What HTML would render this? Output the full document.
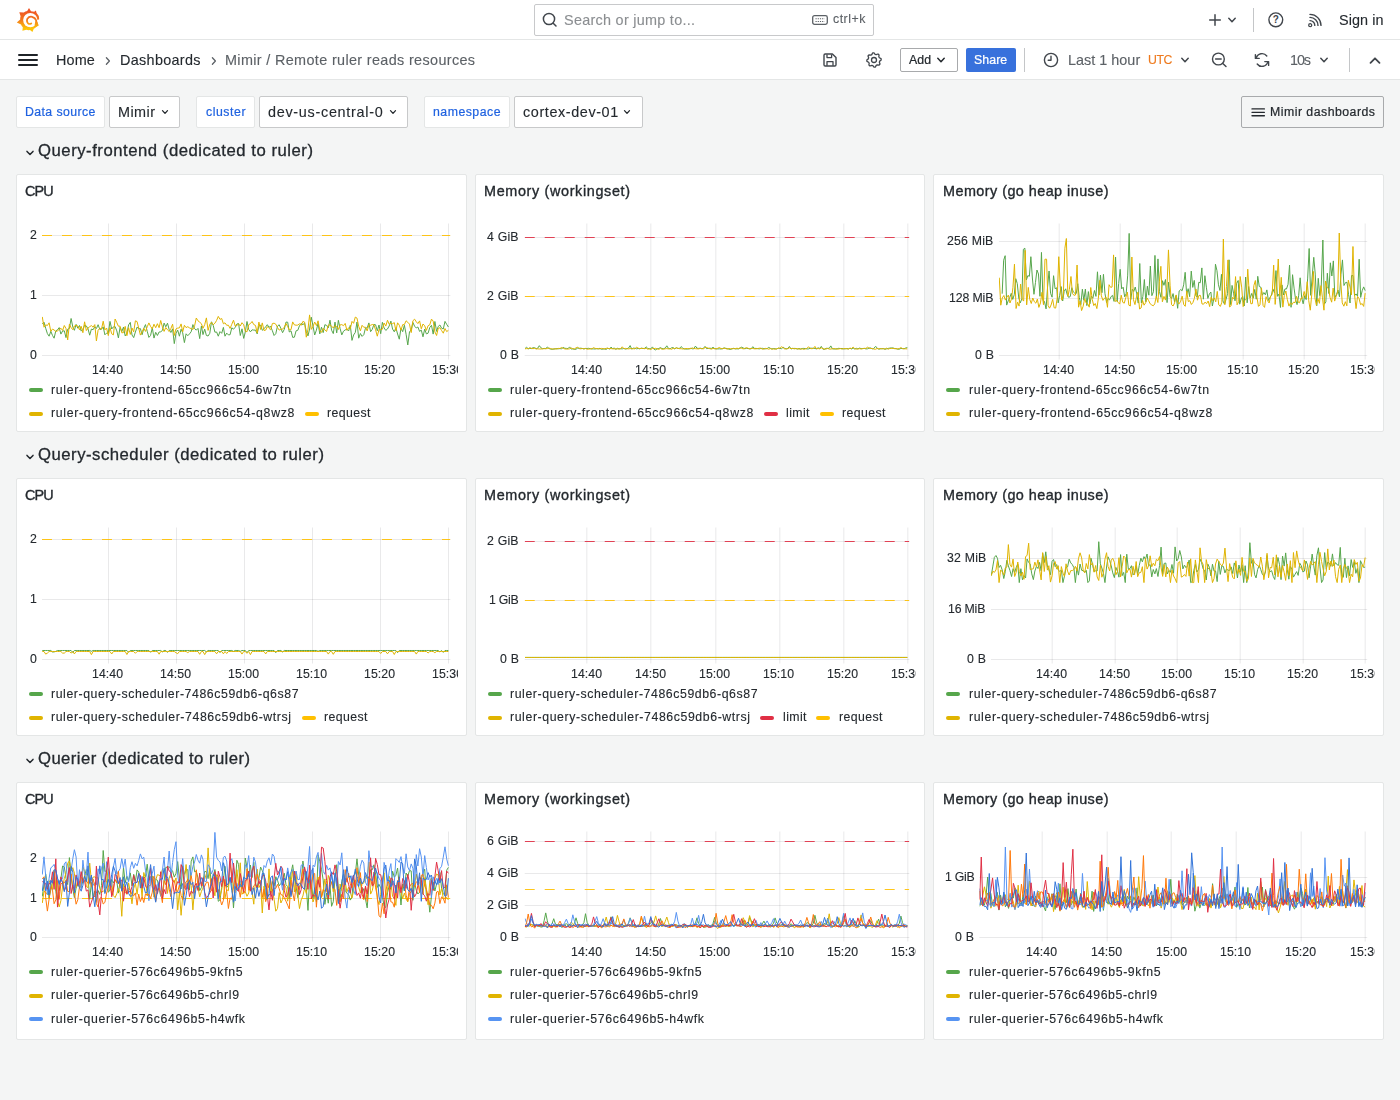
<!DOCTYPE html><html><head><meta charset="utf-8"><title>Mimir / Remote ruler reads resources</title><style>
*{box-sizing:border-box}
html,body{margin:0;padding:0}
body{width:1400px;height:1100px;overflow:hidden;background:#f4f5f5;font-family:"Liberation Sans", sans-serif;color:#24292e;position:relative;font-size:14px}
.abs{position:absolute}
.t{line-height:20px;height:20px;white-space:nowrap;will-change:transform}
.bar{position:absolute;left:0;width:1400px;height:40px;background:#fff;border-bottom:1px solid #e4e6e6}
.panel{position:absolute;background:#fff;border:1px solid #e4e6e6;border-radius:2px;overflow:hidden}
.ptitle{position:absolute;left:8px;top:7px;font-size:14.6px;font-weight:500;line-height:20px;white-space:nowrap;-webkit-text-stroke:0.25px #24292e}
.psvg{position:absolute;left:-1px;top:-1px}
.ax{font-family:"Liberation Sans", sans-serif;font-size:12.4px;fill:#24292e}
.legend{position:absolute;left:13px;font-size:12.6px;line-height:23px;white-space:nowrap}
.lrow{height:23.3px;display:flex;align-items:center}
.li{display:inline-flex;align-items:center;margin-right:10px}
.li i{display:inline-block;width:14px;height:4px;border-radius:2px;margin-right:8px}
.rowt{position:absolute;left:38px;font-size:17px;font-weight:500;line-height:30px;white-space:nowrap;-webkit-text-stroke:0.3px #24292e}
.vlabel{position:absolute;top:96px;height:32px;background:#fff;border:1px solid #e4e6e6;border-radius:2px;color:#1f62e0;font-size:12.6px;line-height:30px;padding-left:8px;white-space:nowrap;-webkit-text-stroke:0.2px #1f62e0}
.vsel{position:absolute;top:96px;height:32px;background:#fff;border:1px solid #c8c9ca;border-radius:2px;font-size:14.6px;line-height:30px;padding-left:8px;white-space:nowrap}
</style></head><body>
<div class="bar" style="top:0"></div>
<svg class="abs" style="left:15px;top:6px" width="28" height="28" viewBox="0 0 28 28">
<defs><linearGradient id="lg" gradientUnits="userSpaceOnUse" x1="0" y1="2" x2="0" y2="26"><stop offset="0.12" stop-color="#ee5426"/><stop offset="0.5" stop-color="#f47a1c"/><stop offset="0.85" stop-color="#fcc40a"/></linearGradient></defs>
<path fill="url(#lg)" d="M14 1.9 L16 5.2 Q17.6 5.2 19.2 5.8 L20.9 4.4 L21.6 7 Q24.6 9.8 24.2 13.2 L23.6 13.8 L22.4 17.4 L23.9 19.3 L21 20.6 Q20.2 22 18.8 22.8 L17.4 25.9 L15 24 Q13 24.4 11.4 23.8 L7.4 24.7 L7.8 21.2 Q6.6 20 6 18.4 L1.8 16.5 L5.2 13.6 Q5 11.8 5.6 10.2 L4.3 6.2 L8.8 6.4 Q10.4 5.2 12.2 5 Z"/>
<circle cx="15.3" cy="14.1" r="7.15" fill="#fff"/>
<path d="M21.6 13.9 L25 13.5 L25 16.4 L22.6 17.2 Z" fill="#fff"/>
<path fill="none" stroke="url(#lg)" stroke-width="1.7" stroke-linecap="round" d="M16.3 17.5 Q14.6 18.6 13 17.3 Q11.2 15.2 12.4 12.7 Q14 10.3 17 10.8 Q20.4 11.6 21.3 14.8 Q21.8 17.2 21.6 19.6"/>
<path fill="url(#lg)" d="M20.4 15 L22.6 16.6 L23.4 19.6 L19 22.4 Z"/>
</svg>
<div class="abs" style="left:534px;top:4px;width:340px;height:32px;border:1px solid #c8c9cb;border-radius:2px;background:#fff"></div>
<svg class="abs" style="left:541px;top:11px" width="18" height="18" viewBox="0 0 18 18"><circle cx="8" cy="8" r="5.6" fill="none" stroke="#41464c" stroke-width="1.5"/><path d="M12.2 12.2 L15 15" stroke="#41464c" stroke-width="1.5" stroke-linecap="round"/></svg>
<div class="abs t" style="left:563.50px;top:12px;height:16px;line-height:16px;font-size:14.4px;color:#8b8e91;font-weight:400;letter-spacing:0.285px;-webkit-text-stroke:0.12px #8b8e91;">Search or jump to...</div>
<svg class="abs" style="left:811px;top:13px" width="18" height="14" viewBox="0 0 18 14"><rect x="1.7" y="2.7" width="14.6" height="8.6" rx="1.8" fill="none" stroke="#5c6166" stroke-width="1.3"/><path d="M4.5 5.7 H13.5 M4.5 8.5 H13.5" stroke="#5c6166" stroke-width="1.1" stroke-dasharray="1.2 1"/></svg>
<div class="abs t" style="left:833.00px;top:12px;height:14px;line-height:14px;font-size:12.3px;color:#5c6166;font-weight:400;letter-spacing:0.513px;-webkit-text-stroke:0.12px #5c6166;">ctrl+k</div>
<svg class="abs" style="left:1205px;top:10px" width="34" height="20" viewBox="0 0 34 20"><path d="M10 4.7 V15.3 M4.7 10 H15.3" stroke="#41464c" stroke-width="1.5" stroke-linecap="round"/><path d="M23.8 8.3 L27 11.7 L30.2 8.3" fill="none" stroke="#41464c" stroke-width="1.5" stroke-linecap="round" stroke-linejoin="round"/></svg>
<div class="abs" style="left:1253px;top:8px;width:1px;height:24px;background:#c4c6c8"></div>
<svg class="abs" style="left:1266px;top:10px" width="20" height="20" viewBox="0 0 20 20"><circle cx="9.8" cy="9.8" r="6.9" fill="none" stroke="#41464c" stroke-width="1.4"/><text x="9.8" y="13.4" text-anchor="middle" font-size="10" font-weight="700" fill="#41464c" font-family="Liberation Sans, sans-serif">?</text></svg>
<svg class="abs" style="left:1306px;top:12px" width="18" height="18" viewBox="0 0 18 18"><circle cx="4.2" cy="13.2" r="1.5" fill="none" stroke="#41464c" stroke-width="1.3"/><path d="M4 8.6 A4.8 4.8 0 0 1 8.8 13.4 M4 5.4 A8 8 0 0 1 12 13.4 M4 2.4 A11 11 0 0 1 15 13.4" fill="none" stroke="#41464c" stroke-width="1.4" stroke-linecap="round"/></svg>
<div class="abs t" style="left:1338.50px;top:12px;height:16px;line-height:16px;font-size:14.4px;color:#24292e;font-weight:400;letter-spacing:0.081px;-webkit-text-stroke:0.12px #24292e;">Sign in</div>
<div class="bar" style="top:40px"></div>
<svg class="abs" style="left:16px;top:50px" width="24" height="20" viewBox="0 0 24 20"><path d="M3 5 H21 M3 10 H21 M3 15 H21" stroke="#1f2328" stroke-width="2" stroke-linecap="round"/></svg>
<div class="abs t" style="left:56.20px;top:52px;height:16px;line-height:16px;font-size:14.4px;color:#24292e;font-weight:400;letter-spacing:0.136px;-webkit-text-stroke:0.12px #24292e;">Home</div>
<svg class="abs" style="left:102px;top:54.8px" width="12" height="12" viewBox="0 0 12 12"><path d="M4.4 2.8 L7.4 6 L4.4 9.2" fill="none" stroke="#5c6166" stroke-width="1.3" stroke-linecap="round" stroke-linejoin="round"/></svg>
<div class="abs t" style="left:120.00px;top:52px;height:16px;line-height:16px;font-size:14.4px;color:#24292e;font-weight:400;letter-spacing:0.321px;-webkit-text-stroke:0.12px #24292e;">Dashboards</div>
<svg class="abs" style="left:208px;top:54.8px" width="12" height="12" viewBox="0 0 12 12"><path d="M4.4 2.8 L7.4 6 L4.4 9.2" fill="none" stroke="#5c6166" stroke-width="1.3" stroke-linecap="round" stroke-linejoin="round"/></svg>
<div class="abs t" style="left:225.00px;top:52px;height:16px;line-height:16px;font-size:14.4px;color:#5c6166;font-weight:400;letter-spacing:0.357px;-webkit-text-stroke:0.12px #5c6166;">Mimir / Remote ruler reads resources</div>
<svg class="abs" style="left:821px;top:51px" width="18" height="18" viewBox="0 0 18 18"><path d="M3 4.2 Q3 3 4.2 3 H11.4 L15 6.6 V13.8 Q15 15 13.8 15 H4.2 Q3 15 3 13.8 Z" fill="none" stroke="#41464c" stroke-width="1.4" stroke-linejoin="round"/><path d="M6 3.4 V6.6 H10.6 V3.4 M6 14.8 V10.6 H12 V14.8" fill="none" stroke="#41464c" stroke-width="1.3" stroke-linejoin="round"/></svg>
<svg class="abs" style="left:865px;top:51px" width="18" height="18" viewBox="0 0 18 18"><path d="M7.60 1.94 L9.00 1.80 L10.13 3.31 L11.22 3.64 L13.00 3.01 L14.09 3.91 L13.82 5.78 L14.36 6.78 L16.06 7.60 L16.20 9.00 L14.69 10.13 L14.36 11.22 L14.99 13.00 L14.09 14.09 L12.22 13.82 L11.22 14.36 L10.40 16.06 L9.00 16.20 L7.87 14.69 L6.78 14.36 L5.00 14.99 L3.91 14.09 L4.18 12.22 L3.64 11.22 L1.94 10.40 L1.80 9.00 L3.31 7.87 L3.64 6.78 L3.01 5.00 L3.91 3.91 L5.78 4.18 L6.78 3.64 Z" fill="none" stroke="#41464c" stroke-width="1.3" stroke-linejoin="round"/><circle cx="9" cy="9" r="2.5" fill="none" stroke="#41464c" stroke-width="1.3"/></svg>
<div class="abs" style="left:900px;top:48px;width:58px;height:24px;border:1px solid #a8aaac;border-radius:2px;background:#fff"></div>
<div class="abs t" style="left:909.00px;top:53px;height:14px;line-height:14px;font-size:12.3px;color:#24292e;font-weight:400;letter-spacing:0.055px;-webkit-text-stroke:0.22px #24292e;">Add</div>
<svg class="abs" style="left:934px;top:54px" width="14" height="12" viewBox="0 0 14 12"><path d="M3.8 4.3 L7 7.7 L10.2 4.3" fill="none" stroke="#24292e" stroke-width="1.5" stroke-linecap="round" stroke-linejoin="round"/></svg>
<div class="abs" style="left:966px;top:48px;width:50px;height:24px;border-radius:2px;background:#3871dc"></div>
<div class="abs t" style="left:974.00px;top:53px;height:14px;line-height:14px;font-size:12.3px;color:#fff;font-weight:400;letter-spacing:0.093px;-webkit-text-stroke:0.22px #fff;">Share</div>
<div class="abs" style="left:1024px;top:48px;width:1px;height:24px;background:#c4c6c8"></div>
<svg class="abs" style="left:1042px;top:51px" width="18" height="18" viewBox="0 0 18 18"><circle cx="9" cy="9" r="6.6" fill="none" stroke="#41464c" stroke-width="1.4"/><path d="M9 5.2 V9.2 H6.2" fill="none" stroke="#41464c" stroke-width="1.4" stroke-linecap="round" stroke-linejoin="round"/></svg>
<div class="abs t" style="left:1068.30px;top:52px;height:16px;line-height:16px;font-size:14.4px;color:#5c6166;font-weight:400;letter-spacing:0.018px;-webkit-text-stroke:0.12px #5c6166;">Last 1 hour</div>
<div class="abs t" style="left:1148.20px;top:53px;height:14px;line-height:14px;font-size:12.3px;color:#ee7a1e;font-weight:400;letter-spacing:-0.391px;-webkit-text-stroke:0.12px #ee7a1e;">UTC</div>
<svg class="abs" style="left:1178px;top:54px" width="14" height="12" viewBox="0 0 14 12"><path d="M3.8 4.3 L7 7.7 L10.2 4.3" fill="none" stroke="#41464c" stroke-width="1.5" stroke-linecap="round" stroke-linejoin="round"/></svg>
<svg class="abs" style="left:1210px;top:51.3px" width="20" height="20" viewBox="0 0 20 20"><circle cx="8.4" cy="8" r="5.9" fill="none" stroke="#41464c" stroke-width="1.4"/><path d="M5.6 8 H11.2 M12.8 12.4 L16 15.6" stroke="#41464c" stroke-width="1.4" stroke-linecap="round"/></svg>
<svg class="abs" style="left:1252px;top:50px" width="20" height="20" viewBox="0 0 20 20"><path d="M4.2 8.2 A6 6 0 0 1 14.8 6 M15.8 11.8 A6 6 0 0 1 5.2 14" fill="none" stroke="#41464c" stroke-width="1.4" stroke-linecap="round"/><path d="M3.4 4.6 V8.4 H7.2 M16.6 15.4 V11.6 H12.8" fill="none" stroke="#41464c" stroke-width="1.4" stroke-linecap="round" stroke-linejoin="round"/></svg>
<div class="abs t" style="left:1289.80px;top:52px;height:16px;line-height:16px;font-size:14.4px;color:#5c6166;font-weight:400;letter-spacing:-1.102px;-webkit-text-stroke:0.12px #5c6166;">10s</div>
<svg class="abs" style="left:1317px;top:54px" width="14" height="12" viewBox="0 0 14 12"><path d="M3.8 4.3 L7 7.7 L10.2 4.3" fill="none" stroke="#41464c" stroke-width="1.5" stroke-linecap="round" stroke-linejoin="round"/></svg>
<div class="abs" style="left:1349px;top:48px;width:1px;height:24px;background:#c4c6c8"></div>
<svg class="abs" style="left:1365px;top:52px" width="20" height="16" viewBox="0 0 20 16"><path d="M5.5 10.9 L10 6.3 L14.5 10.9" fill="none" stroke="#41464c" stroke-width="1.8" stroke-linecap="round" stroke-linejoin="round"/></svg>
<div class="vlabel" style="left:16px;width:88.5px"></div><div class="abs t" style="left:25.20px;top:105px;height:14px;line-height:14px;font-size:12.3px;color:#1f62e0;font-weight:400;letter-spacing:0.399px;-webkit-text-stroke:0.2px #1f62e0;">Data source</div>
<div class="vsel" style="left:109px;width:71px"></div><div class="abs t" style="left:117.50px;top:104px;height:16px;line-height:16px;font-size:14.4px;color:#24292e;font-weight:400;letter-spacing:0.457px;-webkit-text-stroke:0.12px #24292e;">Mimir</div><svg class="abs" style="left:157.5px;top:106.3px" width="14" height="12" viewBox="0 0 14 12"><path d="M4.5 4.65 L7 7.35 L9.5 4.65" fill="none" stroke="#24292e" stroke-width="1.3" stroke-linecap="round" stroke-linejoin="round"/></svg>
<div class="vlabel" style="left:196px;width:58.5px"></div><div class="abs t" style="left:205.50px;top:105px;height:14px;line-height:14px;font-size:12.3px;color:#1f62e0;font-weight:400;letter-spacing:0.547px;-webkit-text-stroke:0.2px #1f62e0;">cluster</div>
<div class="vsel" style="left:259px;width:149px"></div><div class="abs t" style="left:267.80px;top:104px;height:16px;line-height:16px;font-size:14.4px;color:#24292e;font-weight:400;letter-spacing:0.714px;-webkit-text-stroke:0.12px #24292e;">dev-us-central-0</div><svg class="abs" style="left:385.5px;top:106.3px" width="14" height="12" viewBox="0 0 14 12"><path d="M4.5 4.65 L7 7.35 L9.5 4.65" fill="none" stroke="#24292e" stroke-width="1.3" stroke-linecap="round" stroke-linejoin="round"/></svg>
<div class="vlabel" style="left:424px;width:85.5px"></div><div class="abs t" style="left:433.20px;top:105px;height:14px;line-height:14px;font-size:12.3px;color:#1f62e0;font-weight:400;letter-spacing:0.490px;-webkit-text-stroke:0.2px #1f62e0;">namespace</div>
<div class="vsel" style="left:514px;width:128.5px"></div><div class="abs t" style="left:523.00px;top:104px;height:16px;line-height:16px;font-size:14.4px;color:#24292e;font-weight:400;letter-spacing:0.601px;-webkit-text-stroke:0.12px #24292e;">cortex-dev-01</div><svg class="abs" style="left:620px;top:106.3px" width="14" height="12" viewBox="0 0 14 12"><path d="M4.5 4.65 L7 7.35 L9.5 4.65" fill="none" stroke="#24292e" stroke-width="1.3" stroke-linecap="round" stroke-linejoin="round"/></svg>
<div class="abs" style="left:1241px;top:96px;width:143px;height:32px;border:1px solid #a8aaac;border-radius:2px;background:#f4f5f5"></div>
<svg class="abs" style="left:1250px;top:105px" width="16" height="14" viewBox="0 0 16 14"><path d="M2 3.9 H14.4 M2 7.3 H14.4 M2 10.7 H14.4" stroke="#24292e" stroke-width="1.35" stroke-linecap="round"/></svg>
<div class="abs t" style="left:1270.00px;top:105px;height:14px;line-height:14px;font-size:12.3px;color:#24292e;font-weight:400;letter-spacing:0.484px;-webkit-text-stroke:0.22px #24292e;">Mimir dashboards</div>
<svg class="abs" style="left:24px;top:146.8px" width="12" height="12" viewBox="0 0 12 12"><path d="M3 4.4 L6 7.5 L9 4.4" fill="none" stroke="#24292e" stroke-width="1.5" stroke-linecap="round" stroke-linejoin="round"/></svg>
<div class="abs t" style="left:38.30px;top:141px;height:19px;line-height:19px;font-size:16.7px;color:#24292e;font-weight:400;letter-spacing:0.531px;-webkit-text-stroke:0.3px #24292e;">Query-frontend (dedicated to ruler)</div>
<svg class="abs" style="left:24px;top:450.8px" width="12" height="12" viewBox="0 0 12 12"><path d="M3 4.4 L6 7.5 L9 4.4" fill="none" stroke="#24292e" stroke-width="1.5" stroke-linecap="round" stroke-linejoin="round"/></svg>
<div class="abs t" style="left:38.30px;top:445px;height:19px;line-height:19px;font-size:16.7px;color:#24292e;font-weight:400;letter-spacing:0.512px;-webkit-text-stroke:0.3px #24292e;">Query-scheduler (dedicated to ruler)</div>
<svg class="abs" style="left:24px;top:754.8px" width="12" height="12" viewBox="0 0 12 12"><path d="M3 4.4 L6 7.5 L9 4.4" fill="none" stroke="#24292e" stroke-width="1.5" stroke-linecap="round" stroke-linejoin="round"/></svg>
<div class="abs t" style="left:38.30px;top:749px;height:19px;line-height:19px;font-size:16.7px;color:#24292e;font-weight:400;letter-spacing:0.432px;-webkit-text-stroke:0.3px #24292e;">Querier (dedicated to ruler)</div>
<div class="panel" style="left:16px;top:174px;width:450.67px;height:258px">
<svg class="psvg" width="450.67" height="258" viewBox="16 174 450.67 258">
<path d="M108.5 223.5 V359.5 M176.5 223.5 V359.5 M244.5 223.5 V359.5 M312.5 223.5 V359.5 M380.5 223.5 V359.5 M448.5 223.5 V359.5" stroke="rgba(36,41,46,0.105)" stroke-width="1" fill="none"/>
<path d="M42.0 235.5 H450.4 M42.0 295.5 H450.4 M42.0 355.5 H450.4" stroke="rgba(36,41,46,0.105)" stroke-width="1" fill="none"/>
<clipPath id="p1"><rect x="42.0" y="215.5" width="408.4" height="141.5"/></clipPath>
<g clip-path="url(#p1)" fill="none" stroke-width="1" stroke-linejoin="round">
<path d="M42.0 235.5 H450.4" stroke="#ffc000" stroke-opacity="0.9" stroke-dasharray="10 10"/>
<path d="M42.3,324.1 L44.0,322.1 L45.7,328.3 L47.4,333.6 L49.1,336.2 L50.8,331.3 L52.5,335.4 L54.1,338.2 L55.8,330.9 L57.5,329.8 L59.2,327.6 L60.9,334.1 L62.6,331.0 L64.3,330.8 L66.0,337.6 L67.7,329.2 L69.4,328.5 L71.1,318.5 L72.8,327.0 L74.4,330.3 L76.1,324.4 L77.8,328.2 L79.5,325.5 L81.2,331.1 L82.9,329.4 L84.6,325.2 L86.3,325.9 L88.0,328.8 L89.7,335.2 L91.4,329.1 L93.1,329.7 L94.8,326.7 L96.4,328.5 L98.1,324.7 L99.8,329.4 L101.5,329.2 L103.2,326.9 L104.9,334.8 L106.6,333.1 L108.3,333.3 L110.0,321.4 L111.7,329.0 L113.4,326.9 L115.1,326.6 L116.8,330.9 L118.4,337.9 L120.1,327.2 L121.8,331.6 L123.5,327.1 L125.2,335.9 L126.9,333.5 L128.6,324.9 L130.3,322.4 L132.0,335.0 L133.7,337.6 L135.4,332.0 L137.1,327.1 L138.7,328.9 L140.4,328.6 L142.1,334.7 L143.8,328.4 L145.5,324.6 L147.2,331.2 L148.9,337.4 L150.6,335.4 L152.3,327.7 L154.0,338.1 L155.7,332.3 L157.4,335.5 L159.1,332.0 L160.7,331.8 L162.4,330.5 L164.1,323.1 L165.8,326.8 L167.5,323.2 L169.2,329.6 L170.9,332.5 L172.6,328.9 L174.3,343.6 L176.0,333.2 L177.7,330.1 L179.4,336.2 L181.1,329.2 L182.7,332.8 L184.4,342.6 L186.1,333.8 L187.8,335.7 L189.5,333.9 L191.2,331.7 L192.9,324.6 L194.6,328.7 L196.3,330.1 L198.0,328.4 L199.7,338.6 L201.4,326.0 L203.0,334.6 L204.7,329.1 L206.4,335.5 L208.1,336.0 L209.8,333.3 L211.5,321.8 L213.2,325.3 L214.9,332.2 L216.6,332.0 L218.3,336.2 L220.0,331.6 L221.7,333.3 L223.4,327.4 L225.0,336.2 L226.7,333.1 L228.4,334.9 L230.1,334.7 L231.8,327.8 L233.5,329.2 L235.2,327.3 L236.9,324.0 L238.6,323.5 L240.3,335.5 L242.0,328.8 L243.7,338.4 L245.3,332.2 L247.0,321.5 L248.7,329.5 L250.4,331.9 L252.1,329.8 L253.8,330.1 L255.5,330.1 L257.2,333.9 L258.9,325.8 L260.6,325.1 L262.3,330.3 L264.0,328.8 L265.7,326.8 L267.3,324.7 L269.0,327.3 L270.7,326.4 L272.4,330.8 L274.1,335.5 L275.8,333.7 L277.5,326.1 L279.2,324.8 L280.9,328.5 L282.6,332.7 L284.3,329.3 L286.0,322.1 L287.7,322.2 L289.3,332.0 L291.0,330.8 L292.7,337.4 L294.4,337.2 L296.1,330.8 L297.8,330.3 L299.5,325.7 L301.2,323.3 L302.9,324.9 L304.6,322.9 L306.3,331.4 L308.0,335.9 L309.6,329.0 L311.3,317.2 L313.0,326.0 L314.7,335.0 L316.4,330.1 L318.1,323.4 L319.8,333.9 L321.5,327.2 L323.2,332.6 L324.9,324.7 L326.6,325.4 L328.3,327.9 L330.0,320.2 L331.6,330.2 L333.3,333.6 L335.0,322.1 L336.7,332.9 L338.4,320.3 L340.1,328.5 L341.8,334.9 L343.5,331.2 L345.2,329.9 L346.9,329.2 L348.6,331.0 L350.3,325.3 L352.0,340.4 L353.6,335.0 L355.3,332.5 L357.0,322.0 L358.7,338.2 L360.4,333.5 L362.1,336.4 L363.8,334.7 L365.5,328.1 L367.2,327.9 L368.9,322.9 L370.6,331.7 L372.3,329.3 L373.9,324.5 L375.6,324.8 L377.3,330.8 L379.0,325.0 L380.7,333.7 L382.4,322.3 L384.1,328.0 L385.8,330.4 L387.5,329.0 L389.2,326.0 L390.9,321.1 L392.6,329.1 L394.3,331.8 L395.9,327.8 L397.6,334.0 L399.3,339.2 L401.0,328.1 L402.7,331.7 L404.4,325.2 L406.1,334.2 L407.8,345.0 L409.5,331.9 L411.2,329.9 L412.9,322.5 L414.6,326.2 L416.3,328.0 L417.9,327.0 L419.6,331.4 L421.3,330.1 L423.0,336.8 L424.7,329.1 L426.4,333.9 L428.1,333.2 L429.8,327.5 L431.5,325.3 L433.2,334.1 L434.9,321.5 L436.6,331.4 L438.2,326.5 L439.9,325.0 L441.6,328.2 L443.3,329.0 L445.0,321.4 L446.7,324.3 L448.4,327.0" stroke="#56a64b"/>
<path d="M42.3,316.9 L44.0,327.2 L45.7,324.9 L47.4,325.5 L49.1,322.8 L50.8,331.4 L52.5,329.1 L54.1,330.0 L55.8,331.5 L57.5,330.9 L59.2,329.4 L60.9,328.2 L62.6,330.5 L64.3,325.5 L66.0,328.5 L67.7,339.9 L69.4,324.2 L71.1,327.6 L72.8,329.7 L74.4,326.0 L76.1,325.4 L77.8,326.0 L79.5,329.8 L81.2,326.3 L82.9,332.7 L84.6,321.8 L86.3,330.6 L88.0,328.1 L89.7,326.7 L91.4,325.6 L93.1,327.2 L94.8,324.6 L96.4,340.9 L98.1,330.2 L99.8,328.4 L101.5,329.1 L103.2,321.2 L104.9,329.9 L106.6,328.0 L108.3,335.6 L110.0,327.6 L111.7,333.8 L113.4,334.9 L115.1,319.0 L116.8,322.6 L118.4,326.2 L120.1,326.2 L121.8,332.8 L123.5,332.6 L125.2,326.4 L126.9,335.7 L128.6,327.7 L130.3,334.4 L132.0,328.0 L133.7,331.9 L135.4,320.8 L137.1,321.6 L138.7,328.1 L140.4,335.1 L142.1,331.9 L143.8,328.3 L145.5,331.4 L147.2,326.8 L148.9,322.9 L150.6,326.5 L152.3,328.8 L154.0,324.2 L155.7,327.7 L157.4,323.7 L159.1,327.7 L160.7,320.5 L162.4,326.9 L164.1,331.4 L165.8,327.5 L167.5,329.8 L169.2,331.5 L170.9,328.5 L172.6,324.2 L174.3,335.5 L176.0,328.9 L177.7,328.1 L179.4,327.9 L181.1,323.9 L182.7,331.8 L184.4,325.3 L186.1,327.6 L187.8,326.7 L189.5,327.9 L191.2,328.6 L192.9,329.5 L194.6,325.8 L196.3,318.0 L198.0,320.8 L199.7,322.2 L201.4,323.7 L203.0,328.3 L204.7,324.7 L206.4,317.9 L208.1,330.4 L209.8,324.2 L211.5,322.2 L213.2,324.8 L214.9,323.2 L216.6,320.4 L218.3,316.4 L220.0,319.4 L221.7,318.5 L223.4,323.8 L225.0,322.8 L226.7,325.3 L228.4,325.2 L230.1,328.4 L231.8,324.3 L233.5,320.2 L235.2,326.1 L236.9,325.5 L238.6,323.9 L240.3,326.0 L242.0,322.7 L243.7,324.8 L245.3,331.1 L247.0,331.8 L248.7,324.7 L250.4,323.6 L252.1,321.5 L253.8,324.6 L255.5,325.4 L257.2,332.9 L258.9,322.1 L260.6,329.5 L262.3,322.9 L264.0,330.5 L265.7,330.1 L267.3,326.6 L269.0,328.3 L270.7,329.8 L272.4,323.5 L274.1,323.2 L275.8,324.2 L277.5,327.5 L279.2,330.1 L280.9,329.2 L282.6,329.2 L284.3,327.2 L286.0,323.5 L287.7,326.6 L289.3,329.8 L291.0,329.7 L292.7,321.9 L294.4,324.9 L296.1,325.2 L297.8,325.1 L299.5,323.8 L301.2,325.4 L302.9,321.4 L304.6,322.1 L306.3,337.2 L308.0,329.2 L309.6,314.9 L311.3,329.4 L313.0,326.5 L314.7,322.0 L316.4,325.6 L318.1,320.8 L319.8,330.5 L321.5,332.4 L323.2,328.4 L324.9,329.8 L326.6,331.5 L328.3,325.1 L330.0,325.0 L331.6,326.1 L333.3,328.0 L335.0,325.6 L336.7,326.7 L338.4,329.5 L340.1,324.9 L341.8,324.6 L343.5,325.7 L345.2,323.4 L346.9,330.3 L348.6,327.8 L350.3,328.8 L352.0,321.4 L353.6,323.3 L355.3,317.1 L357.0,318.1 L358.7,326.3 L360.4,330.8 L362.1,325.3 L363.8,327.3 L365.5,327.2 L367.2,330.9 L368.9,324.8 L370.6,325.3 L372.3,324.5 L373.9,324.8 L375.6,329.8 L377.3,336.2 L379.0,329.5 L380.7,329.6 L382.4,329.2 L384.1,323.0 L385.8,326.1 L387.5,320.2 L389.2,324.4 L390.9,323.2 L392.6,323.7 L394.3,322.6 L395.9,330.8 L397.6,322.8 L399.3,325.2 L401.0,330.2 L402.7,324.6 L404.4,324.6 L406.1,320.8 L407.8,322.3 L409.5,324.1 L411.2,332.6 L412.9,320.8 L414.6,319.2 L416.3,321.8 L417.9,323.6 L419.6,320.9 L421.3,328.8 L423.0,324.0 L424.7,325.8 L426.4,330.4 L428.1,325.7 L429.8,324.8 L431.5,319.1 L433.2,321.1 L434.9,331.9 L436.6,335.5 L438.2,328.5 L439.9,327.7 L441.6,330.5 L443.3,333.2 L445.0,328.5 L446.7,331.6 L448.4,330.3" stroke="#e0b400"/>
</g>
</svg>
</div>
<div class="abs t" style="left:29.66px;top:228px;height:14px;line-height:14px;font-size:12.3px;color:#24292e;font-weight:400;letter-spacing:0.000px;-webkit-text-stroke:0.12px #24292e;">2</div>
<div class="abs t" style="left:29.66px;top:288px;height:14px;line-height:14px;font-size:12.3px;color:#24292e;font-weight:400;letter-spacing:0.000px;-webkit-text-stroke:0.12px #24292e;">1</div>
<div class="abs t" style="left:29.66px;top:348px;height:14px;line-height:14px;font-size:12.3px;color:#24292e;font-weight:400;letter-spacing:0.000px;-webkit-text-stroke:0.12px #24292e;">0</div>
<div class="abs t" style="left:92.02px;top:363px;height:14px;line-height:14px;font-size:12.3px;color:#24292e;font-weight:400;letter-spacing:0.055px;-webkit-text-stroke:0.12px #24292e;">14:40</div>
<div class="abs t" style="left:160.08px;top:363px;height:14px;line-height:14px;font-size:12.3px;color:#24292e;font-weight:400;letter-spacing:0.055px;-webkit-text-stroke:0.12px #24292e;">14:50</div>
<div class="abs t" style="left:228.15px;top:363px;height:14px;line-height:14px;font-size:12.3px;color:#24292e;font-weight:400;letter-spacing:0.055px;-webkit-text-stroke:0.12px #24292e;">15:00</div>
<div class="abs t" style="left:296.21px;top:363px;height:14px;line-height:14px;font-size:12.3px;color:#24292e;font-weight:400;letter-spacing:0.055px;-webkit-text-stroke:0.12px #24292e;">15:10</div>
<div class="abs t" style="left:364.28px;top:363px;height:14px;line-height:14px;font-size:12.3px;color:#24292e;font-weight:400;letter-spacing:0.055px;-webkit-text-stroke:0.12px #24292e;">15:20</div>
<div class="abs" style="left:432.35px;top:359px;width:25.42px;height:24px;overflow:hidden"><div class="abs t" style="left:0.00px;top:4px;height:14px;line-height:14px;font-size:12.3px;color:#24292e;font-weight:400;letter-spacing:0.055px;-webkit-text-stroke:0.12px #24292e;">15:30</div></div>
<div class="abs t" style="left:25.30px;top:183px;height:16px;line-height:16px;font-size:14.4px;color:#24292e;font-weight:400;letter-spacing:-0.845px;-webkit-text-stroke:0.35px #24292e;">CPU</div>
<div class="abs" style="left:29px;top:388px;width:14px;height:4px;border-radius:2px;background:#56a64b"></div>
<div class="abs t" style="left:51.40px;top:383px;height:14px;line-height:14px;font-size:12.3px;color:#24292e;font-weight:400;letter-spacing:0.667px;-webkit-text-stroke:0.12px #24292e;">ruler-query-frontend-65cc966c54-6w7tn</div>
<div class="abs" style="left:29px;top:411.8px;width:14px;height:4px;border-radius:2px;background:#e0b400"></div>
<div class="abs t" style="left:51.40px;top:406px;height:14px;line-height:14px;font-size:12.3px;color:#24292e;font-weight:400;letter-spacing:0.685px;-webkit-text-stroke:0.12px #24292e;">ruler-query-frontend-65cc966c54-q8wz8</div>
<div class="abs" style="left:305px;top:411.8px;width:14px;height:4px;border-radius:2px;background:#ffc000"></div>
<div class="abs t" style="left:327.40px;top:406px;height:14px;line-height:14px;font-size:12.3px;color:#24292e;font-weight:400;letter-spacing:0.411px;-webkit-text-stroke:0.12px #24292e;">request</div>
<div class="panel" style="left:474.67px;top:174px;width:450.67px;height:258px">
<svg class="psvg" width="450.67" height="258" viewBox="474.67 174 450.67 258">
<path d="M586.5 223.5 V359.5 M650.5 223.5 V359.5 M715.5 223.5 V359.5 M779.5 223.5 V359.5 M843.5 223.5 V359.5 M907.5 223.5 V359.5" stroke="rgba(36,41,46,0.105)" stroke-width="1" fill="none"/>
<path d="M524.4 237.5 H909.0 M524.4 296.5 H909.0 M524.4 355.5 H909.0" stroke="rgba(36,41,46,0.105)" stroke-width="1" fill="none"/>
<clipPath id="p2"><rect x="524.4" y="215.5" width="384.6" height="141.5"/></clipPath>
<g clip-path="url(#p2)" fill="none" stroke-width="1" stroke-linejoin="round">
<path d="M524.4 237.5 H909.0" stroke="#e02f44" stroke-opacity="0.9" stroke-dasharray="10 10"/>
<path d="M524.4 296.5 H909.0" stroke="#ffc000" stroke-opacity="0.9" stroke-dasharray="10 10"/>
<path d="M524.7,348.5 L526.3,347.3 L527.9,348.8 L529.5,348.3 L531.1,348.6 L532.7,347.7 L534.3,347.8 L535.9,348.6 L537.4,348.2 L539.0,345.7 L540.6,347.8 L542.2,348.7 L543.8,348.4 L545.4,348.7 L547.0,347.0 L548.6,348.5 L550.2,349.1 L551.8,349.2 L553.4,349.2 L555.0,348.7 L556.6,348.7 L558.2,348.8 L559.7,348.6 L561.3,348.9 L562.9,347.3 L564.5,348.3 L566.1,348.4 L567.7,348.6 L569.3,346.9 L570.9,349.1 L572.5,348.8 L574.1,349.4 L575.7,349.2 L577.3,348.1 L578.9,348.3 L580.5,348.2 L582.0,348.5 L583.6,348.8 L585.2,348.5 L586.8,348.5 L588.4,348.3 L590.0,348.7 L591.6,348.9 L593.2,348.9 L594.8,349.0 L596.4,348.7 L598.0,348.9 L599.6,348.3 L601.2,349.3 L602.8,349.0 L604.3,349.0 L605.9,349.4 L607.5,348.0 L609.1,349.2 L610.7,347.1 L612.3,348.6 L613.9,348.1 L615.5,349.4 L617.1,348.3 L618.7,348.9 L620.3,348.7 L621.9,348.9 L623.5,348.4 L625.1,349.1 L626.6,348.7 L628.2,348.1 L629.8,345.6 L631.4,349.1 L633.0,348.1 L634.6,348.3 L636.2,348.8 L637.8,348.5 L639.4,348.8 L641.0,348.1 L642.6,348.6 L644.2,348.4 L645.8,346.8 L647.4,348.4 L648.9,348.7 L650.5,348.8 L652.1,346.9 L653.7,349.2 L655.3,349.9 L656.9,348.7 L658.5,348.5 L660.1,347.6 L661.7,348.6 L663.3,348.7 L664.9,348.1 L666.5,345.8 L668.1,348.4 L669.7,348.8 L671.2,347.8 L672.8,347.6 L674.4,348.9 L676.0,347.8 L677.6,348.4 L679.2,348.4 L680.8,346.6 L682.4,348.1 L684.0,348.9 L685.6,349.0 L687.2,349.1 L688.8,348.8 L690.4,348.3 L692.0,348.8 L693.5,348.8 L695.1,346.1 L696.7,348.2 L698.3,348.4 L699.9,348.2 L701.5,348.7 L703.1,348.3 L704.7,346.4 L706.3,348.7 L707.9,348.4 L709.5,348.2 L711.1,348.4 L712.7,347.3 L714.3,348.5 L715.8,348.9 L717.4,348.9 L719.0,348.8 L720.6,349.0 L722.2,348.6 L723.8,347.9 L725.4,348.3 L727.0,348.6 L728.6,349.1 L730.2,349.5 L731.8,348.7 L733.4,348.3 L735.0,348.9 L736.6,348.8 L738.2,348.9 L739.7,348.1 L741.3,347.2 L742.9,348.0 L744.5,348.8 L746.1,348.3 L747.7,348.6 L749.3,348.7 L750.9,348.8 L752.5,346.7 L754.1,348.4 L755.7,348.4 L757.3,348.6 L758.9,348.9 L760.5,348.5 L762.0,348.3 L763.6,348.7 L765.2,348.8 L766.8,348.6 L768.4,347.4 L770.0,348.3 L771.6,349.0 L773.2,348.5 L774.8,348.8 L776.4,348.9 L778.0,348.2 L779.6,348.4 L781.2,348.7 L782.8,347.3 L784.3,348.3 L785.9,348.9 L787.5,348.4 L789.1,346.5 L790.7,349.0 L792.3,348.5 L793.9,348.4 L795.5,348.5 L797.1,349.1 L798.7,348.5 L800.3,349.0 L801.9,348.5 L803.5,348.4 L805.1,348.6 L806.6,348.9 L808.2,348.9 L809.8,348.2 L811.4,348.2 L813.0,348.3 L814.6,348.5 L816.2,348.8 L817.8,347.8 L819.4,348.4 L821.0,346.4 L822.6,349.1 L824.2,349.4 L825.8,348.3 L827.4,348.4 L828.9,348.3 L830.5,345.9 L832.1,348.9 L833.7,348.9 L835.3,349.0 L836.9,348.7 L838.5,348.3 L840.1,348.6 L841.7,348.5 L843.3,348.9 L844.9,348.8 L846.5,348.6 L848.1,348.8 L849.7,348.2 L851.2,349.0 L852.8,348.0 L854.4,349.0 L856.0,348.3 L857.6,348.9 L859.2,348.1 L860.8,348.6 L862.4,348.5 L864.0,348.4 L865.6,348.9 L867.2,348.8 L868.8,348.1 L870.4,348.0 L872.0,348.9 L873.5,348.5 L875.1,346.5 L876.7,347.6 L878.3,349.3 L879.9,348.6 L881.5,348.8 L883.1,348.5 L884.7,349.3 L886.3,348.8 L887.9,348.4 L889.5,348.1 L891.1,347.9 L892.7,348.0 L894.3,348.5 L895.8,348.7 L897.4,349.1 L899.0,349.2 L900.6,348.4 L902.2,348.6 L903.8,348.7 L905.4,348.0 L907.0,347.6" stroke="#56a64b"/>
<path d="M524.7,348.8 L526.3,348.6 L527.9,348.7 L529.5,347.7 L531.1,348.3 L532.7,348.7 L534.3,348.3 L535.9,349.0 L537.4,348.8 L539.0,349.0 L540.6,349.0 L542.2,348.8 L543.8,348.7 L545.4,348.7 L547.0,348.6 L548.6,348.1 L550.2,348.5 L551.8,349.2 L553.4,348.7 L555.0,349.0 L556.6,348.9 L558.2,348.4 L559.7,348.5 L561.3,347.5 L562.9,348.4 L564.5,348.9 L566.1,349.1 L567.7,349.0 L569.3,348.8 L570.9,348.0 L572.5,348.8 L574.1,348.8 L575.7,347.9 L577.3,347.1 L578.9,348.7 L580.5,348.8 L582.0,348.5 L583.6,349.0 L585.2,348.4 L586.8,349.2 L588.4,349.1 L590.0,348.8 L591.6,348.8 L593.2,347.7 L594.8,348.4 L596.4,348.6 L598.0,348.7 L599.6,348.9 L601.2,348.4 L602.8,348.7 L604.3,348.8 L605.9,348.3 L607.5,348.4 L609.1,348.6 L610.7,348.6 L612.3,348.8 L613.9,348.9 L615.5,348.7 L617.1,348.9 L618.7,348.9 L620.3,348.8 L621.9,346.8 L623.5,348.7 L625.1,348.4 L626.6,348.7 L628.2,348.9 L629.8,348.6 L631.4,348.7 L633.0,348.7 L634.6,348.9 L636.2,347.1 L637.8,348.2 L639.4,348.6 L641.0,348.5 L642.6,348.3 L644.2,348.7 L645.8,348.2 L647.4,349.2 L648.9,348.8 L650.5,349.5 L652.1,348.5 L653.7,348.7 L655.3,348.3 L656.9,348.9 L658.5,349.4 L660.1,348.4 L661.7,349.2 L663.3,349.1 L664.9,348.8 L666.5,348.6 L668.1,348.9 L669.7,348.7 L671.2,349.3 L672.8,348.3 L674.4,348.6 L676.0,347.8 L677.6,348.4 L679.2,348.7 L680.8,348.7 L682.4,349.0 L684.0,348.8 L685.6,348.6 L687.2,348.5 L688.8,348.8 L690.4,348.6 L692.0,347.9 L693.5,348.5 L695.1,348.7 L696.7,348.8 L698.3,348.9 L699.9,348.4 L701.5,348.7 L703.1,348.8 L704.7,347.6 L706.3,347.5 L707.9,348.3 L709.5,348.7 L711.1,349.1 L712.7,348.4 L714.3,348.8 L715.8,348.8 L717.4,348.3 L719.0,347.5 L720.6,348.5 L722.2,348.8 L723.8,348.2 L725.4,348.6 L727.0,349.1 L728.6,348.6 L730.2,348.7 L731.8,348.8 L733.4,348.6 L735.0,348.7 L736.6,348.2 L738.2,348.6 L739.7,347.9 L741.3,348.3 L742.9,348.9 L744.5,348.3 L746.1,347.7 L747.7,348.2 L749.3,349.0 L750.9,348.5 L752.5,348.5 L754.1,348.8 L755.7,348.8 L757.3,348.6 L758.9,348.2 L760.5,348.2 L762.0,349.2 L763.6,349.0 L765.2,348.4 L766.8,348.6 L768.4,349.2 L770.0,348.6 L771.6,349.1 L773.2,349.0 L774.8,349.1 L776.4,348.9 L778.0,348.1 L779.6,348.3 L781.2,346.8 L782.8,347.7 L784.3,348.9 L785.9,348.8 L787.5,348.7 L789.1,347.8 L790.7,348.7 L792.3,348.3 L793.9,348.9 L795.5,348.6 L797.1,348.7 L798.7,349.0 L800.3,349.1 L801.9,348.8 L803.5,349.4 L805.1,348.8 L806.6,348.4 L808.2,346.7 L809.8,348.5 L811.4,348.7 L813.0,348.5 L814.6,346.4 L816.2,348.9 L817.8,348.5 L819.4,348.9 L821.0,347.8 L822.6,348.8 L824.2,348.9 L825.8,349.0 L827.4,348.4 L828.9,349.1 L830.5,349.1 L832.1,348.7 L833.7,348.7 L835.3,348.8 L836.9,349.1 L838.5,349.0 L840.1,348.5 L841.7,349.1 L843.3,348.6 L844.9,348.6 L846.5,348.7 L848.1,349.1 L849.7,348.2 L851.2,348.5 L852.8,347.1 L854.4,348.6 L856.0,349.1 L857.6,348.9 L859.2,348.7 L860.8,349.0 L862.4,348.7 L864.0,348.4 L865.6,348.4 L867.2,347.2 L868.8,348.2 L870.4,348.5 L872.0,348.5 L873.5,349.0 L875.1,349.3 L876.7,348.5 L878.3,348.8 L879.9,348.9 L881.5,348.6 L883.1,348.9 L884.7,349.0 L886.3,348.2 L887.9,349.2 L889.5,348.5 L891.1,348.5 L892.7,348.3 L894.3,348.7 L895.8,348.6 L897.4,349.0 L899.0,348.5 L900.6,347.6 L902.2,348.6 L903.8,348.8 L905.4,348.8 L907.0,348.9" stroke="#e0b400"/>
</g>
</svg>
</div>
<div class="abs t" style="left:487.33px;top:230px;height:14px;line-height:14px;font-size:12.3px;color:#24292e;font-weight:400;letter-spacing:0.200px;-webkit-text-stroke:0.12px #24292e;">4 GiB</div>
<div class="abs t" style="left:487.33px;top:289px;height:14px;line-height:14px;font-size:12.3px;color:#24292e;font-weight:400;letter-spacing:0.200px;-webkit-text-stroke:0.12px #24292e;">2 GiB</div>
<div class="abs t" style="left:500.03px;top:348px;height:14px;line-height:14px;font-size:12.3px;color:#24292e;font-weight:400;letter-spacing:0.200px;-webkit-text-stroke:0.12px #24292e;">0 B</div>
<div class="abs t" style="left:570.55px;top:363px;height:14px;line-height:14px;font-size:12.3px;color:#24292e;font-weight:400;letter-spacing:0.055px;-webkit-text-stroke:0.12px #24292e;">14:40</div>
<div class="abs t" style="left:634.65px;top:363px;height:14px;line-height:14px;font-size:12.3px;color:#24292e;font-weight:400;letter-spacing:0.055px;-webkit-text-stroke:0.12px #24292e;">14:50</div>
<div class="abs t" style="left:698.75px;top:363px;height:14px;line-height:14px;font-size:12.3px;color:#24292e;font-weight:400;letter-spacing:0.055px;-webkit-text-stroke:0.12px #24292e;">15:00</div>
<div class="abs t" style="left:762.85px;top:363px;height:14px;line-height:14px;font-size:12.3px;color:#24292e;font-weight:400;letter-spacing:0.055px;-webkit-text-stroke:0.12px #24292e;">15:10</div>
<div class="abs t" style="left:826.95px;top:363px;height:14px;line-height:14px;font-size:12.3px;color:#24292e;font-weight:400;letter-spacing:0.055px;-webkit-text-stroke:0.12px #24292e;">15:20</div>
<div class="abs" style="left:891.05px;top:359px;width:25.39px;height:24px;overflow:hidden"><div class="abs t" style="left:0.00px;top:4px;height:14px;line-height:14px;font-size:12.3px;color:#24292e;font-weight:400;letter-spacing:0.055px;-webkit-text-stroke:0.12px #24292e;">15:30</div></div>
<div class="abs t" style="left:483.97px;top:183px;height:16px;line-height:16px;font-size:14.4px;color:#24292e;font-weight:400;letter-spacing:0.648px;-webkit-text-stroke:0.35px #24292e;">Memory (workingset)</div>
<div class="abs" style="left:487.67px;top:388px;width:14px;height:4px;border-radius:2px;background:#56a64b"></div>
<div class="abs t" style="left:510.07px;top:383px;height:14px;line-height:14px;font-size:12.3px;color:#24292e;font-weight:400;letter-spacing:0.667px;-webkit-text-stroke:0.12px #24292e;">ruler-query-frontend-65cc966c54-6w7tn</div>
<div class="abs" style="left:487.67px;top:411.8px;width:14px;height:4px;border-radius:2px;background:#e0b400"></div>
<div class="abs t" style="left:510.07px;top:406px;height:14px;line-height:14px;font-size:12.3px;color:#24292e;font-weight:400;letter-spacing:0.685px;-webkit-text-stroke:0.12px #24292e;">ruler-query-frontend-65cc966c54-q8wz8</div>
<div class="abs" style="left:763.67px;top:411.8px;width:14px;height:4px;border-radius:2px;background:#e02f44"></div>
<div class="abs t" style="left:786.07px;top:406px;height:14px;line-height:14px;font-size:12.3px;color:#24292e;font-weight:400;letter-spacing:0.410px;-webkit-text-stroke:0.12px #24292e;">limit</div>
<div class="abs" style="left:819.77px;top:411.8px;width:14px;height:4px;border-radius:2px;background:#ffc000"></div>
<div class="abs t" style="left:842.17px;top:406px;height:14px;line-height:14px;font-size:12.3px;color:#24292e;font-weight:400;letter-spacing:0.411px;-webkit-text-stroke:0.12px #24292e;">request</div>
<div class="panel" style="left:933.33px;top:174px;width:450.67px;height:258px">
<svg class="psvg" width="450.67" height="258" viewBox="933.33 174 450.67 258">
<path d="M1059.5 223.5 V359.5 M1120.5 223.5 V359.5 M1181.5 223.5 V359.5 M1243.5 223.5 V359.5 M1304.5 223.5 V359.5 M1365.5 223.5 V359.5" stroke="rgba(36,41,46,0.105)" stroke-width="1" fill="none"/>
<path d="M999.3 241.5 H1367.5 M999.3 298.5 H1367.5 M999.3 355.5 H1367.5" stroke="rgba(36,41,46,0.105)" stroke-width="1" fill="none"/>
<clipPath id="p3"><rect x="999.3" y="215.5" width="368.2" height="141.5"/></clipPath>
<g clip-path="url(#p3)" fill="none" stroke-width="1" stroke-linejoin="round">
<path d="M1002.5,293.7 L1004.0,260.2 L1005.5,255.7 L1007.0,305.1 L1008.5,300.9 L1010.1,297.5 L1011.6,293.3 L1013.1,299.4 L1014.6,294.6 L1016.1,278.7 L1017.6,283.6 L1019.1,298.0 L1020.6,302.9 L1022.2,298.8 L1023.7,249.3 L1025.2,248.2 L1026.7,280.0 L1028.2,275.6 L1029.7,276.3 L1031.2,256.7 L1032.8,279.0 L1034.3,294.3 L1035.8,282.6 L1037.3,270.0 L1038.8,274.0 L1040.3,296.3 L1041.8,252.4 L1043.3,300.4 L1044.8,301.4 L1046.4,308.9 L1047.9,286.9 L1049.4,271.0 L1050.9,293.3 L1052.4,297.2 L1053.9,275.7 L1055.4,288.7 L1057.0,287.8 L1058.5,302.9 L1060.0,295.3 L1061.5,286.6 L1063.0,301.0 L1064.5,291.4 L1066.0,288.8 L1067.5,294.5 L1069.0,297.4 L1070.6,296.5 L1072.1,287.7 L1073.6,291.8 L1075.1,293.2 L1076.6,293.5 L1078.1,283.7 L1079.6,297.4 L1081.2,304.5 L1082.7,289.2 L1084.2,300.3 L1085.7,289.1 L1087.2,305.6 L1088.7,291.6 L1090.2,303.9 L1091.7,296.2 L1093.2,298.2 L1094.8,290.5 L1096.3,296.4 L1097.8,271.8 L1099.3,295.1 L1100.8,275.0 L1102.3,292.7 L1103.8,274.3 L1105.3,293.5 L1106.9,302.5 L1108.4,298.5 L1109.9,299.8 L1111.4,296.6 L1112.9,295.4 L1114.4,301.4 L1115.9,257.1 L1117.5,301.6 L1119.0,283.5 L1120.5,269.3 L1122.0,288.9 L1123.5,287.2 L1125.0,296.8 L1126.5,293.7 L1128.0,275.9 L1129.5,233.4 L1131.1,299.6 L1132.6,289.2 L1134.1,291.5 L1135.6,287.0 L1137.1,293.9 L1138.6,303.1 L1140.1,263.5 L1141.7,303.0 L1143.2,296.4 L1144.7,279.5 L1146.2,301.8 L1147.7,286.2 L1149.2,295.2 L1150.7,266.0 L1152.2,295.7 L1153.8,291.7 L1155.3,255.4 L1156.8,297.6 L1158.3,258.9 L1159.8,291.6 L1161.3,297.4 L1162.8,280.7 L1164.3,285.3 L1165.8,279.5 L1167.4,302.6 L1168.9,282.2 L1170.4,296.6 L1171.9,298.5 L1173.4,293.6 L1174.9,301.9 L1176.4,295.5 L1178.0,308.3 L1179.5,291.0 L1181.0,289.6 L1182.5,290.7 L1184.0,284.8 L1185.5,272.3 L1187.0,294.3 L1188.5,288.7 L1190.0,296.7 L1191.6,271.1 L1193.1,287.4 L1194.6,280.4 L1196.1,295.4 L1197.6,297.2 L1199.1,282.3 L1200.6,282.8 L1202.2,267.9 L1203.7,299.2 L1205.2,275.7 L1206.7,287.2 L1208.2,298.4 L1209.7,293.9 L1211.2,292.0 L1212.7,306.0 L1214.2,298.5 L1215.8,264.2 L1217.3,270.7 L1218.8,284.8 L1220.3,290.5 L1221.8,274.3 L1223.3,301.0 L1224.8,304.1 L1226.3,299.7 L1227.9,293.7 L1229.4,259.8 L1230.9,304.6 L1232.4,285.4 L1233.9,293.2 L1235.4,300.8 L1236.9,283.5 L1238.5,280.5 L1240.0,304.2 L1241.5,298.9 L1243.0,296.2 L1244.5,306.0 L1246.0,277.0 L1247.5,302.8 L1249.0,286.5 L1250.5,298.1 L1252.1,293.4 L1253.6,298.2 L1255.1,289.4 L1256.6,299.2 L1258.1,276.3 L1259.6,286.5 L1261.1,287.1 L1262.7,295.2 L1264.2,292.5 L1265.7,294.8 L1267.2,289.9 L1268.7,300.5 L1270.2,297.6 L1271.7,295.4 L1273.2,288.9 L1274.8,292.9 L1276.3,270.6 L1277.8,296.3 L1279.3,294.1 L1280.8,307.5 L1282.3,284.9 L1283.8,295.0 L1285.3,288.9 L1286.8,289.0 L1288.4,284.3 L1289.9,265.1 L1291.4,307.3 L1292.9,274.7 L1294.4,288.1 L1295.9,299.2 L1297.4,304.6 L1299.0,295.8 L1300.5,277.8 L1302.0,297.7 L1303.5,303.8 L1305.0,295.7 L1306.5,299.6 L1308.0,278.1 L1309.5,248.5 L1311.0,295.3 L1312.6,276.0 L1314.1,257.3 L1315.6,274.1 L1317.1,305.7 L1318.6,278.3 L1320.1,295.6 L1321.6,286.0 L1323.2,240.0 L1324.7,304.1 L1326.2,301.9 L1327.7,273.2 L1329.2,293.5 L1330.7,262.8 L1332.2,276.0 L1333.7,260.9 L1335.2,297.5 L1336.8,294.6 L1338.3,290.0 L1339.8,296.8 L1341.3,274.3 L1342.8,259.9 L1344.3,285.5 L1345.8,282.6 L1347.3,282.3 L1348.9,294.5 L1350.4,303.0 L1351.9,275.5 L1353.4,275.6 L1354.9,295.7 L1356.4,293.9 L1357.9,296.2 L1359.5,259.2 L1361.0,297.4 L1362.5,290.7 L1364.0,286.9 L1365.5,290.6" stroke="#56a64b"/>
<path d="M999.6,277.7 L1001.1,305.2 L1002.6,297.9 L1004.2,295.5 L1005.7,300.1 L1007.2,297.2 L1008.7,295.1 L1010.3,303.0 L1011.8,299.1 L1013.3,287.3 L1014.8,264.2 L1016.4,308.5 L1017.9,302.2 L1019.4,306.1 L1020.9,284.0 L1022.5,299.3 L1024.0,301.1 L1025.5,250.4 L1027.0,304.9 L1028.6,287.4 L1030.1,299.4 L1031.6,303.5 L1033.1,298.0 L1034.7,301.8 L1036.2,303.2 L1037.7,299.1 L1039.2,307.4 L1040.8,302.9 L1042.3,292.3 L1043.8,304.7 L1045.3,259.2 L1046.9,259.2 L1048.4,305.5 L1049.9,308.2 L1051.4,305.0 L1053.0,299.3 L1054.5,307.8 L1056.0,308.1 L1057.5,298.4 L1059.1,256.7 L1060.6,286.0 L1062.1,300.2 L1063.6,296.9 L1065.2,248.3 L1066.7,238.5 L1068.2,296.4 L1069.7,289.5 L1071.3,276.5 L1072.8,293.4 L1074.3,295.4 L1075.8,295.0 L1077.4,265.0 L1078.9,307.2 L1080.4,301.0 L1081.9,310.6 L1083.5,306.2 L1085.0,298.6 L1086.5,303.1 L1088.0,303.6 L1089.6,307.2 L1091.1,287.5 L1092.6,299.6 L1094.1,305.6 L1095.6,303.5 L1097.2,308.6 L1098.7,298.4 L1100.2,280.3 L1101.7,295.8 L1103.3,300.4 L1104.8,298.2 L1106.3,296.9 L1107.8,307.3 L1109.4,284.7 L1110.9,287.3 L1112.4,287.1 L1113.9,254.9 L1115.5,301.5 L1117.0,300.4 L1118.5,302.4 L1120.0,304.1 L1121.6,295.2 L1123.1,302.3 L1124.6,303.2 L1126.1,297.8 L1127.7,292.1 L1129.2,305.2 L1130.7,306.0 L1132.2,257.0 L1133.8,299.7 L1135.3,304.6 L1136.8,296.9 L1138.3,292.1 L1139.9,309.0 L1141.4,308.0 L1142.9,300.4 L1144.4,305.2 L1146.0,302.7 L1147.5,298.0 L1149.0,300.7 L1150.5,303.8 L1152.1,305.0 L1153.6,305.8 L1155.1,303.9 L1156.6,296.3 L1158.2,302.5 L1159.7,281.6 L1161.2,266.3 L1162.7,301.8 L1164.3,296.4 L1165.8,300.1 L1167.3,287.3 L1168.8,249.9 L1170.4,285.2 L1171.9,304.7 L1173.4,306.0 L1174.9,303.0 L1176.5,294.9 L1178.0,302.6 L1179.5,303.8 L1181.0,301.2 L1182.5,296.1 L1184.1,304.6 L1185.6,306.3 L1187.1,291.1 L1188.6,301.5 L1190.2,300.7 L1191.7,304.5 L1193.2,302.6 L1194.7,298.5 L1196.3,289.0 L1197.8,300.2 L1199.3,295.4 L1200.8,295.4 L1202.4,304.0 L1203.9,304.2 L1205.4,302.1 L1206.9,303.7 L1208.5,301.0 L1210.0,306.6 L1211.5,297.1 L1213.0,300.6 L1214.6,297.9 L1216.1,301.8 L1217.6,291.4 L1219.1,304.9 L1220.7,306.4 L1222.2,302.2 L1223.7,239.0 L1225.2,304.7 L1226.8,286.6 L1228.3,259.9 L1229.8,306.9 L1231.3,306.0 L1232.9,297.3 L1234.4,298.9 L1235.9,276.6 L1237.4,304.8 L1239.0,301.6 L1240.5,276.5 L1242.0,287.1 L1243.5,306.6 L1245.1,300.5 L1246.6,298.9 L1248.1,269.2 L1249.6,293.3 L1251.2,303.8 L1252.7,303.6 L1254.2,285.7 L1255.7,280.5 L1257.3,297.3 L1258.8,306.4 L1260.3,304.9 L1261.8,287.9 L1263.4,305.4 L1264.9,307.4 L1266.4,296.7 L1267.9,300.7 L1269.5,303.0 L1271.0,295.8 L1272.5,294.5 L1274.0,265.1 L1275.5,304.4 L1277.1,284.9 L1278.6,259.0 L1280.1,296.2 L1281.6,277.3 L1283.2,307.1 L1284.7,295.3 L1286.2,291.0 L1287.7,299.6 L1289.3,306.1 L1290.8,302.8 L1292.3,304.6 L1293.8,302.2 L1295.4,302.7 L1296.9,296.3 L1298.4,302.0 L1299.9,302.8 L1301.5,297.9 L1303.0,298.3 L1304.5,291.5 L1306.0,297.8 L1307.6,281.7 L1309.1,300.7 L1310.6,310.2 L1312.1,294.5 L1313.7,271.4 L1315.2,297.7 L1316.7,305.2 L1318.2,298.5 L1319.8,303.3 L1321.3,285.6 L1322.8,297.9 L1324.3,310.2 L1325.9,281.0 L1327.4,287.1 L1328.9,288.9 L1330.4,297.4 L1332.0,302.2 L1333.5,288.1 L1335.0,301.1 L1336.5,296.2 L1338.1,292.0 L1339.6,233.0 L1341.1,281.3 L1342.6,302.9 L1344.2,306.2 L1345.7,301.7 L1347.2,305.8 L1348.7,280.2 L1350.3,287.1 L1351.8,294.8 L1353.3,246.5 L1354.8,294.1 L1356.4,308.6 L1357.9,296.5 L1359.4,298.5 L1360.9,304.6 L1362.5,303.6 L1364.0,306.4 L1365.5,293.1" stroke="#e0b400"/>
</g>
</svg>
</div>
<div class="abs t" style="left:947.47px;top:234px;height:14px;line-height:14px;font-size:12.3px;color:#24292e;font-weight:400;letter-spacing:0.200px;-webkit-text-stroke:0.12px #24292e;">256 MiB</div>
<div class="abs t" style="left:949.38px;top:291px;height:14px;line-height:14px;font-size:12.3px;color:#24292e;font-weight:400;letter-spacing:-0.117px;-webkit-text-stroke:0.12px #24292e;">128 MiB</div>
<div class="abs t" style="left:974.93px;top:348px;height:14px;line-height:14px;font-size:12.3px;color:#24292e;font-weight:400;letter-spacing:0.200px;-webkit-text-stroke:0.12px #24292e;">0 B</div>
<div class="abs t" style="left:1042.78px;top:363px;height:14px;line-height:14px;font-size:12.3px;color:#24292e;font-weight:400;letter-spacing:0.055px;-webkit-text-stroke:0.12px #24292e;">14:40</div>
<div class="abs t" style="left:1104.15px;top:363px;height:14px;line-height:14px;font-size:12.3px;color:#24292e;font-weight:400;letter-spacing:0.055px;-webkit-text-stroke:0.12px #24292e;">14:50</div>
<div class="abs t" style="left:1165.52px;top:363px;height:14px;line-height:14px;font-size:12.3px;color:#24292e;font-weight:400;letter-spacing:0.055px;-webkit-text-stroke:0.12px #24292e;">15:00</div>
<div class="abs t" style="left:1226.88px;top:363px;height:14px;line-height:14px;font-size:12.3px;color:#24292e;font-weight:400;letter-spacing:0.055px;-webkit-text-stroke:0.12px #24292e;">15:10</div>
<div class="abs t" style="left:1288.25px;top:363px;height:14px;line-height:14px;font-size:12.3px;color:#24292e;font-weight:400;letter-spacing:0.055px;-webkit-text-stroke:0.12px #24292e;">15:20</div>
<div class="abs" style="left:1349.62px;top:359px;width:25.48px;height:24px;overflow:hidden"><div class="abs t" style="left:0.00px;top:4px;height:14px;line-height:14px;font-size:12.3px;color:#24292e;font-weight:400;letter-spacing:0.055px;-webkit-text-stroke:0.12px #24292e;">15:30</div></div>
<div class="abs t" style="left:942.63px;top:183px;height:16px;line-height:16px;font-size:14.4px;color:#24292e;font-weight:400;letter-spacing:0.453px;-webkit-text-stroke:0.35px #24292e;">Memory (go heap inuse)</div>
<div class="abs" style="left:946.33px;top:388px;width:14px;height:4px;border-radius:2px;background:#56a64b"></div>
<div class="abs t" style="left:968.73px;top:383px;height:14px;line-height:14px;font-size:12.3px;color:#24292e;font-weight:400;letter-spacing:0.667px;-webkit-text-stroke:0.12px #24292e;">ruler-query-frontend-65cc966c54-6w7tn</div>
<div class="abs" style="left:946.33px;top:411.8px;width:14px;height:4px;border-radius:2px;background:#e0b400"></div>
<div class="abs t" style="left:968.73px;top:406px;height:14px;line-height:14px;font-size:12.3px;color:#24292e;font-weight:400;letter-spacing:0.685px;-webkit-text-stroke:0.12px #24292e;">ruler-query-frontend-65cc966c54-q8wz8</div>
<div class="panel" style="left:16px;top:478px;width:450.67px;height:258px">
<svg class="psvg" width="450.67" height="258" viewBox="16 478 450.67 258">
<path d="M108.5 527.5 V663.5 M176.5 527.5 V663.5 M244.5 527.5 V663.5 M312.5 527.5 V663.5 M380.5 527.5 V663.5 M448.5 527.5 V663.5" stroke="rgba(36,41,46,0.105)" stroke-width="1" fill="none"/>
<path d="M42.0 539.5 H450.4 M42.0 599.5 H450.4 M42.0 659.5 H450.4" stroke="rgba(36,41,46,0.105)" stroke-width="1" fill="none"/>
<clipPath id="p4"><rect x="42.0" y="519.5" width="408.4" height="141.5"/></clipPath>
<g clip-path="url(#p4)" fill="none" stroke-width="1" stroke-linejoin="round">
<path d="M42.0 539.5 H450.4" stroke="#ffc000" stroke-opacity="0.9" stroke-dasharray="10 10"/>
<path d="M42.3,650.5 L44.0,650.5 L45.7,650.5 L47.4,650.5 L49.1,650.5 L50.8,650.5 L52.5,652.0 L54.1,651.9 L55.8,651.4 L57.5,650.5 L59.2,650.5 L60.9,650.5 L62.6,650.5 L64.3,650.5 L66.0,650.5 L67.7,650.5 L69.4,650.5 L71.1,650.5 L72.8,652.5 L74.4,650.5 L76.1,650.5 L77.8,650.5 L79.5,650.5 L81.2,650.5 L82.9,650.5 L84.6,650.5 L86.3,650.5 L88.0,650.5 L89.7,650.5 L91.4,651.3 L93.1,650.5 L94.8,650.5 L96.4,650.5 L98.1,650.5 L99.8,650.5 L101.5,650.5 L103.2,650.5 L104.9,650.5 L106.6,650.5 L108.3,650.5 L110.0,650.5 L111.7,650.5 L113.4,650.5 L115.1,650.5 L116.8,650.5 L118.4,650.5 L120.1,650.5 L121.8,650.5 L123.5,650.5 L125.2,650.5 L126.9,650.5 L128.6,652.3 L130.3,650.5 L132.0,650.5 L133.7,650.5 L135.4,650.5 L137.1,650.5 L138.7,650.5 L140.4,650.5 L142.1,650.5 L143.8,650.5 L145.5,650.5 L147.2,650.5 L148.9,650.5 L150.6,652.3 L152.3,650.5 L154.0,650.5 L155.7,650.5 L157.4,650.5 L159.1,650.5 L160.7,650.5 L162.4,651.9 L164.1,650.5 L165.8,650.5 L167.5,652.4 L169.2,650.5 L170.9,650.5 L172.6,650.5 L174.3,650.5 L176.0,650.5 L177.7,650.5 L179.4,650.5 L181.1,650.5 L182.7,650.5 L184.4,650.5 L186.1,650.5 L187.8,650.5 L189.5,650.5 L191.2,650.5 L192.9,650.5 L194.6,650.5 L196.3,650.5 L198.0,650.5 L199.7,650.5 L201.4,650.5 L203.0,650.5 L204.7,650.5 L206.4,651.9 L208.1,650.5 L209.8,650.5 L211.5,650.5 L213.2,650.5 L214.9,650.5 L216.6,650.5 L218.3,650.5 L220.0,652.6 L221.7,650.5 L223.4,650.5 L225.0,650.5 L226.7,650.5 L228.4,650.5 L230.1,650.5 L231.8,650.5 L233.5,651.4 L235.2,650.5 L236.9,650.5 L238.6,650.5 L240.3,651.3 L242.0,650.5 L243.7,650.5 L245.3,650.5 L247.0,652.6 L248.7,650.5 L250.4,650.5 L252.1,650.5 L253.8,650.5 L255.5,650.5 L257.2,650.5 L258.9,650.5 L260.6,650.5 L262.3,650.5 L264.0,650.5 L265.7,650.5 L267.3,650.5 L269.0,650.5 L270.7,650.5 L272.4,650.5 L274.1,650.5 L275.8,652.7 L277.5,650.5 L279.2,650.5 L280.9,650.5 L282.6,652.0 L284.3,650.5 L286.0,650.5 L287.7,650.5 L289.3,650.5 L291.0,650.5 L292.7,650.5 L294.4,650.5 L296.1,650.5 L297.8,650.5 L299.5,650.5 L301.2,650.5 L302.9,650.5 L304.6,650.5 L306.3,650.5 L308.0,650.5 L309.6,650.5 L311.3,650.5 L313.0,650.5 L314.7,650.5 L316.4,650.5 L318.1,651.3 L319.8,650.5 L321.5,650.5 L323.2,650.5 L324.9,650.5 L326.6,650.5 L328.3,650.5 L330.0,650.5 L331.6,650.5 L333.3,650.5 L335.0,650.5 L336.7,650.5 L338.4,650.5 L340.1,650.5 L341.8,650.5 L343.5,650.5 L345.2,650.5 L346.9,650.5 L348.6,650.5 L350.3,650.5 L352.0,650.5 L353.6,650.5 L355.3,650.5 L357.0,650.5 L358.7,650.5 L360.4,650.5 L362.1,650.5 L363.8,650.5 L365.5,650.5 L367.2,650.5 L368.9,650.5 L370.6,650.5 L372.3,650.5 L373.9,650.5 L375.6,650.5 L377.3,650.5 L379.0,650.5 L380.7,650.5 L382.4,650.5 L384.1,650.5 L385.8,650.5 L387.5,650.5 L389.2,650.5 L390.9,650.5 L392.6,650.5 L394.3,650.5 L395.9,650.5 L397.6,652.7 L399.3,650.5 L401.0,650.5 L402.7,650.5 L404.4,650.5 L406.1,650.5 L407.8,650.5 L409.5,650.5 L411.2,650.5 L412.9,650.5 L414.6,650.5 L416.3,650.5 L417.9,650.5 L419.6,650.5 L421.3,650.5 L423.0,650.5 L424.7,650.5 L426.4,650.5 L428.1,650.5 L429.8,650.5 L431.5,650.5 L433.2,650.5 L434.9,650.5 L436.6,650.5 L438.2,650.5 L439.9,651.9 L441.6,650.5 L443.3,652.4 L445.0,650.5 L446.7,650.5 L448.4,650.5" stroke="#56a64b"/>
<path d="M42.3,651.5 L44.0,651.5 L45.7,654.1 L47.4,653.1 L49.1,651.5 L50.8,651.5 L52.5,651.5 L54.1,651.5 L55.8,651.5 L57.5,651.5 L59.2,651.5 L60.9,651.5 L62.6,653.1 L64.3,653.1 L66.0,651.5 L67.7,651.5 L69.4,651.5 L71.1,653.1 L72.8,651.5 L74.4,653.9 L76.1,651.5 L77.8,651.5 L79.5,651.5 L81.2,651.5 L82.9,651.5 L84.6,651.5 L86.3,651.5 L88.0,651.5 L89.7,651.5 L91.4,654.6 L93.1,651.5 L94.8,651.5 L96.4,651.5 L98.1,651.5 L99.8,651.5 L101.5,651.5 L103.2,651.5 L104.9,651.5 L106.6,651.5 L108.3,651.5 L110.0,651.5 L111.7,654.0 L113.4,651.5 L115.1,651.5 L116.8,651.5 L118.4,651.5 L120.1,651.5 L121.8,651.5 L123.5,651.5 L125.2,651.5 L126.9,654.5 L128.6,651.5 L130.3,651.5 L132.0,651.5 L133.7,651.5 L135.4,653.3 L137.1,651.5 L138.7,651.5 L140.4,651.5 L142.1,651.5 L143.8,651.5 L145.5,651.5 L147.2,651.5 L148.9,651.5 L150.6,651.5 L152.3,651.5 L154.0,651.5 L155.7,651.5 L157.4,651.5 L159.1,654.2 L160.7,651.5 L162.4,651.5 L164.1,651.5 L165.8,651.5 L167.5,651.5 L169.2,651.5 L170.9,651.5 L172.6,651.5 L174.3,651.5 L176.0,652.7 L177.7,653.7 L179.4,651.5 L181.1,651.5 L182.7,651.5 L184.4,651.5 L186.1,651.5 L187.8,652.6 L189.5,651.5 L191.2,651.5 L192.9,651.5 L194.6,651.5 L196.3,651.5 L198.0,651.5 L199.7,654.3 L201.4,651.5 L203.0,651.5 L204.7,654.6 L206.4,651.5 L208.1,651.5 L209.8,651.5 L211.5,651.5 L213.2,651.5 L214.9,651.5 L216.6,653.8 L218.3,651.5 L220.0,651.5 L221.7,651.5 L223.4,653.8 L225.0,651.5 L226.7,653.5 L228.4,651.5 L230.1,651.5 L231.8,651.5 L233.5,651.5 L235.2,651.5 L236.9,651.5 L238.6,651.5 L240.3,651.5 L242.0,654.1 L243.7,651.5 L245.3,651.5 L247.0,653.3 L248.7,651.5 L250.4,654.6 L252.1,651.5 L253.8,651.5 L255.5,651.5 L257.2,651.5 L258.9,651.5 L260.6,651.5 L262.3,651.5 L264.0,651.5 L265.7,653.9 L267.3,651.5 L269.0,651.5 L270.7,651.5 L272.4,651.5 L274.1,651.5 L275.8,651.5 L277.5,651.5 L279.2,651.5 L280.9,651.5 L282.6,651.5 L284.3,651.5 L286.0,651.5 L287.7,651.5 L289.3,651.5 L291.0,651.5 L292.7,651.5 L294.4,651.5 L296.1,651.5 L297.8,651.5 L299.5,651.5 L301.2,651.5 L302.9,651.5 L304.6,651.5 L306.3,651.5 L308.0,651.5 L309.6,651.5 L311.3,651.5 L313.0,651.5 L314.7,651.5 L316.4,651.5 L318.1,651.5 L319.8,651.5 L321.5,651.5 L323.2,651.5 L324.9,651.5 L326.6,651.5 L328.3,654.1 L330.0,651.5 L331.6,651.5 L333.3,654.3 L335.0,651.5 L336.7,651.5 L338.4,651.5 L340.1,651.5 L341.8,651.5 L343.5,651.5 L345.2,651.5 L346.9,651.5 L348.6,651.5 L350.3,651.5 L352.0,651.5 L353.6,651.5 L355.3,651.5 L357.0,651.5 L358.7,651.5 L360.4,651.5 L362.1,651.5 L363.8,651.5 L365.5,651.5 L367.2,651.5 L368.9,651.5 L370.6,651.5 L372.3,651.5 L373.9,651.5 L375.6,651.5 L377.3,651.5 L379.0,651.5 L380.7,653.5 L382.4,651.5 L384.1,651.5 L385.8,651.5 L387.5,653.8 L389.2,651.5 L390.9,651.5 L392.6,651.5 L394.3,654.5 L395.9,651.5 L397.6,651.5 L399.3,651.5 L401.0,651.5 L402.7,651.5 L404.4,651.5 L406.1,651.5 L407.8,651.5 L409.5,651.5 L411.2,651.5 L412.9,651.5 L414.6,651.5 L416.3,654.1 L417.9,651.5 L419.6,651.5 L421.3,651.5 L423.0,651.5 L424.7,651.5 L426.4,651.5 L428.1,653.0 L429.8,651.5 L431.5,651.5 L433.2,651.5 L434.9,652.7 L436.6,651.5 L438.2,651.5 L439.9,651.5 L441.6,651.5 L443.3,651.5 L445.0,651.5 L446.7,651.5 L448.4,651.5" stroke="#e0b400"/>
</g>
</svg>
</div>
<div class="abs t" style="left:29.66px;top:532px;height:14px;line-height:14px;font-size:12.3px;color:#24292e;font-weight:400;letter-spacing:0.000px;-webkit-text-stroke:0.12px #24292e;">2</div>
<div class="abs t" style="left:29.66px;top:592px;height:14px;line-height:14px;font-size:12.3px;color:#24292e;font-weight:400;letter-spacing:0.000px;-webkit-text-stroke:0.12px #24292e;">1</div>
<div class="abs t" style="left:29.66px;top:652px;height:14px;line-height:14px;font-size:12.3px;color:#24292e;font-weight:400;letter-spacing:0.000px;-webkit-text-stroke:0.12px #24292e;">0</div>
<div class="abs t" style="left:92.02px;top:667px;height:14px;line-height:14px;font-size:12.3px;color:#24292e;font-weight:400;letter-spacing:0.055px;-webkit-text-stroke:0.12px #24292e;">14:40</div>
<div class="abs t" style="left:160.08px;top:667px;height:14px;line-height:14px;font-size:12.3px;color:#24292e;font-weight:400;letter-spacing:0.055px;-webkit-text-stroke:0.12px #24292e;">14:50</div>
<div class="abs t" style="left:228.15px;top:667px;height:14px;line-height:14px;font-size:12.3px;color:#24292e;font-weight:400;letter-spacing:0.055px;-webkit-text-stroke:0.12px #24292e;">15:00</div>
<div class="abs t" style="left:296.21px;top:667px;height:14px;line-height:14px;font-size:12.3px;color:#24292e;font-weight:400;letter-spacing:0.055px;-webkit-text-stroke:0.12px #24292e;">15:10</div>
<div class="abs t" style="left:364.28px;top:667px;height:14px;line-height:14px;font-size:12.3px;color:#24292e;font-weight:400;letter-spacing:0.055px;-webkit-text-stroke:0.12px #24292e;">15:20</div>
<div class="abs" style="left:432.35px;top:663px;width:25.42px;height:24px;overflow:hidden"><div class="abs t" style="left:0.00px;top:4px;height:14px;line-height:14px;font-size:12.3px;color:#24292e;font-weight:400;letter-spacing:0.055px;-webkit-text-stroke:0.12px #24292e;">15:30</div></div>
<div class="abs t" style="left:25.30px;top:487px;height:16px;line-height:16px;font-size:14.4px;color:#24292e;font-weight:400;letter-spacing:-0.845px;-webkit-text-stroke:0.35px #24292e;">CPU</div>
<div class="abs" style="left:29px;top:692px;width:14px;height:4px;border-radius:2px;background:#56a64b"></div>
<div class="abs t" style="left:51.40px;top:687px;height:14px;line-height:14px;font-size:12.3px;color:#24292e;font-weight:400;letter-spacing:0.574px;-webkit-text-stroke:0.12px #24292e;">ruler-query-scheduler-7486c59db6-q6s87</div>
<div class="abs" style="left:29px;top:715.8px;width:14px;height:4px;border-radius:2px;background:#e0b400"></div>
<div class="abs t" style="left:51.40px;top:710px;height:14px;line-height:14px;font-size:12.3px;color:#24292e;font-weight:400;letter-spacing:0.594px;-webkit-text-stroke:0.12px #24292e;">ruler-query-scheduler-7486c59db6-wtrsj</div>
<div class="abs" style="left:301.6px;top:715.8px;width:14px;height:4px;border-radius:2px;background:#ffc000"></div>
<div class="abs t" style="left:324.00px;top:710px;height:14px;line-height:14px;font-size:12.3px;color:#24292e;font-weight:400;letter-spacing:0.411px;-webkit-text-stroke:0.12px #24292e;">request</div>
<div class="panel" style="left:474.67px;top:478px;width:450.67px;height:258px">
<svg class="psvg" width="450.67" height="258" viewBox="474.67 478 450.67 258">
<path d="M586.5 527.5 V663.5 M650.5 527.5 V663.5 M715.5 527.5 V663.5 M779.5 527.5 V663.5 M843.5 527.5 V663.5 M907.5 527.5 V663.5" stroke="rgba(36,41,46,0.105)" stroke-width="1" fill="none"/>
<path d="M524.4 541.5 H909.0 M524.4 600.5 H909.0 M524.4 659.5 H909.0" stroke="rgba(36,41,46,0.105)" stroke-width="1" fill="none"/>
<clipPath id="p5"><rect x="524.4" y="519.5" width="384.6" height="141.5"/></clipPath>
<g clip-path="url(#p5)" fill="none" stroke-width="1" stroke-linejoin="round">
<path d="M524.4 541.5 H909.0" stroke="#e02f44" stroke-opacity="0.9" stroke-dasharray="10 10"/>
<path d="M524.4 600.5 H909.0" stroke="#ffc000" stroke-opacity="0.9" stroke-dasharray="10 10"/>
<path d="M524.7,657.4 L526.3,657.4 L527.9,657.4 L529.5,657.4 L531.1,657.4 L532.7,657.4 L534.3,657.4 L535.9,657.4 L537.4,657.4 L539.0,657.4 L540.6,657.4 L542.2,657.4 L543.8,657.4 L545.4,657.4 L547.0,657.4 L548.6,657.4 L550.2,657.4 L551.8,657.4 L553.4,657.4 L555.0,657.4 L556.6,657.4 L558.2,657.4 L559.7,657.4 L561.3,657.4 L562.9,657.4 L564.5,657.4 L566.1,657.4 L567.7,657.4 L569.3,657.4 L570.9,657.4 L572.5,657.4 L574.1,657.4 L575.7,657.4 L577.3,657.4 L578.9,657.4 L580.5,657.4 L582.0,657.4 L583.6,657.4 L585.2,657.4 L586.8,657.4 L588.4,657.4 L590.0,657.4 L591.6,657.4 L593.2,657.4 L594.8,657.4 L596.4,657.4 L598.0,657.4 L599.6,657.4 L601.2,657.4 L602.8,657.4 L604.3,657.4 L605.9,657.4 L607.5,657.4 L609.1,657.4 L610.7,657.4 L612.3,657.4 L613.9,657.4 L615.5,657.4 L617.1,657.4 L618.7,657.4 L620.3,657.4 L621.9,657.4 L623.5,657.4 L625.1,657.4 L626.6,657.4 L628.2,657.4 L629.8,657.4 L631.4,657.4 L633.0,657.4 L634.6,657.4 L636.2,657.4 L637.8,657.4 L639.4,657.4 L641.0,657.4 L642.6,657.4 L644.2,657.4 L645.8,657.4 L647.4,657.4 L648.9,657.4 L650.5,657.4 L652.1,657.4 L653.7,657.4 L655.3,657.4 L656.9,657.4 L658.5,657.4 L660.1,657.4 L661.7,657.4 L663.3,657.4 L664.9,657.4 L666.5,657.4 L668.1,657.4 L669.7,657.4 L671.2,657.4 L672.8,657.4 L674.4,657.4 L676.0,657.4 L677.6,657.4 L679.2,657.4 L680.8,657.4 L682.4,657.4 L684.0,657.4 L685.6,657.4 L687.2,657.4 L688.8,657.4 L690.4,657.4 L692.0,657.4 L693.5,657.4 L695.1,657.4 L696.7,657.4 L698.3,657.4 L699.9,657.4 L701.5,657.4 L703.1,657.4 L704.7,657.4 L706.3,657.4 L707.9,657.4 L709.5,657.4 L711.1,657.4 L712.7,657.4 L714.3,657.4 L715.8,657.4 L717.4,657.4 L719.0,657.4 L720.6,657.4 L722.2,657.4 L723.8,657.4 L725.4,657.4 L727.0,657.4 L728.6,657.4 L730.2,657.4 L731.8,657.4 L733.4,657.4 L735.0,657.4 L736.6,657.4 L738.2,657.4 L739.7,657.4 L741.3,657.4 L742.9,657.4 L744.5,657.4 L746.1,657.4 L747.7,657.4 L749.3,657.4 L750.9,657.4 L752.5,657.4 L754.1,657.4 L755.7,657.4 L757.3,657.4 L758.9,657.4 L760.5,657.4 L762.0,657.4 L763.6,657.4 L765.2,657.4 L766.8,657.4 L768.4,657.4 L770.0,657.4 L771.6,657.4 L773.2,657.4 L774.8,657.4 L776.4,657.4 L778.0,657.4 L779.6,657.4 L781.2,657.4 L782.8,657.4 L784.3,657.4 L785.9,657.4 L787.5,657.4 L789.1,657.4 L790.7,657.4 L792.3,657.4 L793.9,657.4 L795.5,657.4 L797.1,657.4 L798.7,657.4 L800.3,657.4 L801.9,657.4 L803.5,657.4 L805.1,657.4 L806.6,657.4 L808.2,657.4 L809.8,657.4 L811.4,657.4 L813.0,657.4 L814.6,657.4 L816.2,657.4 L817.8,657.4 L819.4,657.4 L821.0,657.4 L822.6,657.4 L824.2,657.4 L825.8,657.4 L827.4,657.4 L828.9,657.4 L830.5,657.4 L832.1,657.4 L833.7,657.4 L835.3,657.4 L836.9,657.4 L838.5,657.4 L840.1,657.4 L841.7,657.4 L843.3,657.4 L844.9,657.4 L846.5,657.4 L848.1,657.4 L849.7,657.4 L851.2,657.4 L852.8,657.4 L854.4,657.4 L856.0,657.4 L857.6,657.4 L859.2,657.4 L860.8,657.4 L862.4,657.4 L864.0,657.4 L865.6,657.4 L867.2,657.4 L868.8,657.4 L870.4,657.4 L872.0,657.4 L873.5,657.4 L875.1,657.4 L876.7,657.4 L878.3,657.4 L879.9,657.4 L881.5,657.4 L883.1,657.4 L884.7,657.4 L886.3,657.4 L887.9,657.4 L889.5,657.4 L891.1,657.4 L892.7,657.4 L894.3,657.4 L895.8,657.4 L897.4,657.4 L899.0,657.4 L900.6,657.4 L902.2,657.4 L903.8,657.4 L905.4,657.4 L907.0,657.4" stroke="#56a64b"/>
<path d="M524.7,657.5 L526.3,657.5 L527.9,657.5 L529.5,657.5 L531.1,657.5 L532.7,657.5 L534.3,657.5 L535.9,657.5 L537.4,657.5 L539.0,657.5 L540.6,657.5 L542.2,657.5 L543.8,657.5 L545.4,657.5 L547.0,657.5 L548.6,657.5 L550.2,657.5 L551.8,657.5 L553.4,657.5 L555.0,657.5 L556.6,657.5 L558.2,657.5 L559.7,657.5 L561.3,657.5 L562.9,657.5 L564.5,657.5 L566.1,657.5 L567.7,657.5 L569.3,657.5 L570.9,657.5 L572.5,657.5 L574.1,657.5 L575.7,657.5 L577.3,657.5 L578.9,657.5 L580.5,657.5 L582.0,657.5 L583.6,657.5 L585.2,657.5 L586.8,657.5 L588.4,657.5 L590.0,657.5 L591.6,657.5 L593.2,657.5 L594.8,657.5 L596.4,657.5 L598.0,657.5 L599.6,657.5 L601.2,657.5 L602.8,657.5 L604.3,657.5 L605.9,657.5 L607.5,657.5 L609.1,657.5 L610.7,657.5 L612.3,657.5 L613.9,657.5 L615.5,657.5 L617.1,657.5 L618.7,657.5 L620.3,657.5 L621.9,657.5 L623.5,657.5 L625.1,657.5 L626.6,657.5 L628.2,657.5 L629.8,657.5 L631.4,657.5 L633.0,657.5 L634.6,657.5 L636.2,657.5 L637.8,657.5 L639.4,657.5 L641.0,657.5 L642.6,657.5 L644.2,657.5 L645.8,657.5 L647.4,657.5 L648.9,657.5 L650.5,657.5 L652.1,657.5 L653.7,657.5 L655.3,657.5 L656.9,657.5 L658.5,657.5 L660.1,657.5 L661.7,657.5 L663.3,657.5 L664.9,657.5 L666.5,657.5 L668.1,657.5 L669.7,657.5 L671.2,657.5 L672.8,657.5 L674.4,657.5 L676.0,657.5 L677.6,657.5 L679.2,657.5 L680.8,657.5 L682.4,657.5 L684.0,657.5 L685.6,657.5 L687.2,657.5 L688.8,657.5 L690.4,657.5 L692.0,657.5 L693.5,657.5 L695.1,657.5 L696.7,657.5 L698.3,657.5 L699.9,657.5 L701.5,657.5 L703.1,657.5 L704.7,657.5 L706.3,657.5 L707.9,657.5 L709.5,657.5 L711.1,657.5 L712.7,657.5 L714.3,657.5 L715.8,657.5 L717.4,657.5 L719.0,657.5 L720.6,657.5 L722.2,657.5 L723.8,657.5 L725.4,657.5 L727.0,657.5 L728.6,657.5 L730.2,657.5 L731.8,657.5 L733.4,657.5 L735.0,657.5 L736.6,657.5 L738.2,657.5 L739.7,657.5 L741.3,657.5 L742.9,657.5 L744.5,657.5 L746.1,657.5 L747.7,657.5 L749.3,657.5 L750.9,657.5 L752.5,657.5 L754.1,657.5 L755.7,657.5 L757.3,657.5 L758.9,657.5 L760.5,657.5 L762.0,657.5 L763.6,657.5 L765.2,657.5 L766.8,657.5 L768.4,657.5 L770.0,657.5 L771.6,657.5 L773.2,657.5 L774.8,657.5 L776.4,657.5 L778.0,657.5 L779.6,657.5 L781.2,657.5 L782.8,657.5 L784.3,657.5 L785.9,657.5 L787.5,657.5 L789.1,657.5 L790.7,657.5 L792.3,657.5 L793.9,657.5 L795.5,657.5 L797.1,657.5 L798.7,657.5 L800.3,657.5 L801.9,657.5 L803.5,657.5 L805.1,657.5 L806.6,657.5 L808.2,657.5 L809.8,657.5 L811.4,657.5 L813.0,657.5 L814.6,657.5 L816.2,657.5 L817.8,657.5 L819.4,657.5 L821.0,657.5 L822.6,657.5 L824.2,657.5 L825.8,657.5 L827.4,657.5 L828.9,657.5 L830.5,657.5 L832.1,657.5 L833.7,657.5 L835.3,657.5 L836.9,657.5 L838.5,657.5 L840.1,657.5 L841.7,657.5 L843.3,657.5 L844.9,657.5 L846.5,657.5 L848.1,657.5 L849.7,657.5 L851.2,657.5 L852.8,657.5 L854.4,657.5 L856.0,657.5 L857.6,657.5 L859.2,657.5 L860.8,657.5 L862.4,657.5 L864.0,657.5 L865.6,657.5 L867.2,657.5 L868.8,657.5 L870.4,657.5 L872.0,657.5 L873.5,657.5 L875.1,657.5 L876.7,657.5 L878.3,657.5 L879.9,657.5 L881.5,657.5 L883.1,657.5 L884.7,657.5 L886.3,657.5 L887.9,657.5 L889.5,657.5 L891.1,657.5 L892.7,657.5 L894.3,657.5 L895.8,657.5 L897.4,657.5 L899.0,657.5 L900.6,657.5 L902.2,657.5 L903.8,657.5 L905.4,657.5 L907.0,657.5" stroke="#e0b400"/>
</g>
</svg>
</div>
<div class="abs t" style="left:487.33px;top:534px;height:14px;line-height:14px;font-size:12.3px;color:#24292e;font-weight:400;letter-spacing:0.200px;-webkit-text-stroke:0.12px #24292e;">2 GiB</div>
<div class="abs t" style="left:489.23px;top:593px;height:14px;line-height:14px;font-size:12.3px;color:#24292e;font-weight:400;letter-spacing:-0.275px;-webkit-text-stroke:0.12px #24292e;">1 GiB</div>
<div class="abs t" style="left:500.03px;top:652px;height:14px;line-height:14px;font-size:12.3px;color:#24292e;font-weight:400;letter-spacing:0.200px;-webkit-text-stroke:0.12px #24292e;">0 B</div>
<div class="abs t" style="left:570.55px;top:667px;height:14px;line-height:14px;font-size:12.3px;color:#24292e;font-weight:400;letter-spacing:0.055px;-webkit-text-stroke:0.12px #24292e;">14:40</div>
<div class="abs t" style="left:634.65px;top:667px;height:14px;line-height:14px;font-size:12.3px;color:#24292e;font-weight:400;letter-spacing:0.055px;-webkit-text-stroke:0.12px #24292e;">14:50</div>
<div class="abs t" style="left:698.75px;top:667px;height:14px;line-height:14px;font-size:12.3px;color:#24292e;font-weight:400;letter-spacing:0.055px;-webkit-text-stroke:0.12px #24292e;">15:00</div>
<div class="abs t" style="left:762.85px;top:667px;height:14px;line-height:14px;font-size:12.3px;color:#24292e;font-weight:400;letter-spacing:0.055px;-webkit-text-stroke:0.12px #24292e;">15:10</div>
<div class="abs t" style="left:826.95px;top:667px;height:14px;line-height:14px;font-size:12.3px;color:#24292e;font-weight:400;letter-spacing:0.055px;-webkit-text-stroke:0.12px #24292e;">15:20</div>
<div class="abs" style="left:891.05px;top:663px;width:25.39px;height:24px;overflow:hidden"><div class="abs t" style="left:0.00px;top:4px;height:14px;line-height:14px;font-size:12.3px;color:#24292e;font-weight:400;letter-spacing:0.055px;-webkit-text-stroke:0.12px #24292e;">15:30</div></div>
<div class="abs t" style="left:483.97px;top:487px;height:16px;line-height:16px;font-size:14.4px;color:#24292e;font-weight:400;letter-spacing:0.648px;-webkit-text-stroke:0.35px #24292e;">Memory (workingset)</div>
<div class="abs" style="left:487.67px;top:692px;width:14px;height:4px;border-radius:2px;background:#56a64b"></div>
<div class="abs t" style="left:510.07px;top:687px;height:14px;line-height:14px;font-size:12.3px;color:#24292e;font-weight:400;letter-spacing:0.574px;-webkit-text-stroke:0.12px #24292e;">ruler-query-scheduler-7486c59db6-q6s87</div>
<div class="abs" style="left:487.67px;top:715.8px;width:14px;height:4px;border-radius:2px;background:#e0b400"></div>
<div class="abs t" style="left:510.07px;top:710px;height:14px;line-height:14px;font-size:12.3px;color:#24292e;font-weight:400;letter-spacing:0.594px;-webkit-text-stroke:0.12px #24292e;">ruler-query-scheduler-7486c59db6-wtrsj</div>
<div class="abs" style="left:760.27px;top:715.8px;width:14px;height:4px;border-radius:2px;background:#e02f44"></div>
<div class="abs t" style="left:782.67px;top:710px;height:14px;line-height:14px;font-size:12.3px;color:#24292e;font-weight:400;letter-spacing:0.410px;-webkit-text-stroke:0.12px #24292e;">limit</div>
<div class="abs" style="left:816.37px;top:715.8px;width:14px;height:4px;border-radius:2px;background:#ffc000"></div>
<div class="abs t" style="left:838.77px;top:710px;height:14px;line-height:14px;font-size:12.3px;color:#24292e;font-weight:400;letter-spacing:0.411px;-webkit-text-stroke:0.12px #24292e;">request</div>
<div class="panel" style="left:933.33px;top:478px;width:450.67px;height:258px">
<svg class="psvg" width="450.67" height="258" viewBox="933.33 478 450.67 258">
<path d="M1052.5 527.5 V663.5 M1115.5 527.5 V663.5 M1177.5 527.5 V663.5 M1240.5 527.5 V663.5 M1303.5 527.5 V663.5 M1365.5 527.5 V663.5" stroke="rgba(36,41,46,0.105)" stroke-width="1" fill="none"/>
<path d="M991.3 558.5 H1367.5 M991.3 609.5 H1367.5 M991.3 659.5 H1367.5" stroke="rgba(36,41,46,0.105)" stroke-width="1" fill="none"/>
<clipPath id="p6"><rect x="991.3" y="519.5" width="376.2" height="141.5"/></clipPath>
<g clip-path="url(#p6)" fill="none" stroke-width="1" stroke-linejoin="round">
<path d="M991.6,575.6 L993.2,566.1 L994.7,557.4 L996.3,555.5 L997.8,558.3 L999.4,567.5 L1000.9,565.3 L1002.5,569.9 L1004.1,578.5 L1005.6,571.7 L1007.2,560.3 L1008.7,565.9 L1010.3,570.5 L1011.9,576.5 L1013.4,568.7 L1015.0,572.6 L1016.5,567.6 L1018.1,564.0 L1019.6,582.6 L1021.2,568.7 L1022.8,579.8 L1024.3,575.5 L1025.9,578.0 L1027.4,559.0 L1029.0,562.5 L1030.5,563.9 L1032.1,573.9 L1033.7,579.6 L1035.2,571.0 L1036.8,566.3 L1038.3,568.5 L1039.9,562.4 L1041.5,570.8 L1043.0,553.4 L1044.6,562.6 L1046.1,551.8 L1047.7,566.0 L1049.2,569.8 L1050.8,574.8 L1052.4,561.4 L1053.9,559.5 L1055.5,566.7 L1057.0,564.6 L1058.6,570.1 L1060.1,571.3 L1061.7,570.3 L1063.3,582.6 L1064.8,576.1 L1066.4,567.6 L1067.9,566.9 L1069.5,559.2 L1071.1,562.9 L1072.6,564.5 L1074.2,567.6 L1075.7,582.6 L1077.3,567.6 L1078.8,575.1 L1080.4,564.0 L1082.0,570.3 L1083.5,570.7 L1085.1,572.3 L1086.6,570.3 L1088.2,582.6 L1089.7,580.9 L1091.3,558.2 L1092.9,564.5 L1094.4,571.6 L1096.0,570.8 L1097.5,571.0 L1099.1,541.7 L1100.7,563.8 L1102.2,568.0 L1103.8,573.4 L1105.3,582.6 L1106.9,567.0 L1108.4,556.8 L1110.0,560.5 L1111.6,565.9 L1113.1,572.9 L1114.7,577.6 L1116.2,567.4 L1117.8,571.4 L1119.3,577.2 L1120.9,554.6 L1122.5,575.6 L1124.0,572.4 L1125.6,582.6 L1127.1,554.2 L1128.7,569.3 L1130.3,568.6 L1131.8,565.7 L1133.4,574.8 L1134.9,573.1 L1136.5,565.7 L1138.0,574.7 L1139.6,565.5 L1141.2,558.2 L1142.7,561.9 L1144.3,556.6 L1145.8,559.4 L1147.4,554.0 L1148.9,565.7 L1150.5,564.6 L1152.1,576.9 L1153.6,569.5 L1155.2,573.9 L1156.7,568.6 L1158.3,576.5 L1159.9,565.4 L1161.4,547.1 L1163.0,574.3 L1164.5,563.4 L1166.1,563.0 L1167.6,574.0 L1169.2,570.4 L1170.8,572.3 L1172.3,564.5 L1173.9,573.2 L1175.4,546.9 L1177.0,561.0 L1178.5,558.8 L1180.1,550.5 L1181.7,556.9 L1183.2,568.9 L1184.8,565.1 L1186.3,567.7 L1187.9,565.9 L1189.5,560.1 L1191.0,582.6 L1192.6,581.6 L1194.1,570.7 L1195.7,564.4 L1197.2,572.0 L1198.8,569.6 L1200.4,559.1 L1201.9,562.6 L1203.5,568.9 L1205.0,570.8 L1206.6,580.0 L1208.2,564.1 L1209.7,567.2 L1211.3,575.9 L1212.8,564.2 L1214.4,571.2 L1215.9,570.9 L1217.5,581.6 L1219.1,561.0 L1220.6,574.4 L1222.2,565.9 L1223.7,566.4 L1225.3,572.9 L1226.8,568.8 L1228.4,570.3 L1230.0,570.4 L1231.5,566.9 L1233.1,573.6 L1234.6,562.9 L1236.2,567.5 L1237.8,578.0 L1239.3,565.1 L1240.9,571.8 L1242.4,564.7 L1244.0,582.6 L1245.5,565.7 L1247.1,582.6 L1248.7,572.2 L1250.2,542.7 L1251.8,563.3 L1253.3,560.1 L1254.9,574.5 L1256.4,577.9 L1258.0,569.4 L1259.6,565.4 L1261.1,569.5 L1262.7,574.3 L1264.2,575.9 L1265.8,572.0 L1267.4,555.5 L1268.9,568.6 L1270.5,571.7 L1272.0,570.7 L1273.6,576.4 L1275.1,579.5 L1276.7,567.2 L1278.3,557.5 L1279.8,564.3 L1281.4,579.6 L1282.9,556.0 L1284.5,566.1 L1286.0,552.9 L1287.6,569.4 L1289.2,579.2 L1290.7,566.4 L1292.3,569.5 L1293.8,577.1 L1295.4,574.3 L1297.0,571.6 L1298.5,575.4 L1300.1,563.2 L1301.6,565.7 L1303.2,571.9 L1304.7,571.2 L1306.3,561.0 L1307.9,564.9 L1309.4,577.8 L1311.0,566.1 L1312.5,554.1 L1314.1,565.7 L1315.6,575.1 L1317.2,555.7 L1318.8,547.8 L1320.3,566.9 L1321.9,582.6 L1323.4,579.9 L1325.0,552.6 L1326.6,569.3 L1328.1,562.0 L1329.7,563.3 L1331.2,566.3 L1332.8,553.9 L1334.3,565.9 L1335.9,562.6 L1337.5,564.8 L1339.0,565.3 L1340.6,547.4 L1342.1,576.4 L1343.7,577.2 L1345.2,558.3 L1346.8,577.6 L1348.4,565.9 L1349.9,575.8 L1351.5,559.5 L1353.0,567.4 L1354.6,561.7 L1356.2,573.3 L1357.7,568.5 L1359.3,582.6 L1360.8,560.7 L1362.4,564.2 L1363.9,567.4 L1365.5,567.1" stroke="#56a64b"/>
<path d="M991.6,575.6 L993.2,571.2 L994.7,572.4 L996.3,569.9 L997.8,560.5 L999.4,582.6 L1000.9,570.1 L1002.5,571.4 L1004.1,575.0 L1005.6,568.0 L1007.2,567.0 L1008.7,544.6 L1010.3,564.3 L1011.9,567.1 L1013.4,559.1 L1015.0,576.5 L1016.5,572.4 L1018.1,562.0 L1019.6,571.5 L1021.2,575.9 L1022.8,572.2 L1024.3,579.3 L1025.9,556.6 L1027.4,555.5 L1029.0,543.2 L1030.5,569.6 L1032.1,569.1 L1033.7,568.8 L1035.2,562.1 L1036.8,566.9 L1038.3,559.8 L1039.9,569.8 L1041.5,579.9 L1043.0,552.6 L1044.6,571.5 L1046.1,556.5 L1047.7,570.1 L1049.2,565.7 L1050.8,582.1 L1052.4,575.9 L1053.9,563.4 L1055.5,561.6 L1057.0,569.1 L1058.6,565.7 L1060.1,582.6 L1061.7,566.6 L1063.3,573.1 L1064.8,576.4 L1066.4,563.8 L1067.9,571.1 L1069.5,575.0 L1071.1,570.6 L1072.6,570.6 L1074.2,569.6 L1075.7,566.3 L1077.3,571.0 L1078.8,558.7 L1080.4,552.8 L1082.0,557.9 L1083.5,570.1 L1085.1,572.8 L1086.6,563.5 L1088.2,568.9 L1089.7,554.6 L1091.3,565.0 L1092.9,562.9 L1094.4,572.2 L1096.0,565.5 L1097.5,577.0 L1099.1,580.5 L1100.7,565.2 L1102.2,577.2 L1103.8,572.6 L1105.3,559.1 L1106.9,552.7 L1108.4,566.5 L1110.0,570.9 L1111.6,560.1 L1113.1,558.3 L1114.7,562.2 L1116.2,574.8 L1117.8,571.5 L1119.3,557.7 L1120.9,576.9 L1122.5,566.4 L1124.0,556.0 L1125.6,557.7 L1127.1,572.9 L1128.7,569.6 L1130.3,569.0 L1131.8,577.1 L1133.4,566.3 L1134.9,574.7 L1136.5,561.5 L1138.0,576.7 L1139.6,572.7 L1141.2,572.4 L1142.7,566.7 L1144.3,582.6 L1145.8,558.4 L1147.4,569.1 L1148.9,565.8 L1150.5,555.8 L1152.1,566.8 L1153.6,563.2 L1155.2,565.8 L1156.7,559.3 L1158.3,560.7 L1159.9,556.6 L1161.4,567.5 L1163.0,576.4 L1164.5,564.5 L1166.1,576.9 L1167.6,567.1 L1169.2,569.9 L1170.8,582.6 L1172.3,570.1 L1173.9,576.0 L1175.4,578.7 L1177.0,582.6 L1178.5,563.2 L1180.1,561.5 L1181.7,577.1 L1183.2,576.4 L1184.8,574.5 L1186.3,576.4 L1187.9,562.0 L1189.5,576.1 L1191.0,558.8 L1192.6,582.6 L1194.1,582.6 L1195.7,559.9 L1197.2,570.8 L1198.8,582.6 L1200.4,547.8 L1201.9,561.3 L1203.5,564.5 L1205.0,582.6 L1206.6,559.6 L1208.2,567.9 L1209.7,569.4 L1211.3,571.4 L1212.8,582.6 L1214.4,578.5 L1215.9,564.0 L1217.5,559.1 L1219.1,561.8 L1220.6,564.1 L1222.2,565.9 L1223.7,563.1 L1225.3,548.1 L1226.8,567.0 L1228.4,581.6 L1230.0,563.6 L1231.5,570.7 L1233.1,577.4 L1234.6,578.9 L1236.2,560.8 L1237.8,573.7 L1239.3,569.4 L1240.9,575.4 L1242.4,557.4 L1244.0,571.3 L1245.5,571.5 L1247.1,581.3 L1248.7,578.8 L1250.2,557.9 L1251.8,576.5 L1253.3,558.4 L1254.9,562.9 L1256.4,564.4 L1258.0,565.4 L1259.6,567.3 L1261.1,557.0 L1262.7,566.2 L1264.2,579.7 L1265.8,569.8 L1267.4,553.3 L1268.9,577.8 L1270.5,567.4 L1272.0,567.8 L1273.6,557.3 L1275.1,574.9 L1276.7,554.8 L1278.3,576.8 L1279.8,565.9 L1281.4,577.3 L1282.9,565.5 L1284.5,572.4 L1286.0,580.4 L1287.6,564.1 L1289.2,575.8 L1290.7,560.7 L1292.3,582.6 L1293.8,552.5 L1295.4,567.7 L1297.0,550.9 L1298.5,560.0 L1300.1,566.2 L1301.6,568.4 L1303.2,570.7 L1304.7,559.9 L1306.3,567.7 L1307.9,579.4 L1309.4,568.2 L1311.0,561.3 L1312.5,565.0 L1314.1,563.5 L1315.6,561.6 L1317.2,582.6 L1318.8,564.2 L1320.3,552.3 L1321.9,561.4 L1323.4,568.8 L1325.0,575.8 L1326.6,571.3 L1328.1,548.9 L1329.7,569.9 L1331.2,561.0 L1332.8,566.4 L1334.3,560.2 L1335.9,576.7 L1337.5,582.6 L1339.0,569.4 L1340.6,565.0 L1342.1,582.6 L1343.7,568.3 L1345.2,564.5 L1346.8,568.0 L1348.4,569.7 L1349.9,582.6 L1351.5,574.2 L1353.0,576.8 L1354.6,559.6 L1356.2,564.5 L1357.7,562.3 L1359.3,581.2 L1360.8,578.2 L1362.4,564.7 L1363.9,567.0 L1365.5,557.5" stroke="#e0b400"/>
</g>
</svg>
</div>
<div class="abs t" style="left:946.52px;top:551px;height:14px;line-height:14px;font-size:12.3px;color:#24292e;font-weight:400;letter-spacing:0.200px;-webkit-text-stroke:0.12px #24292e;">32 MiB</div>
<div class="abs t" style="left:948.42px;top:602px;height:14px;line-height:14px;font-size:12.3px;color:#24292e;font-weight:400;letter-spacing:-0.180px;-webkit-text-stroke:0.12px #24292e;">16 MiB</div>
<div class="abs t" style="left:966.93px;top:652px;height:14px;line-height:14px;font-size:12.3px;color:#24292e;font-weight:400;letter-spacing:0.200px;-webkit-text-stroke:0.12px #24292e;">0 B</div>
<div class="abs t" style="left:1036.08px;top:667px;height:14px;line-height:14px;font-size:12.3px;color:#24292e;font-weight:400;letter-spacing:0.055px;-webkit-text-stroke:0.12px #24292e;">14:40</div>
<div class="abs t" style="left:1098.78px;top:667px;height:14px;line-height:14px;font-size:12.3px;color:#24292e;font-weight:400;letter-spacing:0.055px;-webkit-text-stroke:0.12px #24292e;">14:50</div>
<div class="abs t" style="left:1161.48px;top:667px;height:14px;line-height:14px;font-size:12.3px;color:#24292e;font-weight:400;letter-spacing:0.055px;-webkit-text-stroke:0.12px #24292e;">15:00</div>
<div class="abs t" style="left:1224.18px;top:667px;height:14px;line-height:14px;font-size:12.3px;color:#24292e;font-weight:400;letter-spacing:0.055px;-webkit-text-stroke:0.12px #24292e;">15:10</div>
<div class="abs t" style="left:1286.88px;top:667px;height:14px;line-height:14px;font-size:12.3px;color:#24292e;font-weight:400;letter-spacing:0.055px;-webkit-text-stroke:0.12px #24292e;">15:20</div>
<div class="abs" style="left:1349.58px;top:663px;width:25.52px;height:24px;overflow:hidden"><div class="abs t" style="left:0.00px;top:4px;height:14px;line-height:14px;font-size:12.3px;color:#24292e;font-weight:400;letter-spacing:0.055px;-webkit-text-stroke:0.12px #24292e;">15:30</div></div>
<div class="abs t" style="left:942.63px;top:487px;height:16px;line-height:16px;font-size:14.4px;color:#24292e;font-weight:400;letter-spacing:0.453px;-webkit-text-stroke:0.35px #24292e;">Memory (go heap inuse)</div>
<div class="abs" style="left:946.33px;top:692px;width:14px;height:4px;border-radius:2px;background:#56a64b"></div>
<div class="abs t" style="left:968.73px;top:687px;height:14px;line-height:14px;font-size:12.3px;color:#24292e;font-weight:400;letter-spacing:0.574px;-webkit-text-stroke:0.12px #24292e;">ruler-query-scheduler-7486c59db6-q6s87</div>
<div class="abs" style="left:946.33px;top:715.8px;width:14px;height:4px;border-radius:2px;background:#e0b400"></div>
<div class="abs t" style="left:968.73px;top:710px;height:14px;line-height:14px;font-size:12.3px;color:#24292e;font-weight:400;letter-spacing:0.594px;-webkit-text-stroke:0.12px #24292e;">ruler-query-scheduler-7486c59db6-wtrsj</div>
<div class="panel" style="left:16px;top:782px;width:450.67px;height:258px">
<svg class="psvg" width="450.67" height="258" viewBox="16 782 450.67 258">
<path d="M108.5 831.5 V941.5 M176.5 831.5 V941.5 M244.5 831.5 V941.5 M312.5 831.5 V941.5 M380.5 831.5 V941.5 M448.5 831.5 V941.5" stroke="rgba(36,41,46,0.105)" stroke-width="1" fill="none"/>
<path d="M42.0 858.5 H450.4 M42.0 898.5 H450.4 M42.0 937.5 H450.4" stroke="rgba(36,41,46,0.105)" stroke-width="1" fill="none"/>
<clipPath id="p7"><rect x="42.0" y="823.5" width="408.4" height="115.5"/></clipPath>
<g clip-path="url(#p7)" fill="none" stroke-width="1" stroke-linejoin="round">
<path d="M42.0 898.5 H450.4" stroke="#ffc000" stroke-opacity="0.9" stroke-dasharray="10 10"/>
<path d="M42.3,896.4 L44.0,884.7 L45.7,873.9 L47.4,885.3 L49.1,898.0 L50.8,889.9 L52.5,881.2 L54.1,871.5 L55.8,891.6 L57.5,900.1 L59.2,882.7 L60.9,878.5 L62.6,866.0 L64.3,866.9 L66.0,878.4 L67.7,884.6 L69.4,857.6 L71.1,876.8 L72.8,889.2 L74.4,897.6 L76.1,888.0 L77.8,883.9 L79.5,887.4 L81.2,885.8 L82.9,881.7 L84.6,875.9 L86.3,869.5 L88.0,876.2 L89.7,899.3 L91.4,882.5 L93.1,897.9 L94.8,890.9 L96.4,901.6 L98.1,890.5 L99.8,894.4 L101.5,885.6 L103.2,850.5 L104.9,871.6 L106.6,870.5 L108.3,892.3 L110.0,890.0 L111.7,879.3 L113.4,883.0 L115.1,879.7 L116.8,881.2 L118.4,893.1 L120.1,881.5 L121.8,891.3 L123.5,867.4 L125.2,882.7 L126.9,876.3 L128.6,880.9 L130.3,872.9 L132.0,885.8 L133.7,874.3 L135.4,881.4 L137.1,869.9 L138.7,872.1 L140.4,877.9 L142.1,889.6 L143.8,878.1 L145.5,876.8 L147.2,864.2 L148.9,880.2 L150.6,876.7 L152.3,875.9 L154.0,877.9 L155.7,879.4 L157.4,880.2 L159.1,888.6 L160.7,896.0 L162.4,892.5 L164.1,881.0 L165.8,867.2 L167.5,867.4 L169.2,866.7 L170.9,869.3 L172.6,871.1 L174.3,877.1 L176.0,873.3 L177.7,861.6 L179.4,878.7 L181.1,889.0 L182.7,865.6 L184.4,874.4 L186.1,870.2 L187.8,869.6 L189.5,890.1 L191.2,861.1 L192.9,856.9 L194.6,871.8 L196.3,871.5 L198.0,877.8 L199.7,890.6 L201.4,887.5 L203.0,881.4 L204.7,871.4 L206.4,871.8 L208.1,878.6 L209.8,867.9 L211.5,885.6 L213.2,876.3 L214.9,869.5 L216.6,881.4 L218.3,901.3 L220.0,899.8 L221.7,887.4 L223.4,879.7 L225.0,866.3 L226.7,887.5 L228.4,885.2 L230.1,877.6 L231.8,883.1 L233.5,907.9 L235.2,884.6 L236.9,860.3 L238.6,864.5 L240.3,885.9 L242.0,888.8 L243.7,883.4 L245.3,858.0 L247.0,867.6 L248.7,876.5 L250.4,865.0 L252.1,877.5 L253.8,862.2 L255.5,882.6 L257.2,888.2 L258.9,878.1 L260.6,867.0 L262.3,870.7 L264.0,875.7 L265.7,899.4 L267.3,897.1 L269.0,895.1 L270.7,893.6 L272.4,881.5 L274.1,886.3 L275.8,876.7 L277.5,880.2 L279.2,885.9 L280.9,883.4 L282.6,879.2 L284.3,873.2 L286.0,884.7 L287.7,886.5 L289.3,898.8 L291.0,873.0 L292.7,864.8 L294.4,878.4 L296.1,886.7 L297.8,897.6 L299.5,887.3 L301.2,883.0 L302.9,861.0 L304.6,872.6 L306.3,887.5 L308.0,910.4 L309.6,879.4 L311.3,880.2 L313.0,899.0 L314.7,887.7 L316.4,901.8 L318.1,854.8 L319.8,861.3 L321.5,869.3 L323.2,880.1 L324.9,904.4 L326.6,892.9 L328.3,903.2 L330.0,885.0 L331.6,906.3 L333.3,901.7 L335.0,878.0 L336.7,864.7 L338.4,888.7 L340.1,901.4 L341.8,881.4 L343.5,874.1 L345.2,890.3 L346.9,893.4 L348.6,894.6 L350.3,900.1 L352.0,897.0 L353.6,875.9 L355.3,873.7 L357.0,858.8 L358.7,875.2 L360.4,881.9 L362.1,893.2 L363.8,888.6 L365.5,899.1 L367.2,907.9 L368.9,885.8 L370.6,869.7 L372.3,869.8 L373.9,864.8 L375.6,874.0 L377.3,887.4 L379.0,884.3 L380.7,887.8 L382.4,896.7 L384.1,906.1 L385.8,907.5 L387.5,892.9 L389.2,885.7 L390.9,889.4 L392.6,871.2 L394.3,877.2 L395.9,875.3 L397.6,868.0 L399.3,886.2 L401.0,905.0 L402.7,884.1 L404.4,891.0 L406.1,873.0 L407.8,876.2 L409.5,870.6 L411.2,870.9 L412.9,900.3 L414.6,882.7 L416.3,890.3 L417.9,894.0 L419.6,892.1 L421.3,879.1 L423.0,872.9 L424.7,869.2 L426.4,895.3 L428.1,894.2 L429.8,912.2 L431.5,895.6 L433.2,882.1 L434.9,891.0 L436.6,884.0 L438.2,881.5 L439.9,872.5 L441.6,888.0 L443.3,893.9 L445.0,895.5 L446.7,870.2 L448.4,867.4" stroke="#56a64b"/>
<path d="M42.3,903.0 L44.0,891.4 L45.7,892.2 L47.4,894.6 L49.1,880.6 L50.8,884.6 L52.5,889.6 L54.1,870.1 L55.8,886.4 L57.5,900.5 L59.2,906.9 L60.9,900.7 L62.6,886.1 L64.3,878.6 L66.0,872.8 L67.7,863.2 L69.4,860.9 L71.1,870.9 L72.8,867.6 L74.4,873.2 L76.1,887.9 L77.8,879.1 L79.5,883.6 L81.2,888.1 L82.9,866.9 L84.6,871.6 L86.3,886.3 L88.0,887.7 L89.7,863.1 L91.4,880.6 L93.1,877.1 L94.8,876.9 L96.4,878.0 L98.1,877.6 L99.8,888.6 L101.5,892.5 L103.2,890.9 L104.9,892.3 L106.6,880.7 L108.3,868.7 L110.0,889.4 L111.7,882.3 L113.4,895.6 L115.1,897.6 L116.8,893.6 L118.4,888.5 L120.1,892.3 L121.8,916.3 L123.5,883.8 L125.2,888.7 L126.9,894.4 L128.6,882.8 L130.3,891.8 L132.0,903.8 L133.7,888.4 L135.4,883.3 L137.1,894.3 L138.7,881.2 L140.4,881.0 L142.1,896.7 L143.8,872.5 L145.5,878.8 L147.2,895.9 L148.9,885.8 L150.6,885.3 L152.3,876.4 L154.0,897.2 L155.7,880.1 L157.4,874.7 L159.1,875.2 L160.7,876.3 L162.4,869.3 L164.1,872.9 L165.8,880.5 L167.5,893.4 L169.2,878.0 L170.9,873.5 L172.6,878.9 L174.3,882.5 L176.0,877.9 L177.7,909.9 L179.4,892.5 L181.1,915.3 L182.7,895.4 L184.4,879.3 L186.1,864.5 L187.8,883.5 L189.5,881.4 L191.2,885.8 L192.9,909.9 L194.6,888.3 L196.3,887.8 L198.0,886.8 L199.7,896.9 L201.4,891.4 L203.0,888.0 L204.7,874.2 L206.4,879.3 L208.1,847.9 L209.8,876.6 L211.5,886.0 L213.2,887.4 L214.9,895.8 L216.6,874.8 L218.3,875.8 L220.0,896.2 L221.7,889.6 L223.4,876.2 L225.0,897.9 L226.7,889.8 L228.4,890.7 L230.1,864.3 L231.8,874.3 L233.5,886.6 L235.2,892.9 L236.9,869.7 L238.6,885.5 L240.3,862.8 L242.0,894.3 L243.7,892.0 L245.3,891.6 L247.0,896.3 L248.7,893.0 L250.4,882.3 L252.1,892.3 L253.8,904.2 L255.5,879.7 L257.2,869.1 L258.9,887.6 L260.6,884.3 L262.3,913.0 L264.0,886.2 L265.7,900.8 L267.3,898.2 L269.0,868.9 L270.7,893.5 L272.4,889.5 L274.1,899.3 L275.8,911.2 L277.5,908.5 L279.2,892.6 L280.9,903.0 L282.6,899.4 L284.3,884.4 L286.0,887.9 L287.7,901.2 L289.3,877.0 L291.0,882.2 L292.7,870.7 L294.4,892.0 L296.1,871.5 L297.8,895.4 L299.5,908.6 L301.2,899.9 L302.9,896.0 L304.6,887.9 L306.3,893.4 L308.0,883.0 L309.6,871.8 L311.3,888.3 L313.0,902.0 L314.7,897.1 L316.4,882.5 L318.1,877.0 L319.8,887.1 L321.5,897.5 L323.2,891.4 L324.9,878.9 L326.6,891.6 L328.3,875.4 L330.0,880.5 L331.6,881.7 L333.3,891.8 L335.0,874.8 L336.7,882.2 L338.4,900.9 L340.1,884.0 L341.8,890.5 L343.5,877.3 L345.2,881.8 L346.9,891.8 L348.6,887.3 L350.3,892.5 L352.0,897.9 L353.6,891.2 L355.3,880.1 L357.0,883.9 L358.7,887.0 L360.4,893.0 L362.1,883.6 L363.8,883.1 L365.5,875.8 L367.2,879.2 L368.9,862.1 L370.6,894.1 L372.3,890.5 L373.9,883.0 L375.6,876.4 L377.3,899.2 L379.0,904.6 L380.7,894.4 L382.4,879.1 L384.1,872.8 L385.8,897.7 L387.5,889.9 L389.2,876.2 L390.9,882.8 L392.6,896.4 L394.3,898.3 L395.9,905.4 L397.6,881.8 L399.3,888.0 L401.0,892.1 L402.7,898.3 L404.4,893.0 L406.1,899.0 L407.8,902.0 L409.5,893.4 L411.2,892.1 L412.9,884.4 L414.6,884.8 L416.3,874.1 L417.9,882.8 L419.6,883.0 L421.3,883.4 L423.0,894.3 L424.7,877.7 L426.4,889.6 L428.1,904.7 L429.8,881.0 L431.5,878.2 L433.2,889.8 L434.9,878.4 L436.6,874.0 L438.2,875.0 L439.9,894.9 L441.6,888.4 L443.3,898.6 L445.0,898.0 L446.7,897.3 L448.4,900.0" stroke="#e0b400"/>
<path d="M42.3,874.5 L44.0,856.8 L45.7,876.0 L47.4,894.5 L49.1,878.3 L50.8,867.8 L52.5,866.5 L54.1,864.4 L55.8,870.7 L57.5,878.3 L59.2,883.0 L60.9,878.6 L62.6,878.8 L64.3,864.0 L66.0,861.8 L67.7,882.2 L69.4,867.8 L71.1,870.5 L72.8,858.6 L74.4,849.7 L76.1,857.0 L77.8,886.2 L79.5,869.7 L81.2,888.6 L82.9,860.2 L84.6,874.7 L86.3,874.9 L88.0,852.1 L89.7,884.2 L91.4,876.0 L93.1,885.4 L94.8,882.7 L96.4,884.9 L98.1,868.8 L99.8,873.9 L101.5,868.5 L103.2,863.1 L104.9,887.8 L106.6,861.7 L108.3,870.6 L110.0,890.0 L111.7,886.0 L113.4,867.1 L115.1,858.4 L116.8,874.3 L118.4,871.4 L120.1,868.7 L121.8,858.6 L123.5,868.1 L125.2,859.0 L126.9,876.9 L128.6,881.8 L130.3,867.7 L132.0,861.7 L133.7,868.3 L135.4,863.3 L137.1,865.9 L138.7,860.5 L140.4,853.9 L142.1,858.8 L143.8,857.2 L145.5,870.5 L147.2,877.5 L148.9,900.7 L150.6,877.8 L152.3,873.5 L154.0,866.1 L155.7,890.9 L157.4,884.4 L159.1,882.7 L160.7,896.4 L162.4,870.5 L164.1,857.0 L165.8,880.6 L167.5,869.8 L169.2,851.0 L170.9,877.6 L172.6,862.4 L174.3,849.7 L176.0,841.7 L177.7,875.8 L179.4,885.3 L181.1,874.3 L182.7,858.6 L184.4,881.0 L186.1,883.7 L187.8,888.9 L189.5,865.3 L191.2,875.5 L192.9,866.4 L194.6,862.0 L196.3,854.5 L198.0,860.1 L199.7,863.2 L201.4,854.9 L203.0,859.6 L204.7,881.5 L206.4,881.4 L208.1,864.7 L209.8,867.3 L211.5,873.9 L213.2,869.5 L214.9,832.4 L216.6,857.2 L218.3,860.4 L220.0,861.9 L221.7,870.9 L223.4,857.4 L225.0,856.2 L226.7,861.0 L228.4,883.1 L230.1,861.3 L231.8,858.7 L233.5,867.5 L235.2,901.0 L236.9,883.3 L238.6,889.9 L240.3,881.1 L242.0,881.0 L243.7,884.6 L245.3,864.7 L247.0,867.5 L248.7,855.6 L250.4,876.6 L252.1,875.6 L253.8,857.2 L255.5,862.2 L257.2,876.3 L258.9,883.6 L260.6,882.9 L262.3,876.7 L264.0,865.5 L265.7,867.5 L267.3,861.2 L269.0,857.8 L270.7,864.9 L272.4,854.0 L274.1,856.3 L275.8,867.8 L277.5,871.9 L279.2,871.8 L280.9,880.1 L282.6,890.2 L284.3,878.1 L286.0,879.9 L287.7,867.9 L289.3,877.0 L291.0,872.4 L292.7,869.5 L294.4,876.1 L296.1,871.0 L297.8,879.6 L299.5,879.5 L301.2,865.2 L302.9,864.6 L304.6,868.9 L306.3,879.6 L308.0,866.5 L309.6,846.5 L311.3,887.2 L313.0,865.3 L314.7,866.6 L316.4,856.9 L318.1,852.4 L319.8,876.0 L321.5,853.1 L323.2,871.4 L324.9,874.3 L326.6,865.3 L328.3,870.1 L330.0,867.9 L331.6,876.1 L333.3,885.3 L335.0,876.5 L336.7,886.1 L338.4,861.5 L340.1,864.9 L341.8,852.8 L343.5,878.8 L345.2,898.4 L346.9,908.1 L348.6,889.8 L350.3,893.4 L352.0,875.7 L353.6,890.0 L355.3,894.6 L357.0,877.1 L358.7,878.2 L360.4,866.2 L362.1,860.2 L363.8,863.1 L365.5,882.4 L367.2,885.7 L368.9,850.7 L370.6,866.3 L372.3,866.2 L373.9,868.1 L375.6,870.5 L377.3,873.2 L379.0,878.7 L380.7,880.2 L382.4,898.2 L384.1,862.4 L385.8,869.3 L387.5,885.9 L389.2,871.0 L390.9,863.6 L392.6,885.3 L394.3,882.8 L395.9,858.6 L397.6,860.3 L399.3,862.4 L401.0,856.6 L402.7,867.4 L404.4,873.4 L406.1,853.8 L407.8,867.0 L409.5,870.7 L411.2,863.9 L412.9,868.3 L414.6,884.6 L416.3,854.6 L417.9,866.0 L419.6,848.7 L421.3,857.0 L423.0,876.5 L424.7,855.6 L426.4,867.5 L428.1,880.0 L429.8,875.1 L431.5,897.7 L433.2,876.8 L434.9,882.0 L436.6,878.4 L438.2,884.5 L439.9,868.6 L441.6,866.3 L443.3,857.1 L445.0,846.8 L446.7,858.9 L448.4,865.7" stroke="#5794f2"/>
<path d="M42.3,878.8 L44.0,876.8 L45.7,897.8 L47.4,911.1 L49.1,899.0 L50.8,886.4 L52.5,890.1 L54.1,903.7 L55.8,899.9 L57.5,880.5 L59.2,899.3 L60.9,883.8 L62.6,882.9 L64.3,882.9 L66.0,880.2 L67.7,891.4 L69.4,891.7 L71.1,873.9 L72.8,887.5 L74.4,893.0 L76.1,904.2 L77.8,899.8 L79.5,886.9 L81.2,877.3 L82.9,879.2 L84.6,880.1 L86.3,880.8 L88.0,883.4 L89.7,878.2 L91.4,886.9 L93.1,878.9 L94.8,886.4 L96.4,903.5 L98.1,907.0 L99.8,898.3 L101.5,897.4 L103.2,904.0 L104.9,902.4 L106.6,893.0 L108.3,887.4 L110.0,881.2 L111.7,894.6 L113.4,888.3 L115.1,879.8 L116.8,882.9 L118.4,871.0 L120.1,887.2 L121.8,889.0 L123.5,888.0 L125.2,893.0 L126.9,891.6 L128.6,888.5 L130.3,889.8 L132.0,894.5 L133.7,895.8 L135.4,892.9 L137.1,905.2 L138.7,894.1 L140.4,901.6 L142.1,896.7 L143.8,902.5 L145.5,893.9 L147.2,895.0 L148.9,894.3 L150.6,898.4 L152.3,892.2 L154.0,876.3 L155.7,901.3 L157.4,889.6 L159.1,887.8 L160.7,892.7 L162.4,902.7 L164.1,880.5 L165.8,884.7 L167.5,878.9 L169.2,889.2 L170.9,896.7 L172.6,882.7 L174.3,880.5 L176.0,889.2 L177.7,891.7 L179.4,885.0 L181.1,895.4 L182.7,899.7 L184.4,894.1 L186.1,882.4 L187.8,879.3 L189.5,884.3 L191.2,875.6 L192.9,885.9 L194.6,892.9 L196.3,869.8 L198.0,886.8 L199.7,883.4 L201.4,882.4 L203.0,886.0 L204.7,886.4 L206.4,882.3 L208.1,882.1 L209.8,892.3 L211.5,890.8 L213.2,877.7 L214.9,878.7 L216.6,889.6 L218.3,889.3 L220.0,898.7 L221.7,905.0 L223.4,900.4 L225.0,879.4 L226.7,891.6 L228.4,908.5 L230.1,898.0 L231.8,899.2 L233.5,886.8 L235.2,877.5 L236.9,888.2 L238.6,888.2 L240.3,897.4 L242.0,881.8 L243.7,893.5 L245.3,891.0 L247.0,868.8 L248.7,890.3 L250.4,888.5 L252.1,889.9 L253.8,885.7 L255.5,884.1 L257.2,874.2 L258.9,879.5 L260.6,880.5 L262.3,897.5 L264.0,889.1 L265.7,901.7 L267.3,883.4 L269.0,887.9 L270.7,880.4 L272.4,890.8 L274.1,888.1 L275.8,888.4 L277.5,884.3 L279.2,888.7 L280.9,894.7 L282.6,895.1 L284.3,897.7 L286.0,901.2 L287.7,905.2 L289.3,908.9 L291.0,880.0 L292.7,892.8 L294.4,901.0 L296.1,885.2 L297.8,885.5 L299.5,889.4 L301.2,879.4 L302.9,869.1 L304.6,889.7 L306.3,876.9 L308.0,879.8 L309.6,875.5 L311.3,889.2 L313.0,874.4 L314.7,873.5 L316.4,907.2 L318.1,884.9 L319.8,875.8 L321.5,897.1 L323.2,889.6 L324.9,891.4 L326.6,888.4 L328.3,897.1 L330.0,886.8 L331.6,882.0 L333.3,887.8 L335.0,889.7 L336.7,905.4 L338.4,890.9 L340.1,901.8 L341.8,894.2 L343.5,898.8 L345.2,869.6 L346.9,882.2 L348.6,873.0 L350.3,883.8 L352.0,888.0 L353.6,882.5 L355.3,887.3 L357.0,867.7 L358.7,883.1 L360.4,872.6 L362.1,894.1 L363.8,899.7 L365.5,887.7 L367.2,901.5 L368.9,876.5 L370.6,880.0 L372.3,885.3 L373.9,872.0 L375.6,887.8 L377.3,895.9 L379.0,915.8 L380.7,917.3 L382.4,903.1 L384.1,913.8 L385.8,892.1 L387.5,881.8 L389.2,882.7 L390.9,901.9 L392.6,902.3 L394.3,907.2 L395.9,890.0 L397.6,880.6 L399.3,888.4 L401.0,888.7 L402.7,887.4 L404.4,882.2 L406.1,895.2 L407.8,900.6 L409.5,886.8 L411.2,884.1 L412.9,883.3 L414.6,886.9 L416.3,881.8 L417.9,882.5 L419.6,892.6 L421.3,875.3 L423.0,874.4 L424.7,886.2 L426.4,889.4 L428.1,896.3 L429.8,905.1 L431.5,905.3 L433.2,908.8 L434.9,903.1 L436.6,892.0 L438.2,891.3 L439.9,903.6 L441.6,896.9 L443.3,898.4 L445.0,903.2 L446.7,884.8 L448.4,897.6" stroke="#ff780a"/>
<path d="M42.3,881.5 L44.0,882.7 L45.7,883.4 L47.4,889.2 L49.1,883.4 L50.8,883.3 L52.5,871.8 L54.1,889.4 L55.8,858.8 L57.5,907.1 L59.2,891.6 L60.9,876.9 L62.6,882.9 L64.3,891.0 L66.0,886.7 L67.7,877.0 L69.4,867.6 L71.1,893.5 L72.8,884.8 L74.4,890.7 L76.1,874.9 L77.8,885.5 L79.5,882.6 L81.2,871.6 L82.9,882.3 L84.6,880.7 L86.3,891.1 L88.0,889.9 L89.7,907.1 L91.4,902.2 L93.1,896.7 L94.8,896.5 L96.4,866.1 L98.1,902.0 L99.8,914.9 L101.5,893.6 L103.2,881.4 L104.9,881.7 L106.6,871.1 L108.3,857.1 L110.0,879.1 L111.7,896.8 L113.4,891.0 L115.1,874.3 L116.8,876.1 L118.4,883.5 L120.1,880.8 L121.8,880.0 L123.5,901.2 L125.2,886.0 L126.9,894.0 L128.6,890.7 L130.3,892.4 L132.0,886.6 L133.7,875.3 L135.4,883.1 L137.1,882.2 L138.7,873.9 L140.4,875.4 L142.1,888.1 L143.8,877.3 L145.5,886.1 L147.2,887.9 L148.9,883.4 L150.6,867.8 L152.3,887.3 L154.0,889.7 L155.7,884.7 L157.4,893.6 L159.1,886.6 L160.7,871.7 L162.4,898.6 L164.1,889.4 L165.8,893.9 L167.5,866.1 L169.2,871.0 L170.9,872.7 L172.6,881.2 L174.3,894.1 L176.0,887.2 L177.7,881.6 L179.4,882.9 L181.1,864.6 L182.7,868.5 L184.4,887.9 L186.1,889.7 L187.8,883.1 L189.5,896.6 L191.2,891.0 L192.9,893.4 L194.6,885.8 L196.3,883.3 L198.0,890.5 L199.7,873.0 L201.4,886.1 L203.0,877.7 L204.7,892.8 L206.4,897.6 L208.1,895.9 L209.8,892.9 L211.5,878.7 L213.2,898.0 L214.9,871.6 L216.6,892.2 L218.3,871.2 L220.0,877.1 L221.7,886.6 L223.4,876.1 L225.0,886.1 L226.7,884.8 L228.4,883.6 L230.1,853.1 L231.8,882.7 L233.5,863.0 L235.2,879.0 L236.9,889.7 L238.6,891.4 L240.3,873.5 L242.0,882.1 L243.7,891.6 L245.3,880.4 L247.0,879.7 L248.7,871.1 L250.4,891.2 L252.1,870.9 L253.8,866.1 L255.5,884.8 L257.2,888.0 L258.9,880.6 L260.6,885.4 L262.3,876.2 L264.0,875.0 L265.7,880.9 L267.3,895.1 L269.0,909.9 L270.7,891.0 L272.4,900.3 L274.1,878.4 L275.8,863.3 L277.5,875.0 L279.2,871.5 L280.9,866.2 L282.6,868.7 L284.3,890.3 L286.0,897.2 L287.7,894.6 L289.3,887.3 L291.0,894.5 L292.7,886.0 L294.4,871.1 L296.1,883.5 L297.8,883.8 L299.5,894.6 L301.2,889.6 L302.9,876.6 L304.6,867.1 L306.3,875.3 L308.0,889.3 L309.6,865.2 L311.3,899.0 L313.0,894.6 L314.7,896.4 L316.4,888.8 L318.1,879.8 L319.8,887.2 L321.5,847.2 L323.2,848.1 L324.9,861.3 L326.6,880.6 L328.3,899.1 L330.0,877.1 L331.6,872.1 L333.3,874.5 L335.0,864.9 L336.7,871.6 L338.4,894.5 L340.1,908.2 L341.8,897.3 L343.5,887.6 L345.2,878.8 L346.9,879.1 L348.6,884.1 L350.3,892.8 L352.0,881.4 L353.6,875.3 L355.3,887.0 L357.0,895.5 L358.7,892.9 L360.4,898.3 L362.1,887.3 L363.8,898.2 L365.5,886.0 L367.2,894.0 L368.9,882.7 L370.6,857.8 L372.3,886.2 L373.9,883.8 L375.6,858.3 L377.3,864.5 L379.0,874.6 L380.7,874.7 L382.4,883.6 L384.1,899.3 L385.8,918.0 L387.5,905.0 L389.2,898.7 L390.9,877.9 L392.6,878.9 L394.3,899.1 L395.9,885.0 L397.6,898.1 L399.3,876.9 L401.0,892.8 L402.7,878.5 L404.4,880.9 L406.1,888.4 L407.8,874.3 L409.5,882.9 L411.2,910.3 L412.9,889.8 L414.6,896.8 L416.3,893.6 L417.9,885.4 L419.6,876.8 L421.3,879.8 L423.0,894.0 L424.7,895.8 L426.4,901.2 L428.1,893.6 L429.8,895.3 L431.5,880.4 L433.2,890.5 L434.9,876.6 L436.6,862.1 L438.2,870.8 L439.9,881.4 L441.6,870.6 L443.3,888.7 L445.0,886.8 L446.7,871.1 L448.4,873.3" stroke="#e02f44"/>
<path d="M42.3,891.0 L44.0,878.0 L45.7,890.8 L47.4,881.1 L49.1,894.9 L50.8,880.3 L52.5,883.2 L54.1,869.7 L55.8,870.1 L57.5,878.1 L59.2,884.4 L60.9,879.3 L62.6,882.4 L64.3,891.7 L66.0,880.8 L67.7,906.4 L69.4,892.8 L71.1,866.5 L72.8,872.1 L74.4,892.9 L76.1,876.6 L77.8,879.2 L79.5,887.8 L81.2,891.2 L82.9,885.2 L84.6,876.0 L86.3,881.7 L88.0,865.8 L89.7,882.9 L91.4,875.0 L93.1,895.3 L94.8,906.8 L96.4,893.3 L98.1,884.6 L99.8,865.8 L101.5,880.0 L103.2,879.3 L104.9,893.6 L106.6,887.0 L108.3,879.3 L110.0,885.7 L111.7,874.3 L113.4,866.3 L115.1,871.0 L116.8,879.2 L118.4,883.6 L120.1,877.5 L121.8,890.9 L123.5,876.8 L125.2,886.6 L126.9,881.8 L128.6,893.4 L130.3,896.2 L132.0,896.0 L133.7,883.0 L135.4,882.7 L137.1,882.3 L138.7,873.3 L140.4,888.1 L142.1,876.5 L143.8,886.3 L145.5,893.1 L147.2,892.3 L148.9,876.4 L150.6,864.6 L152.3,881.5 L154.0,893.0 L155.7,902.2 L157.4,890.2 L159.1,881.7 L160.7,878.8 L162.4,879.2 L164.1,868.3 L165.8,877.1 L167.5,877.0 L169.2,883.6 L170.9,892.7 L172.6,908.6 L174.3,892.7 L176.0,892.8 L177.7,892.1 L179.4,892.7 L181.1,886.5 L182.7,883.5 L184.4,905.4 L186.1,895.5 L187.8,883.8 L189.5,880.4 L191.2,884.6 L192.9,882.3 L194.6,898.7 L196.3,885.9 L198.0,887.3 L199.7,884.4 L201.4,877.6 L203.0,880.2 L204.7,893.5 L206.4,906.8 L208.1,897.1 L209.8,888.9 L211.5,883.6 L213.2,873.8 L214.9,876.2 L216.6,877.8 L218.3,898.7 L220.0,881.9 L221.7,881.5 L223.4,862.7 L225.0,868.3 L226.7,885.2 L228.4,883.3 L230.1,877.4 L231.8,890.4 L233.5,902.2 L235.2,886.5 L236.9,890.0 L238.6,888.0 L240.3,884.5 L242.0,886.8 L243.7,877.2 L245.3,878.5 L247.0,879.0 L248.7,873.6 L250.4,880.3 L252.1,894.6 L253.8,887.8 L255.5,898.2 L257.2,887.0 L258.9,896.4 L260.6,888.7 L262.3,873.5 L264.0,873.2 L265.7,887.5 L267.3,898.9 L269.0,893.7 L270.7,877.5 L272.4,875.9 L274.1,895.6 L275.8,879.9 L277.5,879.4 L279.2,874.8 L280.9,866.8 L282.6,885.3 L284.3,878.7 L286.0,880.0 L287.7,871.7 L289.3,881.9 L291.0,896.6 L292.7,886.9 L294.4,875.3 L296.1,882.9 L297.8,885.8 L299.5,882.8 L301.2,884.6 L302.9,888.0 L304.6,889.3 L306.3,871.4 L308.0,883.2 L309.6,881.6 L311.3,871.5 L313.0,868.3 L314.7,893.8 L316.4,894.8 L318.1,899.9 L319.8,891.0 L321.5,908.3 L323.2,906.6 L324.9,893.6 L326.6,884.0 L328.3,895.0 L330.0,885.5 L331.6,871.8 L333.3,888.3 L335.0,872.9 L336.7,879.9 L338.4,903.6 L340.1,889.7 L341.8,884.7 L343.5,869.7 L345.2,885.1 L346.9,866.3 L348.6,877.4 L350.3,875.9 L352.0,882.4 L353.6,878.0 L355.3,869.2 L357.0,878.0 L358.7,886.5 L360.4,878.1 L362.1,883.9 L363.8,880.8 L365.5,872.6 L367.2,877.8 L368.9,877.6 L370.6,879.2 L372.3,880.8 L373.9,874.0 L375.6,868.1 L377.3,874.7 L379.0,896.9 L380.7,903.0 L382.4,883.0 L384.1,868.8 L385.8,865.1 L387.5,880.9 L389.2,880.0 L390.9,887.1 L392.6,880.7 L394.3,883.0 L395.9,893.0 L397.6,880.9 L399.3,882.0 L401.0,862.0 L402.7,863.9 L404.4,890.7 L406.1,877.4 L407.8,889.7 L409.5,891.6 L411.2,888.2 L412.9,897.8 L414.6,858.9 L416.3,865.9 L417.9,885.2 L419.6,872.8 L421.3,901.3 L423.0,877.9 L424.7,879.9 L426.4,879.4 L428.1,872.6 L429.8,876.9 L431.5,875.0 L433.2,889.1 L434.9,880.9 L436.6,885.0 L438.2,878.4 L439.9,883.0 L441.6,878.7 L443.3,886.1 L445.0,896.4 L446.7,895.3 L448.4,878.2" stroke="#3274d9"/>
</g>
</svg>
</div>
<div class="abs t" style="left:29.66px;top:851px;height:14px;line-height:14px;font-size:12.3px;color:#24292e;font-weight:400;letter-spacing:0.000px;-webkit-text-stroke:0.12px #24292e;">2</div>
<div class="abs t" style="left:29.66px;top:891px;height:14px;line-height:14px;font-size:12.3px;color:#24292e;font-weight:400;letter-spacing:0.000px;-webkit-text-stroke:0.12px #24292e;">1</div>
<div class="abs t" style="left:29.66px;top:930px;height:14px;line-height:14px;font-size:12.3px;color:#24292e;font-weight:400;letter-spacing:0.000px;-webkit-text-stroke:0.12px #24292e;">0</div>
<div class="abs t" style="left:92.02px;top:945px;height:14px;line-height:14px;font-size:12.3px;color:#24292e;font-weight:400;letter-spacing:0.055px;-webkit-text-stroke:0.12px #24292e;">14:40</div>
<div class="abs t" style="left:160.08px;top:945px;height:14px;line-height:14px;font-size:12.3px;color:#24292e;font-weight:400;letter-spacing:0.055px;-webkit-text-stroke:0.12px #24292e;">14:50</div>
<div class="abs t" style="left:228.15px;top:945px;height:14px;line-height:14px;font-size:12.3px;color:#24292e;font-weight:400;letter-spacing:0.055px;-webkit-text-stroke:0.12px #24292e;">15:00</div>
<div class="abs t" style="left:296.21px;top:945px;height:14px;line-height:14px;font-size:12.3px;color:#24292e;font-weight:400;letter-spacing:0.055px;-webkit-text-stroke:0.12px #24292e;">15:10</div>
<div class="abs t" style="left:364.28px;top:945px;height:14px;line-height:14px;font-size:12.3px;color:#24292e;font-weight:400;letter-spacing:0.055px;-webkit-text-stroke:0.12px #24292e;">15:20</div>
<div class="abs" style="left:432.35px;top:941px;width:25.42px;height:24px;overflow:hidden"><div class="abs t" style="left:0.00px;top:4px;height:14px;line-height:14px;font-size:12.3px;color:#24292e;font-weight:400;letter-spacing:0.055px;-webkit-text-stroke:0.12px #24292e;">15:30</div></div>
<div class="abs t" style="left:25.30px;top:791px;height:16px;line-height:16px;font-size:14.4px;color:#24292e;font-weight:400;letter-spacing:-0.845px;-webkit-text-stroke:0.35px #24292e;">CPU</div>
<div class="abs" style="left:29px;top:970px;width:14px;height:4px;border-radius:2px;background:#56a64b"></div>
<div class="abs t" style="left:51.40px;top:965px;height:14px;line-height:14px;font-size:12.3px;color:#24292e;font-weight:400;letter-spacing:0.640px;-webkit-text-stroke:0.12px #24292e;">ruler-querier-576c6496b5-9kfn5</div>
<div class="abs" style="left:29px;top:993.9px;width:14px;height:4px;border-radius:2px;background:#e0b400"></div>
<div class="abs t" style="left:51.40px;top:988px;height:14px;line-height:14px;font-size:12.3px;color:#24292e;font-weight:400;letter-spacing:0.637px;-webkit-text-stroke:0.12px #24292e;">ruler-querier-576c6496b5-chrl9</div>
<div class="abs" style="left:29px;top:1016.9px;width:14px;height:4px;border-radius:2px;background:#5794f2"></div>
<div class="abs t" style="left:51.40px;top:1012px;height:14px;line-height:14px;font-size:12.3px;color:#24292e;font-weight:400;letter-spacing:0.655px;-webkit-text-stroke:0.12px #24292e;">ruler-querier-576c6496b5-h4wfk</div>
<div class="panel" style="left:474.67px;top:782px;width:450.67px;height:258px">
<svg class="psvg" width="450.67" height="258" viewBox="474.67 782 450.67 258">
<path d="M586.5 831.5 V941.5 M650.5 831.5 V941.5 M715.5 831.5 V941.5 M779.5 831.5 V941.5 M843.5 831.5 V941.5 M907.5 831.5 V941.5" stroke="rgba(36,41,46,0.105)" stroke-width="1" fill="none"/>
<path d="M524.4 841.5 H909.0 M524.4 873.5 H909.0 M524.4 905.5 H909.0 M524.4 937.5 H909.0" stroke="rgba(36,41,46,0.105)" stroke-width="1" fill="none"/>
<clipPath id="p8"><rect x="524.4" y="823.5" width="384.6" height="115.5"/></clipPath>
<g clip-path="url(#p8)" fill="none" stroke-width="1" stroke-linejoin="round">
<path d="M524.4 841.5 H909.0" stroke="#e02f44" stroke-opacity="0.9" stroke-dasharray="10 10"/>
<path d="M524.4 889.5 H909.0" stroke="#ffc000" stroke-opacity="0.9" stroke-dasharray="10 10"/>
<path d="M524.7,925.7 L526.3,926.2 L527.9,925.4 L529.5,924.6 L531.1,924.4 L532.7,925.2 L534.3,925.6 L535.9,925.9 L537.4,926.0 L539.0,926.5 L540.6,927.0 L542.2,927.0 L543.8,920.7 L545.4,912.9 L547.0,920.8 L548.6,926.7 L550.2,925.4 L551.8,923.6 L553.4,918.7 L555.0,923.8 L556.6,924.8 L558.2,924.9 L559.7,924.6 L561.3,927.4 L562.9,926.6 L564.5,924.5 L566.1,923.6 L567.7,925.3 L569.3,925.9 L570.9,924.7 L572.5,925.4 L574.1,923.3 L575.7,917.8 L577.3,923.4 L578.9,927.0 L580.5,926.2 L582.0,925.0 L583.6,922.6 L585.2,913.7 L586.8,922.4 L588.4,925.1 L590.0,926.1 L591.6,924.9 L593.2,926.0 L594.8,926.5 L596.4,925.2 L598.0,925.4 L599.6,925.5 L601.2,926.9 L602.8,926.0 L604.3,924.9 L605.9,925.4 L607.5,926.5 L609.1,921.9 L610.7,916.8 L612.3,923.0 L613.9,925.9 L615.5,925.8 L617.1,925.3 L618.7,927.5 L620.3,925.9 L621.9,926.7 L623.5,925.3 L625.1,925.6 L626.6,925.6 L628.2,923.2 L629.8,917.8 L631.4,922.1 L633.0,926.6 L634.6,924.2 L636.2,925.6 L637.8,927.0 L639.4,924.6 L641.0,926.3 L642.6,926.2 L644.2,924.9 L645.8,925.8 L647.4,925.5 L648.9,924.6 L650.5,923.1 L652.1,920.8 L653.7,923.7 L655.3,926.7 L656.9,926.6 L658.5,924.5 L660.1,918.5 L661.7,923.3 L663.3,925.8 L664.9,924.8 L666.5,925.6 L668.1,925.9 L669.7,924.8 L671.2,925.2 L672.8,925.5 L674.4,924.8 L676.0,925.0 L677.6,925.5 L679.2,925.6 L680.8,926.0 L682.4,926.4 L684.0,923.8 L685.6,925.4 L687.2,927.5 L688.8,925.5 L690.4,926.3 L692.0,926.5 L693.5,925.9 L695.1,923.2 L696.7,917.8 L698.3,923.6 L699.9,925.7 L701.5,925.2 L703.1,927.5 L704.7,927.0 L706.3,926.8 L707.9,924.8 L709.5,926.0 L711.1,926.5 L712.7,923.4 L714.3,917.4 L715.8,922.5 L717.4,925.7 L719.0,925.3 L720.6,925.2 L722.2,925.1 L723.8,925.4 L725.4,926.2 L727.0,925.4 L728.6,925.8 L730.2,925.7 L731.8,924.6 L733.4,926.3 L735.0,925.2 L736.6,925.3 L738.2,925.6 L739.7,926.0 L741.3,923.9 L742.9,920.4 L744.5,924.8 L746.1,926.3 L747.7,924.2 L749.3,917.3 L750.9,920.7 L752.5,926.4 L754.1,924.8 L755.7,925.4 L757.3,924.7 L758.9,924.8 L760.5,925.5 L762.0,923.8 L763.6,921.1 L765.2,924.2 L766.8,925.7 L768.4,925.1 L770.0,927.1 L771.6,925.8 L773.2,923.1 L774.8,917.9 L776.4,923.0 L778.0,924.2 L779.6,925.8 L781.2,924.5 L782.8,924.6 L784.3,925.9 L785.9,925.9 L787.5,925.6 L789.1,925.8 L790.7,923.7 L792.3,925.4 L793.9,925.6 L795.5,926.2 L797.1,926.1 L798.7,926.1 L800.3,926.0 L801.9,925.5 L803.5,925.0 L805.1,924.6 L806.6,922.6 L808.2,923.1 L809.8,925.4 L811.4,925.5 L813.0,923.3 L814.6,915.3 L816.2,922.3 L817.8,925.2 L819.4,925.7 L821.0,925.4 L822.6,925.7 L824.2,923.1 L825.8,924.9 L827.4,918.0 L828.9,925.1 L830.5,925.5 L832.1,925.9 L833.7,926.5 L835.3,924.9 L836.9,926.2 L838.5,926.9 L840.1,925.7 L841.7,922.4 L843.3,915.7 L844.9,920.8 L846.5,925.9 L848.1,926.1 L849.7,927.4 L851.2,924.6 L852.8,924.2 L854.4,920.7 L856.0,923.8 L857.6,926.7 L859.2,926.3 L860.8,925.0 L862.4,925.8 L864.0,924.4 L865.6,926.0 L867.2,924.6 L868.8,922.8 L870.4,920.6 L872.0,924.1 L873.5,925.3 L875.1,925.8 L876.7,923.6 L878.3,919.1 L879.9,924.5 L881.5,926.2 L883.1,925.4 L884.7,925.9 L886.3,926.5 L887.9,926.2 L889.5,925.5 L891.1,925.4 L892.7,925.5 L894.3,925.5 L895.8,924.4 L897.4,925.8 L899.0,923.3 L900.6,916.1 L902.2,922.7 L903.8,925.8 L905.4,926.2 L907.0,926.0" stroke="#56a64b"/>
<path d="M524.7,926.7 L526.3,927.0 L527.9,925.5 L529.5,926.1 L531.1,924.6 L532.7,925.4 L534.3,926.4 L535.9,925.3 L537.4,925.8 L539.0,926.4 L540.6,925.2 L542.2,926.5 L543.8,924.4 L545.4,925.2 L547.0,926.3 L548.6,926.1 L550.2,925.3 L551.8,927.2 L553.4,926.1 L555.0,927.1 L556.6,925.9 L558.2,926.0 L559.7,924.8 L561.3,926.2 L562.9,926.0 L564.5,924.9 L566.1,926.6 L567.7,924.9 L569.3,924.7 L570.9,922.0 L572.5,923.7 L574.1,925.5 L575.7,926.4 L577.3,924.7 L578.9,924.7 L580.5,926.6 L582.0,926.5 L583.6,926.1 L585.2,926.1 L586.8,926.6 L588.4,925.5 L590.0,926.0 L591.6,925.8 L593.2,926.0 L594.8,925.8 L596.4,926.7 L598.0,926.7 L599.6,926.4 L601.2,926.3 L602.8,925.1 L604.3,922.6 L605.9,917.0 L607.5,923.8 L609.1,924.8 L610.7,925.6 L612.3,925.3 L613.9,926.8 L615.5,922.9 L617.1,915.4 L618.7,921.6 L620.3,926.2 L621.9,926.0 L623.5,926.1 L625.1,925.7 L626.6,926.2 L628.2,925.7 L629.8,926.0 L631.4,925.0 L633.0,926.2 L634.6,926.6 L636.2,926.9 L637.8,925.7 L639.4,924.5 L641.0,917.6 L642.6,922.7 L644.2,924.5 L645.8,927.6 L647.4,926.5 L648.9,926.0 L650.5,926.0 L652.1,924.5 L653.7,922.1 L655.3,915.9 L656.9,921.6 L658.5,925.0 L660.1,925.4 L661.7,926.7 L663.3,925.4 L664.9,921.4 L666.5,917.0 L668.1,922.4 L669.7,927.0 L671.2,926.4 L672.8,926.4 L674.4,925.4 L676.0,924.6 L677.6,926.4 L679.2,925.3 L680.8,925.4 L682.4,926.5 L684.0,925.5 L685.6,926.0 L687.2,925.6 L688.8,926.5 L690.4,925.4 L692.0,925.3 L693.5,925.8 L695.1,926.3 L696.7,927.3 L698.3,926.9 L699.9,925.1 L701.5,925.8 L703.1,926.3 L704.7,925.1 L706.3,925.6 L707.9,926.7 L709.5,926.2 L711.1,925.5 L712.7,925.8 L714.3,926.4 L715.8,926.5 L717.4,928.6 L719.0,926.6 L720.6,927.6 L722.2,925.2 L723.8,925.2 L725.4,926.2 L727.0,926.2 L728.6,926.6 L730.2,925.7 L731.8,925.4 L733.4,925.4 L735.0,924.4 L736.6,925.0 L738.2,925.5 L739.7,925.0 L741.3,923.3 L742.9,917.7 L744.5,921.6 L746.1,926.4 L747.7,923.4 L749.3,915.6 L750.9,921.9 L752.5,926.7 L754.1,925.7 L755.7,924.2 L757.3,925.7 L758.9,925.0 L760.5,927.3 L762.0,926.4 L763.6,926.7 L765.2,925.1 L766.8,925.7 L768.4,924.8 L770.0,925.6 L771.6,925.3 L773.2,927.3 L774.8,926.2 L776.4,924.3 L778.0,927.1 L779.6,926.3 L781.2,925.9 L782.8,926.9 L784.3,926.6 L785.9,926.0 L787.5,926.2 L789.1,925.9 L790.7,926.4 L792.3,924.9 L793.9,927.9 L795.5,926.8 L797.1,926.2 L798.7,926.2 L800.3,926.3 L801.9,926.8 L803.5,927.3 L805.1,924.8 L806.6,926.5 L808.2,926.4 L809.8,928.0 L811.4,926.5 L813.0,925.5 L814.6,925.7 L816.2,926.0 L817.8,926.7 L819.4,924.9 L821.0,924.6 L822.6,926.5 L824.2,925.4 L825.8,924.5 L827.4,922.2 L828.9,913.8 L830.5,924.1 L832.1,927.4 L833.7,925.9 L835.3,925.2 L836.9,923.7 L838.5,917.6 L840.1,923.1 L841.7,925.2 L843.3,926.0 L844.9,925.4 L846.5,925.8 L848.1,926.3 L849.7,926.2 L851.2,925.9 L852.8,924.5 L854.4,925.4 L856.0,925.6 L857.6,927.7 L859.2,921.6 L860.8,914.9 L862.4,923.1 L864.0,924.5 L865.6,926.8 L867.2,926.3 L868.8,926.4 L870.4,926.4 L872.0,927.5 L873.5,926.2 L875.1,924.8 L876.7,920.7 L878.3,923.5 L879.9,926.0 L881.5,925.7 L883.1,928.0 L884.7,926.7 L886.3,926.2 L887.9,926.2 L889.5,926.3 L891.1,925.9 L892.7,927.3 L894.3,925.0 L895.8,925.8 L897.4,927.3 L899.0,925.9 L900.6,926.3 L902.2,925.8 L903.8,925.3 L905.4,925.9 L907.0,925.6" stroke="#e0b400"/>
<path d="M524.7,918.5 L526.3,923.1 L527.9,925.8 L529.5,923.9 L531.1,919.1 L532.7,923.0 L534.3,925.9 L535.9,925.2 L537.4,926.7 L539.0,924.5 L540.6,925.1 L542.2,925.1 L543.8,924.9 L545.4,925.4 L547.0,923.6 L548.6,924.2 L550.2,926.4 L551.8,923.3 L553.4,924.3 L555.0,924.2 L556.6,926.7 L558.2,925.5 L559.7,925.8 L561.3,926.0 L562.9,925.3 L564.5,922.3 L566.1,919.1 L567.7,923.4 L569.3,925.2 L570.9,923.2 L572.5,914.8 L574.1,921.1 L575.7,924.8 L577.3,925.8 L578.9,924.9 L580.5,924.9 L582.0,925.1 L583.6,924.8 L585.2,924.2 L586.8,925.2 L588.4,925.2 L590.0,926.2 L591.6,925.9 L593.2,925.0 L594.8,920.9 L596.4,916.6 L598.0,922.7 L599.6,925.8 L601.2,923.1 L602.8,918.7 L604.3,923.2 L605.9,924.3 L607.5,924.3 L609.1,921.1 L610.7,923.6 L612.3,923.8 L613.9,926.0 L615.5,924.4 L617.1,925.4 L618.7,926.3 L620.3,927.0 L621.9,923.6 L623.5,919.7 L625.1,924.5 L626.6,926.2 L628.2,923.1 L629.8,918.4 L631.4,922.3 L633.0,925.3 L634.6,923.9 L636.2,925.7 L637.8,924.9 L639.4,925.4 L641.0,925.4 L642.6,923.5 L644.2,916.2 L645.8,924.1 L647.4,924.9 L648.9,925.9 L650.5,926.3 L652.1,923.2 L653.7,925.4 L655.3,926.0 L656.9,924.9 L658.5,925.4 L660.1,925.0 L661.7,925.2 L663.3,925.2 L664.9,925.8 L666.5,926.1 L668.1,926.7 L669.7,925.6 L671.2,924.3 L672.8,924.8 L674.4,921.2 L676.0,912.4 L677.6,921.1 L679.2,925.9 L680.8,925.9 L682.4,924.6 L684.0,923.7 L685.6,926.8 L687.2,925.7 L688.8,926.2 L690.4,924.4 L692.0,918.1 L693.5,924.1 L695.1,924.1 L696.7,923.1 L698.3,915.3 L699.9,923.5 L701.5,925.5 L703.1,924.6 L704.7,926.9 L706.3,925.3 L707.9,926.6 L709.5,926.1 L711.1,925.0 L712.7,925.8 L714.3,921.2 L715.8,924.3 L717.4,925.8 L719.0,924.0 L720.6,920.5 L722.2,924.5 L723.8,924.0 L725.4,925.6 L727.0,925.6 L728.6,925.5 L730.2,926.6 L731.8,925.7 L733.4,925.5 L735.0,925.2 L736.6,925.5 L738.2,924.9 L739.7,926.1 L741.3,924.1 L742.9,925.0 L744.5,926.2 L746.1,925.4 L747.7,925.9 L749.3,925.2 L750.9,924.1 L752.5,925.1 L754.1,923.2 L755.7,920.4 L757.3,925.1 L758.9,926.2 L760.5,922.6 L762.0,925.1 L763.6,924.9 L765.2,923.7 L766.8,920.9 L768.4,924.0 L770.0,925.0 L771.6,922.5 L773.2,918.7 L774.8,922.6 L776.4,926.7 L778.0,925.5 L779.6,925.0 L781.2,925.7 L782.8,925.0 L784.3,921.1 L785.9,924.3 L787.5,925.2 L789.1,925.0 L790.7,926.3 L792.3,926.3 L793.9,924.7 L795.5,925.6 L797.1,924.7 L798.7,923.4 L800.3,920.0 L801.9,924.4 L803.5,924.5 L805.1,924.5 L806.6,926.5 L808.2,926.1 L809.8,926.3 L811.4,922.8 L813.0,918.5 L814.6,922.7 L816.2,925.6 L817.8,924.8 L819.4,924.6 L821.0,921.4 L822.6,926.1 L824.2,924.7 L825.8,923.3 L827.4,918.6 L828.9,923.0 L830.5,925.4 L832.1,923.1 L833.7,921.4 L835.3,924.8 L836.9,925.8 L838.5,925.3 L840.1,925.0 L841.7,921.8 L843.3,913.3 L844.9,921.5 L846.5,925.6 L848.1,921.9 L849.7,917.9 L851.2,923.7 L852.8,926.5 L854.4,925.2 L856.0,926.6 L857.6,925.2 L859.2,924.0 L860.8,921.4 L862.4,912.9 L864.0,922.2 L865.6,925.1 L867.2,926.5 L868.8,925.4 L870.4,925.1 L872.0,926.0 L873.5,925.3 L875.1,926.9 L876.7,926.7 L878.3,925.6 L879.9,924.4 L881.5,925.2 L883.1,923.4 L884.7,926.1 L886.3,926.4 L887.9,926.1 L889.5,925.5 L891.1,924.6 L892.7,925.8 L894.3,924.2 L895.8,925.7 L897.4,921.2 L899.0,914.2 L900.6,922.4 L902.2,926.2 L903.8,924.1 L905.4,924.8 L907.0,925.7" stroke="#5794f2"/>
<path d="M524.7,926.9 L526.3,922.7 L527.9,914.0 L529.5,923.0 L531.1,926.9 L532.7,926.3 L534.3,928.2 L535.9,925.2 L537.4,925.6 L539.0,925.8 L540.6,926.2 L542.2,925.6 L543.8,925.6 L545.4,926.3 L547.0,927.0 L548.6,926.8 L550.2,926.4 L551.8,927.2 L553.4,925.9 L555.0,925.6 L556.6,927.4 L558.2,923.7 L559.7,921.1 L561.3,924.7 L562.9,926.6 L564.5,926.9 L566.1,926.9 L567.7,926.3 L569.3,927.5 L570.9,925.6 L572.5,927.6 L574.1,926.4 L575.7,926.3 L577.3,927.4 L578.9,926.8 L580.5,926.9 L582.0,927.3 L583.6,927.2 L585.2,924.8 L586.8,925.2 L588.4,926.6 L590.0,926.0 L591.6,925.9 L593.2,925.7 L594.8,925.6 L596.4,926.0 L598.0,927.3 L599.6,925.7 L601.2,928.1 L602.8,925.9 L604.3,926.7 L605.9,926.9 L607.5,925.4 L609.1,927.2 L610.7,925.0 L612.3,926.6 L613.9,925.8 L615.5,926.4 L617.1,926.7 L618.7,924.2 L620.3,924.4 L621.9,923.8 L623.5,918.9 L625.1,924.3 L626.6,925.2 L628.2,924.9 L629.8,924.7 L631.4,926.7 L633.0,926.5 L634.6,927.6 L636.2,926.3 L637.8,926.1 L639.4,923.8 L641.0,916.1 L642.6,921.7 L644.2,926.5 L645.8,925.8 L647.4,926.3 L648.9,926.8 L650.5,926.1 L652.1,925.8 L653.7,926.2 L655.3,926.7 L656.9,926.3 L658.5,925.9 L660.1,924.7 L661.7,920.8 L663.3,924.7 L664.9,925.9 L666.5,926.7 L668.1,927.4 L669.7,927.5 L671.2,926.3 L672.8,925.6 L674.4,925.3 L676.0,927.2 L677.6,927.3 L679.2,927.3 L680.8,926.9 L682.4,926.6 L684.0,926.9 L685.6,927.6 L687.2,925.6 L688.8,926.1 L690.4,926.8 L692.0,924.7 L693.5,926.6 L695.1,925.1 L696.7,927.0 L698.3,926.0 L699.9,928.0 L701.5,926.3 L703.1,926.7 L704.7,927.0 L706.3,925.9 L707.9,925.7 L709.5,927.4 L711.1,926.1 L712.7,925.5 L714.3,922.6 L715.8,913.3 L717.4,923.3 L719.0,926.7 L720.6,926.1 L722.2,926.0 L723.8,921.2 L725.4,915.6 L727.0,922.0 L728.6,926.4 L730.2,923.3 L731.8,914.7 L733.4,922.7 L735.0,925.2 L736.6,926.0 L738.2,925.4 L739.7,926.5 L741.3,926.4 L742.9,923.9 L744.5,920.2 L746.1,923.6 L747.7,925.3 L749.3,925.4 L750.9,925.4 L752.5,921.1 L754.1,923.9 L755.7,925.9 L757.3,926.2 L758.9,926.3 L760.5,927.3 L762.0,925.2 L763.6,926.2 L765.2,925.7 L766.8,926.7 L768.4,926.8 L770.0,926.7 L771.6,925.6 L773.2,926.7 L774.8,925.2 L776.4,926.4 L778.0,927.6 L779.6,926.0 L781.2,926.3 L782.8,926.4 L784.3,924.0 L785.9,925.9 L787.5,927.6 L789.1,926.2 L790.7,925.9 L792.3,926.6 L793.9,924.6 L795.5,926.3 L797.1,927.1 L798.7,927.0 L800.3,927.4 L801.9,926.4 L803.5,925.8 L805.1,922.6 L806.6,917.4 L808.2,922.6 L809.8,927.3 L811.4,923.6 L813.0,914.5 L814.6,923.9 L816.2,924.9 L817.8,924.2 L819.4,921.7 L821.0,926.1 L822.6,924.8 L824.2,926.1 L825.8,926.8 L827.4,925.7 L828.9,926.2 L830.5,925.0 L832.1,926.6 L833.7,926.4 L835.3,926.8 L836.9,926.1 L838.5,925.5 L840.1,927.4 L841.7,926.5 L843.3,922.8 L844.9,919.3 L846.5,924.2 L848.1,925.0 L849.7,926.6 L851.2,925.7 L852.8,925.9 L854.4,926.7 L856.0,927.9 L857.6,926.2 L859.2,922.8 L860.8,918.3 L862.4,923.3 L864.0,925.1 L865.6,927.0 L867.2,926.1 L868.8,922.8 L870.4,917.0 L872.0,922.3 L873.5,926.7 L875.1,925.9 L876.7,925.8 L878.3,926.4 L879.9,927.5 L881.5,926.8 L883.1,926.9 L884.7,926.5 L886.3,924.0 L887.9,917.3 L889.5,923.0 L891.1,925.4 L892.7,925.6 L894.3,926.4 L895.8,925.8 L897.4,925.9 L899.0,927.9 L900.6,926.5 L902.2,925.9 L903.8,926.7 L905.4,926.2 L907.0,926.1" stroke="#ff780a"/>
<path d="M524.7,926.6 L526.3,926.1 L527.9,924.7 L529.5,921.8 L531.1,913.4 L532.7,921.4 L534.3,926.8 L535.9,925.3 L537.4,925.1 L539.0,926.0 L540.6,923.5 L542.2,926.0 L543.8,924.7 L545.4,921.7 L547.0,923.9 L548.6,924.6 L550.2,927.4 L551.8,927.0 L553.4,924.8 L555.0,926.2 L556.6,926.3 L558.2,926.0 L559.7,924.5 L561.3,925.8 L562.9,926.6 L564.5,927.2 L566.1,927.1 L567.7,926.5 L569.3,927.1 L570.9,927.3 L572.5,925.3 L574.1,925.4 L575.7,926.5 L577.3,924.6 L578.9,925.5 L580.5,926.4 L582.0,925.5 L583.6,925.7 L585.2,926.5 L586.8,924.7 L588.4,927.1 L590.0,925.2 L591.6,923.7 L593.2,916.9 L594.8,922.9 L596.4,924.8 L598.0,927.6 L599.6,926.1 L601.2,925.1 L602.8,926.3 L604.3,924.3 L605.9,925.2 L607.5,925.0 L609.1,923.0 L610.7,917.6 L612.3,922.5 L613.9,925.9 L615.5,925.4 L617.1,926.4 L618.7,927.1 L620.3,926.6 L621.9,927.4 L623.5,926.8 L625.1,926.0 L626.6,925.9 L628.2,925.4 L629.8,926.5 L631.4,923.3 L633.0,919.6 L634.6,925.0 L636.2,926.7 L637.8,926.0 L639.4,926.5 L641.0,926.5 L642.6,924.1 L644.2,922.1 L645.8,924.7 L647.4,926.6 L648.9,924.7 L650.5,918.0 L652.1,922.4 L653.7,926.2 L655.3,926.4 L656.9,922.8 L658.5,918.8 L660.1,923.4 L661.7,924.9 L663.3,925.8 L664.9,926.0 L666.5,925.2 L668.1,925.7 L669.7,927.1 L671.2,925.1 L672.8,925.8 L674.4,924.5 L676.0,925.9 L677.6,927.5 L679.2,925.9 L680.8,926.1 L682.4,924.5 L684.0,924.9 L685.6,924.7 L687.2,926.2 L688.8,925.8 L690.4,924.7 L692.0,926.8 L693.5,925.6 L695.1,925.0 L696.7,926.4 L698.3,925.9 L699.9,927.9 L701.5,925.0 L703.1,927.0 L704.7,925.1 L706.3,925.9 L707.9,927.3 L709.5,927.3 L711.1,927.1 L712.7,926.5 L714.3,925.2 L715.8,926.3 L717.4,925.9 L719.0,927.3 L720.6,925.9 L722.2,926.4 L723.8,926.2 L725.4,925.9 L727.0,925.1 L728.6,925.6 L730.2,925.5 L731.8,922.1 L733.4,914.3 L735.0,921.7 L736.6,925.5 L738.2,926.1 L739.7,923.5 L741.3,918.7 L742.9,924.5 L744.5,925.8 L746.1,927.4 L747.7,926.1 L749.3,926.9 L750.9,926.3 L752.5,922.7 L754.1,918.7 L755.7,923.3 L757.3,926.2 L758.9,927.0 L760.5,925.4 L762.0,925.3 L763.6,926.4 L765.2,926.3 L766.8,926.2 L768.4,926.3 L770.0,925.6 L771.6,925.3 L773.2,926.3 L774.8,924.7 L776.4,926.5 L778.0,925.6 L779.6,923.5 L781.2,921.7 L782.8,924.1 L784.3,926.3 L785.9,926.0 L787.5,925.5 L789.1,923.5 L790.7,919.1 L792.3,921.9 L793.9,924.9 L795.5,925.8 L797.1,925.9 L798.7,925.3 L800.3,926.5 L801.9,925.3 L803.5,926.8 L805.1,925.4 L806.6,925.3 L808.2,926.0 L809.8,926.1 L811.4,925.9 L813.0,926.7 L814.6,926.7 L816.2,926.0 L817.8,925.8 L819.4,926.9 L821.0,926.3 L822.6,925.9 L824.2,926.0 L825.8,926.5 L827.4,926.0 L828.9,926.0 L830.5,923.7 L832.1,920.7 L833.7,924.8 L835.3,924.9 L836.9,926.2 L838.5,926.7 L840.1,926.8 L841.7,926.0 L843.3,920.6 L844.9,913.4 L846.5,923.7 L848.1,926.1 L849.7,924.6 L851.2,920.3 L852.8,923.0 L854.4,925.1 L856.0,924.1 L857.6,917.9 L859.2,923.1 L860.8,925.6 L862.4,924.9 L864.0,925.5 L865.6,926.3 L867.2,923.2 L868.8,919.4 L870.4,924.0 L872.0,925.6 L873.5,926.1 L875.1,926.8 L876.7,926.7 L878.3,926.6 L879.9,921.8 L881.5,914.1 L883.1,921.8 L884.7,926.2 L886.3,925.7 L887.9,926.5 L889.5,927.5 L891.1,925.2 L892.7,926.1 L894.3,925.9 L895.8,925.4 L897.4,924.8 L899.0,925.8 L900.6,925.4 L902.2,925.2 L903.8,925.2 L905.4,926.9 L907.0,926.9" stroke="#e02f44"/>
<path d="M524.7,925.3 L526.3,925.6 L527.9,926.5 L529.5,921.8 L531.1,915.7 L532.7,922.3 L534.3,925.4 L535.9,924.3 L537.4,924.9 L539.0,924.6 L540.6,925.9 L542.2,926.0 L543.8,926.5 L545.4,925.9 L547.0,927.9 L548.6,924.3 L550.2,925.5 L551.8,925.6 L553.4,924.9 L555.0,926.0 L556.6,925.4 L558.2,925.0 L559.7,927.0 L561.3,924.2 L562.9,925.5 L564.5,925.1 L566.1,926.5 L567.7,926.2 L569.3,924.2 L570.9,926.1 L572.5,926.0 L574.1,925.2 L575.7,924.4 L577.3,927.7 L578.9,924.4 L580.5,925.4 L582.0,924.9 L583.6,926.5 L585.2,925.4 L586.8,924.3 L588.4,925.7 L590.0,926.2 L591.6,926.0 L593.2,926.1 L594.8,923.6 L596.4,921.3 L598.0,924.7 L599.6,924.9 L601.2,926.6 L602.8,926.9 L604.3,923.5 L605.9,926.2 L607.5,924.2 L609.1,925.6 L610.7,923.1 L612.3,916.6 L613.9,923.6 L615.5,926.3 L617.1,925.8 L618.7,926.0 L620.3,925.0 L621.9,924.0 L623.5,926.7 L625.1,926.4 L626.6,925.0 L628.2,925.2 L629.8,924.7 L631.4,926.3 L633.0,925.1 L634.6,925.7 L636.2,927.0 L637.8,925.3 L639.4,927.0 L641.0,925.2 L642.6,926.0 L644.2,925.8 L645.8,923.8 L647.4,924.2 L648.9,922.5 L650.5,916.6 L652.1,923.5 L653.7,924.5 L655.3,925.1 L656.9,926.4 L658.5,927.1 L660.1,925.6 L661.7,925.8 L663.3,924.9 L664.9,926.5 L666.5,926.4 L668.1,925.3 L669.7,925.6 L671.2,924.8 L672.8,924.7 L674.4,926.4 L676.0,927.7 L677.6,925.6 L679.2,926.3 L680.8,925.4 L682.4,928.0 L684.0,925.7 L685.6,925.6 L687.2,926.1 L688.8,925.2 L690.4,925.6 L692.0,925.4 L693.5,924.5 L695.1,924.5 L696.7,924.6 L698.3,925.3 L699.9,925.4 L701.5,921.6 L703.1,914.3 L704.7,922.7 L706.3,925.2 L707.9,924.9 L709.5,926.0 L711.1,926.6 L712.7,925.1 L714.3,926.3 L715.8,926.9 L717.4,925.9 L719.0,926.8 L720.6,923.1 L722.2,919.1 L723.8,923.3 L725.4,924.6 L727.0,924.6 L728.6,923.8 L730.2,921.6 L731.8,924.1 L733.4,926.6 L735.0,924.8 L736.6,922.1 L738.2,918.2 L739.7,922.9 L741.3,925.1 L742.9,925.1 L744.5,925.9 L746.1,923.6 L747.7,921.9 L749.3,925.3 L750.9,925.6 L752.5,924.3 L754.1,925.8 L755.7,927.2 L757.3,924.6 L758.9,925.4 L760.5,925.2 L762.0,926.0 L763.6,925.2 L765.2,924.3 L766.8,926.2 L768.4,925.0 L770.0,925.3 L771.6,926.4 L773.2,925.5 L774.8,925.1 L776.4,926.3 L778.0,922.0 L779.6,918.4 L781.2,922.0 L782.8,925.0 L784.3,925.4 L785.9,926.3 L787.5,926.3 L789.1,927.5 L790.7,925.7 L792.3,925.7 L793.9,925.2 L795.5,924.8 L797.1,925.5 L798.7,925.9 L800.3,924.8 L801.9,925.6 L803.5,925.7 L805.1,926.6 L806.6,924.7 L808.2,926.2 L809.8,924.0 L811.4,926.4 L813.0,926.0 L814.6,925.6 L816.2,926.2 L817.8,926.9 L819.4,926.6 L821.0,926.3 L822.6,923.5 L824.2,917.4 L825.8,922.7 L827.4,925.3 L828.9,924.9 L830.5,927.5 L832.1,926.2 L833.7,926.0 L835.3,923.8 L836.9,916.7 L838.5,923.5 L840.1,926.5 L841.7,924.9 L843.3,926.2 L844.9,925.8 L846.5,926.9 L848.1,924.9 L849.7,925.5 L851.2,922.7 L852.8,918.3 L854.4,923.3 L856.0,925.9 L857.6,926.3 L859.2,924.2 L860.8,925.8 L862.4,925.1 L864.0,925.4 L865.6,928.5 L867.2,925.5 L868.8,925.5 L870.4,925.5 L872.0,925.8 L873.5,925.4 L875.1,926.5 L876.7,925.1 L878.3,926.1 L879.9,925.5 L881.5,924.1 L883.1,921.8 L884.7,915.0 L886.3,921.6 L887.9,926.7 L889.5,925.5 L891.1,924.4 L892.7,926.5 L894.3,925.8 L895.8,926.4 L897.4,925.5 L899.0,925.4 L900.6,925.5 L902.2,925.9 L903.8,927.3 L905.4,926.4 L907.0,926.0" stroke="#3274d9"/>
</g>
</svg>
</div>
<div class="abs t" style="left:487.33px;top:834px;height:14px;line-height:14px;font-size:12.3px;color:#24292e;font-weight:400;letter-spacing:0.200px;-webkit-text-stroke:0.12px #24292e;">6 GiB</div>
<div class="abs t" style="left:487.33px;top:866px;height:14px;line-height:14px;font-size:12.3px;color:#24292e;font-weight:400;letter-spacing:0.200px;-webkit-text-stroke:0.12px #24292e;">4 GiB</div>
<div class="abs t" style="left:487.33px;top:898px;height:14px;line-height:14px;font-size:12.3px;color:#24292e;font-weight:400;letter-spacing:0.200px;-webkit-text-stroke:0.12px #24292e;">2 GiB</div>
<div class="abs t" style="left:500.03px;top:930px;height:14px;line-height:14px;font-size:12.3px;color:#24292e;font-weight:400;letter-spacing:0.200px;-webkit-text-stroke:0.12px #24292e;">0 B</div>
<div class="abs t" style="left:570.55px;top:945px;height:14px;line-height:14px;font-size:12.3px;color:#24292e;font-weight:400;letter-spacing:0.055px;-webkit-text-stroke:0.12px #24292e;">14:40</div>
<div class="abs t" style="left:634.65px;top:945px;height:14px;line-height:14px;font-size:12.3px;color:#24292e;font-weight:400;letter-spacing:0.055px;-webkit-text-stroke:0.12px #24292e;">14:50</div>
<div class="abs t" style="left:698.75px;top:945px;height:14px;line-height:14px;font-size:12.3px;color:#24292e;font-weight:400;letter-spacing:0.055px;-webkit-text-stroke:0.12px #24292e;">15:00</div>
<div class="abs t" style="left:762.85px;top:945px;height:14px;line-height:14px;font-size:12.3px;color:#24292e;font-weight:400;letter-spacing:0.055px;-webkit-text-stroke:0.12px #24292e;">15:10</div>
<div class="abs t" style="left:826.95px;top:945px;height:14px;line-height:14px;font-size:12.3px;color:#24292e;font-weight:400;letter-spacing:0.055px;-webkit-text-stroke:0.12px #24292e;">15:20</div>
<div class="abs" style="left:891.05px;top:941px;width:25.39px;height:24px;overflow:hidden"><div class="abs t" style="left:0.00px;top:4px;height:14px;line-height:14px;font-size:12.3px;color:#24292e;font-weight:400;letter-spacing:0.055px;-webkit-text-stroke:0.12px #24292e;">15:30</div></div>
<div class="abs t" style="left:483.97px;top:791px;height:16px;line-height:16px;font-size:14.4px;color:#24292e;font-weight:400;letter-spacing:0.648px;-webkit-text-stroke:0.35px #24292e;">Memory (workingset)</div>
<div class="abs" style="left:487.67px;top:970px;width:14px;height:4px;border-radius:2px;background:#56a64b"></div>
<div class="abs t" style="left:510.07px;top:965px;height:14px;line-height:14px;font-size:12.3px;color:#24292e;font-weight:400;letter-spacing:0.640px;-webkit-text-stroke:0.12px #24292e;">ruler-querier-576c6496b5-9kfn5</div>
<div class="abs" style="left:487.67px;top:993.9px;width:14px;height:4px;border-radius:2px;background:#e0b400"></div>
<div class="abs t" style="left:510.07px;top:988px;height:14px;line-height:14px;font-size:12.3px;color:#24292e;font-weight:400;letter-spacing:0.637px;-webkit-text-stroke:0.12px #24292e;">ruler-querier-576c6496b5-chrl9</div>
<div class="abs" style="left:487.67px;top:1016.9px;width:14px;height:4px;border-radius:2px;background:#5794f2"></div>
<div class="abs t" style="left:510.07px;top:1012px;height:14px;line-height:14px;font-size:12.3px;color:#24292e;font-weight:400;letter-spacing:0.655px;-webkit-text-stroke:0.12px #24292e;">ruler-querier-576c6496b5-h4wfk</div>
<div class="panel" style="left:933.33px;top:782px;width:450.67px;height:258px">
<svg class="psvg" width="450.67" height="258" viewBox="933.33 782 450.67 258">
<path d="M1042.5 831.5 V941.5 M1107.5 831.5 V941.5 M1171.5 831.5 V941.5 M1236.5 831.5 V941.5 M1301.5 831.5 V941.5 M1365.5 831.5 V941.5" stroke="rgba(36,41,46,0.105)" stroke-width="1" fill="none"/>
<path d="M979.7 877.5 H1367.5 M979.7 937.5 H1367.5" stroke="rgba(36,41,46,0.105)" stroke-width="1" fill="none"/>
<clipPath id="p9"><rect x="979.7" y="823.5" width="387.8" height="115.5"/></clipPath>
<g clip-path="url(#p9)" fill="none" stroke-width="1" stroke-linejoin="round">
<path d="M980.0,906.3 L981.6,902.2 L983.2,902.5 L984.8,905.2 L986.4,895.5 L988.0,877.0 L989.6,897.6 L991.2,893.6 L992.9,905.3 L994.5,906.3 L996.1,897.1 L997.7,892.4 L999.3,910.1 L1000.9,895.1 L1002.5,903.7 L1004.1,894.2 L1005.7,906.9 L1007.3,903.4 L1008.9,908.4 L1010.5,899.0 L1012.1,897.7 L1013.7,898.0 L1015.3,887.8 L1016.9,904.4 L1018.5,900.5 L1020.2,895.5 L1021.8,905.6 L1023.4,894.6 L1025.0,902.9 L1026.6,898.8 L1028.2,895.9 L1029.8,899.7 L1031.4,904.2 L1033.0,906.0 L1034.6,898.9 L1036.2,896.1 L1037.8,902.4 L1039.4,900.4 L1041.0,905.8 L1042.6,903.5 L1044.2,906.8 L1045.9,911.0 L1047.5,897.3 L1049.1,900.2 L1050.7,902.2 L1052.3,893.7 L1053.9,903.2 L1055.5,909.4 L1057.1,895.6 L1058.7,905.6 L1060.3,883.8 L1061.9,906.0 L1063.5,903.3 L1065.1,899.4 L1066.7,902.7 L1068.3,888.6 L1070.0,903.8 L1071.6,904.9 L1073.2,901.1 L1074.8,903.3 L1076.4,889.0 L1078.0,904.9 L1079.6,899.9 L1081.2,893.2 L1082.8,906.4 L1084.4,907.1 L1086.0,905.7 L1087.6,905.2 L1089.2,904.7 L1090.8,905.7 L1092.4,891.2 L1094.0,911.4 L1095.7,901.1 L1097.3,902.8 L1098.9,896.4 L1100.5,908.2 L1102.1,881.8 L1103.7,910.4 L1105.3,898.9 L1106.9,900.5 L1108.5,904.2 L1110.1,893.3 L1111.7,898.2 L1113.3,904.2 L1114.9,900.0 L1116.5,896.6 L1118.1,904.5 L1119.7,903.9 L1121.3,901.7 L1123.0,895.0 L1124.6,896.2 L1126.2,905.4 L1127.8,896.1 L1129.4,899.2 L1131.0,899.1 L1132.6,903.3 L1134.2,896.8 L1135.8,901.4 L1137.4,887.8 L1139.0,904.2 L1140.6,899.8 L1142.2,905.2 L1143.8,900.6 L1145.4,904.3 L1147.0,898.0 L1148.7,898.6 L1150.3,903.8 L1151.9,901.7 L1153.5,895.0 L1155.1,902.7 L1156.7,906.0 L1158.3,902.1 L1159.9,897.2 L1161.5,901.7 L1163.1,898.1 L1164.7,900.1 L1166.3,903.0 L1167.9,902.8 L1169.5,901.1 L1171.1,879.3 L1172.8,904.6 L1174.4,900.0 L1176.0,903.7 L1177.6,894.2 L1179.2,902.3 L1180.8,899.1 L1182.4,904.8 L1184.0,903.3 L1185.6,902.0 L1187.2,897.1 L1188.8,900.5 L1190.4,903.7 L1192.0,902.6 L1193.6,895.0 L1195.2,911.2 L1196.8,904.7 L1198.5,890.6 L1200.1,908.1 L1201.7,903.2 L1203.3,904.8 L1204.9,905.4 L1206.5,903.3 L1208.1,904.6 L1209.7,907.2 L1211.3,904.9 L1212.9,883.7 L1214.5,898.7 L1216.1,899.6 L1217.7,904.3 L1219.3,899.2 L1220.9,894.8 L1222.5,888.1 L1224.2,892.5 L1225.8,901.1 L1227.4,903.3 L1229.0,900.0 L1230.6,895.5 L1232.2,900.9 L1233.8,896.4 L1235.4,887.0 L1237.0,907.4 L1238.6,903.4 L1240.2,907.6 L1241.8,900.9 L1243.4,899.4 L1245.0,904.9 L1246.6,904.2 L1248.2,887.5 L1249.8,907.9 L1251.5,902.8 L1253.1,903.1 L1254.7,904.4 L1256.3,899.8 L1257.9,905.1 L1259.5,899.4 L1261.1,900.1 L1262.7,887.0 L1264.3,906.8 L1265.9,889.4 L1267.5,901.7 L1269.1,898.7 L1270.7,905.8 L1272.3,903.1 L1273.9,906.3 L1275.5,906.9 L1277.2,901.0 L1278.8,903.9 L1280.4,903.3 L1282.0,902.3 L1283.6,903.6 L1285.2,899.3 L1286.8,903.2 L1288.4,900.3 L1290.0,899.9 L1291.6,902.0 L1293.2,905.6 L1294.8,909.2 L1296.4,905.6 L1298.0,892.1 L1299.6,899.4 L1301.2,887.8 L1302.9,893.4 L1304.5,905.1 L1306.1,889.2 L1307.7,903.3 L1309.3,903.5 L1310.9,900.3 L1312.5,903.0 L1314.1,898.7 L1315.7,901.6 L1317.3,901.0 L1318.9,903.0 L1320.5,901.9 L1322.1,896.8 L1323.7,903.5 L1325.3,901.8 L1327.0,901.8 L1328.6,897.6 L1330.2,903.9 L1331.8,905.0 L1333.4,902.8 L1335.0,901.5 L1336.6,894.2 L1338.2,901.8 L1339.8,905.9 L1341.4,898.9 L1343.0,903.6 L1344.6,900.1 L1346.2,908.1 L1347.8,896.5 L1349.4,904.1 L1351.0,899.1 L1352.7,902.5 L1354.3,897.8 L1355.9,894.1 L1357.5,890.1 L1359.1,897.5 L1360.7,900.5 L1362.3,907.0 L1363.9,902.0 L1365.5,897.1" stroke="#56a64b"/>
<path d="M980.0,891.0 L981.6,904.7 L983.2,895.0 L984.8,886.8 L986.4,894.8 L988.0,903.1 L989.6,892.2 L991.2,908.2 L992.9,902.7 L994.5,904.4 L996.1,906.2 L997.7,902.6 L999.3,895.4 L1000.9,899.2 L1002.5,901.8 L1004.1,903.4 L1005.7,894.7 L1007.3,905.1 L1008.9,905.0 L1010.5,897.2 L1012.1,897.7 L1013.7,902.0 L1015.3,909.5 L1016.9,904.1 L1018.5,885.2 L1020.2,904.5 L1021.8,902.4 L1023.4,902.9 L1025.0,903.2 L1026.6,904.1 L1028.2,895.2 L1029.8,880.9 L1031.4,906.0 L1033.0,901.4 L1034.6,906.2 L1036.2,906.8 L1037.8,892.2 L1039.4,891.2 L1041.0,900.7 L1042.6,903.8 L1044.2,903.0 L1045.9,902.6 L1047.5,901.4 L1049.1,893.7 L1050.7,900.1 L1052.3,897.8 L1053.9,911.6 L1055.5,897.5 L1057.1,892.6 L1058.7,897.0 L1060.3,911.2 L1061.9,901.5 L1063.5,887.2 L1065.1,902.5 L1066.7,889.5 L1068.3,903.0 L1070.0,907.6 L1071.6,903.6 L1073.2,891.9 L1074.8,904.0 L1076.4,903.5 L1078.0,904.5 L1079.6,900.3 L1081.2,900.7 L1082.8,907.4 L1084.4,892.2 L1086.0,909.4 L1087.6,881.5 L1089.2,902.4 L1090.8,902.0 L1092.4,909.8 L1094.0,901.0 L1095.7,908.6 L1097.3,905.2 L1098.9,903.7 L1100.5,897.9 L1102.1,907.3 L1103.7,902.0 L1105.3,896.7 L1106.9,895.5 L1108.5,901.8 L1110.1,903.8 L1111.7,907.2 L1113.3,903.5 L1114.9,904.7 L1116.5,893.4 L1118.1,903.4 L1119.7,907.5 L1121.3,899.9 L1123.0,903.9 L1124.6,889.4 L1126.2,902.8 L1127.8,907.8 L1129.4,904.2 L1131.0,896.3 L1132.6,906.9 L1134.2,902.6 L1135.8,901.6 L1137.4,905.6 L1139.0,876.7 L1140.6,897.0 L1142.2,904.9 L1143.8,905.9 L1145.4,902.2 L1147.0,902.1 L1148.7,905.8 L1150.3,903.7 L1151.9,899.9 L1153.5,901.9 L1155.1,905.3 L1156.7,901.6 L1158.3,887.0 L1159.9,899.8 L1161.5,908.1 L1163.1,902.4 L1164.7,904.0 L1166.3,902.0 L1167.9,890.8 L1169.5,899.4 L1171.1,904.4 L1172.8,898.0 L1174.4,902.8 L1176.0,897.8 L1177.6,902.4 L1179.2,900.3 L1180.8,901.4 L1182.4,909.6 L1184.0,902.7 L1185.6,901.3 L1187.2,903.5 L1188.8,896.0 L1190.4,904.1 L1192.0,903.9 L1193.6,893.5 L1195.2,875.6 L1196.8,900.5 L1198.5,906.4 L1200.1,898.1 L1201.7,903.9 L1203.3,902.1 L1204.9,900.9 L1206.5,905.5 L1208.1,902.4 L1209.7,898.5 L1211.3,908.1 L1212.9,902.2 L1214.5,901.9 L1216.1,906.9 L1217.7,903.7 L1219.3,899.0 L1220.9,907.8 L1222.5,903.4 L1224.2,876.5 L1225.8,898.8 L1227.4,894.4 L1229.0,896.2 L1230.6,900.4 L1232.2,905.3 L1233.8,903.2 L1235.4,896.9 L1237.0,901.5 L1238.6,901.4 L1240.2,900.7 L1241.8,908.5 L1243.4,908.5 L1245.0,900.9 L1246.6,900.9 L1248.2,895.6 L1249.8,906.2 L1251.5,897.0 L1253.1,907.7 L1254.7,907.1 L1256.3,909.6 L1257.9,893.0 L1259.5,909.9 L1261.1,881.6 L1262.7,896.1 L1264.3,901.6 L1265.9,898.4 L1267.5,900.8 L1269.1,896.0 L1270.7,899.4 L1272.3,894.6 L1273.9,904.9 L1275.5,900.4 L1277.2,907.7 L1278.8,912.9 L1280.4,907.7 L1282.0,901.1 L1283.6,895.4 L1285.2,881.4 L1286.8,901.3 L1288.4,905.3 L1290.0,896.8 L1291.6,895.8 L1293.2,895.0 L1294.8,907.0 L1296.4,894.1 L1298.0,901.7 L1299.6,900.2 L1301.2,905.6 L1302.9,905.3 L1304.5,900.0 L1306.1,889.8 L1307.7,904.2 L1309.3,898.0 L1310.9,897.2 L1312.5,904.3 L1314.1,897.8 L1315.7,909.2 L1317.3,895.4 L1318.9,897.7 L1320.5,896.6 L1322.1,905.7 L1323.7,903.4 L1325.3,899.0 L1327.0,906.6 L1328.6,876.1 L1330.2,908.0 L1331.8,904.2 L1333.4,905.8 L1335.0,897.4 L1336.6,896.7 L1338.2,903.6 L1339.8,886.4 L1341.4,901.3 L1343.0,891.2 L1344.6,902.8 L1346.2,892.0 L1347.8,869.6 L1349.4,899.7 L1351.0,903.7 L1352.7,900.4 L1354.3,879.9 L1355.9,892.4 L1357.5,902.7 L1359.1,900.3 L1360.7,899.6 L1362.3,885.5 L1363.9,906.1 L1365.5,907.0" stroke="#e0b400"/>
<path d="M980.0,888.6 L981.6,905.0 L983.2,900.7 L984.8,899.5 L986.4,900.3 L988.0,900.2 L989.6,903.5 L991.2,906.6 L992.9,902.5 L994.5,906.4 L996.1,879.7 L997.7,901.1 L999.3,904.2 L1000.9,902.1 L1002.5,899.2 L1004.1,903.4 L1005.7,847.0 L1007.3,899.5 L1008.9,900.1 L1010.5,893.2 L1012.1,907.1 L1013.7,904.2 L1015.3,909.6 L1016.9,896.6 L1018.5,893.4 L1020.2,905.7 L1021.8,905.3 L1023.4,899.4 L1025.0,902.9 L1026.6,889.1 L1028.2,901.9 L1029.8,869.1 L1031.4,895.4 L1033.0,900.6 L1034.6,906.3 L1036.2,905.0 L1037.8,890.7 L1039.4,896.1 L1041.0,905.2 L1042.6,901.6 L1044.2,901.5 L1045.9,904.8 L1047.5,898.4 L1049.1,902.0 L1050.7,903.1 L1052.3,907.1 L1053.9,900.6 L1055.5,899.3 L1057.1,901.9 L1058.7,883.1 L1060.3,905.4 L1061.9,902.1 L1063.5,902.3 L1065.1,903.4 L1066.7,906.6 L1068.3,902.1 L1070.0,898.3 L1071.6,908.5 L1073.2,908.9 L1074.8,892.7 L1076.4,901.6 L1078.0,907.2 L1079.6,903.3 L1081.2,904.5 L1082.8,873.4 L1084.4,898.9 L1086.0,899.1 L1087.6,905.0 L1089.2,908.2 L1090.8,907.1 L1092.4,902.5 L1094.0,898.8 L1095.7,891.6 L1097.3,896.5 L1098.9,904.7 L1100.5,903.8 L1102.1,898.9 L1103.7,908.7 L1105.3,896.3 L1106.9,902.9 L1108.5,878.1 L1110.1,886.2 L1111.7,905.0 L1113.3,901.9 L1114.9,898.1 L1116.5,898.8 L1118.1,895.0 L1119.7,896.5 L1121.3,897.6 L1123.0,900.3 L1124.6,901.6 L1126.2,898.9 L1127.8,899.7 L1129.4,908.9 L1131.0,912.4 L1132.6,904.5 L1134.2,887.7 L1135.8,888.4 L1137.4,908.5 L1139.0,906.9 L1140.6,904.2 L1142.2,902.1 L1143.8,904.7 L1145.4,881.1 L1147.0,899.4 L1148.7,902.5 L1150.3,899.8 L1151.9,903.1 L1153.5,906.0 L1155.1,906.1 L1156.7,890.7 L1158.3,903.6 L1159.9,899.5 L1161.5,906.3 L1163.1,895.9 L1164.7,903.2 L1166.3,892.8 L1167.9,900.4 L1169.5,879.3 L1171.1,906.8 L1172.8,904.4 L1174.4,902.8 L1176.0,907.9 L1177.6,903.3 L1179.2,895.3 L1180.8,901.0 L1182.4,870.8 L1184.0,900.8 L1185.6,902.4 L1187.2,900.0 L1188.8,901.6 L1190.4,904.6 L1192.0,905.8 L1193.6,873.2 L1195.2,890.2 L1196.8,905.7 L1198.5,903.2 L1200.1,904.6 L1201.7,886.7 L1203.3,903.9 L1204.9,903.9 L1206.5,898.6 L1208.1,900.5 L1209.7,894.6 L1211.3,897.6 L1212.9,905.6 L1214.5,897.4 L1216.1,899.8 L1217.7,899.2 L1219.3,900.2 L1220.9,903.1 L1222.5,847.0 L1224.2,907.1 L1225.8,907.1 L1227.4,893.8 L1229.0,902.7 L1230.6,890.5 L1232.2,904.4 L1233.8,903.1 L1235.4,902.8 L1237.0,882.6 L1238.6,902.5 L1240.2,909.5 L1241.8,898.5 L1243.4,886.7 L1245.0,903.8 L1246.6,903.6 L1248.2,896.2 L1249.8,900.2 L1251.5,908.1 L1253.1,903.0 L1254.7,900.4 L1256.3,906.1 L1257.9,901.0 L1259.5,902.0 L1261.1,903.4 L1262.7,906.9 L1264.3,905.2 L1265.9,902.7 L1267.5,902.4 L1269.1,915.0 L1270.7,890.7 L1272.3,906.9 L1273.9,902.1 L1275.5,901.2 L1277.2,902.6 L1278.8,897.0 L1280.4,878.9 L1282.0,900.7 L1283.6,899.0 L1285.2,904.7 L1286.8,891.4 L1288.4,888.9 L1290.0,902.4 L1291.6,900.3 L1293.2,898.4 L1294.8,906.2 L1296.4,892.1 L1298.0,900.1 L1299.6,900.5 L1301.2,906.8 L1302.9,899.2 L1304.5,904.9 L1306.1,898.5 L1307.7,905.8 L1309.3,901.0 L1310.9,872.8 L1312.5,896.5 L1314.1,886.1 L1315.7,903.2 L1317.3,901.9 L1318.9,903.7 L1320.5,888.5 L1322.1,903.7 L1323.7,907.8 L1325.3,857.7 L1327.0,891.0 L1328.6,898.3 L1330.2,901.1 L1331.8,903.3 L1333.4,899.6 L1335.0,899.9 L1336.6,897.9 L1338.2,897.5 L1339.8,899.9 L1341.4,906.2 L1343.0,875.0 L1344.6,886.2 L1346.2,883.0 L1347.8,897.7 L1349.4,905.8 L1351.0,899.2 L1352.7,900.1 L1354.3,889.3 L1355.9,905.8 L1357.5,892.3 L1359.1,900.4 L1360.7,906.7 L1362.3,894.7 L1363.9,901.5 L1365.5,892.1" stroke="#5794f2"/>
<path d="M980.0,899.2 L981.6,902.1 L983.2,906.1 L984.8,900.8 L986.4,898.2 L988.0,893.1 L989.6,896.0 L991.2,901.6 L992.9,903.2 L994.5,899.1 L996.1,897.3 L997.7,898.2 L999.3,906.3 L1000.9,897.7 L1002.5,905.9 L1004.1,905.0 L1005.7,901.8 L1007.3,904.9 L1008.9,900.8 L1010.5,850.5 L1012.1,898.8 L1013.7,906.5 L1015.3,907.2 L1016.9,900.6 L1018.5,903.7 L1020.2,901.7 L1021.8,884.1 L1023.4,897.0 L1025.0,864.0 L1026.6,904.9 L1028.2,894.7 L1029.8,903.0 L1031.4,904.4 L1033.0,903.9 L1034.6,898.1 L1036.2,905.1 L1037.8,892.4 L1039.4,899.1 L1041.0,891.9 L1042.6,892.0 L1044.2,896.5 L1045.9,902.2 L1047.5,905.9 L1049.1,900.1 L1050.7,900.2 L1052.3,894.3 L1053.9,895.0 L1055.5,904.0 L1057.1,904.9 L1058.7,892.1 L1060.3,897.0 L1061.9,903.3 L1063.5,901.2 L1065.1,898.1 L1066.7,907.6 L1068.3,903.3 L1070.0,905.6 L1071.6,891.3 L1073.2,898.5 L1074.8,907.3 L1076.4,900.8 L1078.0,910.1 L1079.6,903.5 L1081.2,902.2 L1082.8,897.7 L1084.4,903.3 L1086.0,905.6 L1087.6,898.0 L1089.2,900.6 L1090.8,908.5 L1092.4,902.8 L1094.0,892.1 L1095.7,902.7 L1097.3,903.7 L1098.9,904.5 L1100.5,861.2 L1102.1,907.0 L1103.7,905.8 L1105.3,897.4 L1106.9,889.4 L1108.5,867.3 L1110.1,891.3 L1111.7,900.8 L1113.3,904.6 L1114.9,891.5 L1116.5,897.3 L1118.1,880.4 L1119.7,906.3 L1121.3,902.2 L1123.0,906.0 L1124.6,903.3 L1126.2,894.6 L1127.8,888.4 L1129.4,897.2 L1131.0,898.0 L1132.6,890.8 L1134.2,877.0 L1135.8,902.9 L1137.4,901.8 L1139.0,907.6 L1140.6,901.8 L1142.2,888.4 L1143.8,855.6 L1145.4,905.9 L1147.0,902.3 L1148.7,894.5 L1150.3,908.2 L1151.9,895.6 L1153.5,905.8 L1155.1,900.7 L1156.7,894.3 L1158.3,899.6 L1159.9,894.9 L1161.5,892.7 L1163.1,903.0 L1164.7,904.3 L1166.3,878.2 L1167.9,904.8 L1169.5,894.1 L1171.1,899.0 L1172.8,893.6 L1174.4,892.7 L1176.0,897.3 L1177.6,902.1 L1179.2,898.1 L1180.8,895.1 L1182.4,902.4 L1184.0,898.4 L1185.6,898.2 L1187.2,901.6 L1188.8,903.2 L1190.4,900.6 L1192.0,904.0 L1193.6,900.1 L1195.2,890.7 L1196.8,905.6 L1198.5,902.2 L1200.1,902.7 L1201.7,902.5 L1203.3,895.2 L1204.9,893.4 L1206.5,903.5 L1208.1,906.6 L1209.7,902.5 L1211.3,904.7 L1212.9,885.3 L1214.5,904.8 L1216.1,903.1 L1217.7,896.9 L1219.3,906.5 L1220.9,898.3 L1222.5,895.2 L1224.2,898.5 L1225.8,896.0 L1227.4,904.2 L1229.0,905.4 L1230.6,899.9 L1232.2,908.9 L1233.8,901.1 L1235.4,890.1 L1237.0,899.9 L1238.6,901.8 L1240.2,896.3 L1241.8,901.6 L1243.4,898.7 L1245.0,900.4 L1246.6,903.4 L1248.2,900.7 L1249.8,897.3 L1251.5,901.6 L1253.1,904.6 L1254.7,899.0 L1256.3,901.6 L1257.9,903.3 L1259.5,902.3 L1261.1,903.8 L1262.7,911.0 L1264.3,904.5 L1265.9,903.7 L1267.5,900.4 L1269.1,902.6 L1270.7,904.4 L1272.3,873.1 L1273.9,895.4 L1275.5,907.9 L1277.2,900.2 L1278.8,891.8 L1280.4,886.1 L1282.0,904.1 L1283.6,904.5 L1285.2,903.7 L1286.8,864.3 L1288.4,900.5 L1290.0,897.1 L1291.6,899.6 L1293.2,901.9 L1294.8,895.1 L1296.4,898.5 L1298.0,901.6 L1299.6,869.2 L1301.2,893.2 L1302.9,899.2 L1304.5,898.4 L1306.1,873.8 L1307.7,900.8 L1309.3,900.4 L1310.9,904.4 L1312.5,899.2 L1314.1,906.5 L1315.7,901.4 L1317.3,902.3 L1318.9,903.8 L1320.5,903.2 L1322.1,891.9 L1323.7,906.6 L1325.3,901.5 L1327.0,898.4 L1328.6,896.9 L1330.2,896.3 L1331.8,873.5 L1333.4,901.2 L1335.0,896.5 L1336.6,902.0 L1338.2,902.8 L1339.8,906.2 L1341.4,859.3 L1343.0,893.3 L1344.6,903.2 L1346.2,907.6 L1347.8,885.8 L1349.4,902.4 L1351.0,903.2 L1352.7,893.5 L1354.3,901.6 L1355.9,901.7 L1357.5,891.5 L1359.1,893.9 L1360.7,901.7 L1362.3,905.6 L1363.9,901.2 L1365.5,901.3" stroke="#ff780a"/>
<path d="M980.0,898.9 L981.6,857.0 L983.2,905.3 L984.8,897.8 L986.4,902.1 L988.0,906.4 L989.6,898.2 L991.2,889.9 L992.9,877.9 L994.5,894.1 L996.1,904.9 L997.7,904.2 L999.3,909.6 L1000.9,900.1 L1002.5,902.4 L1004.1,895.5 L1005.7,902.5 L1007.3,902.2 L1008.9,907.1 L1010.5,903.6 L1012.1,903.6 L1013.7,883.3 L1015.3,888.3 L1016.9,901.7 L1018.5,893.9 L1020.2,901.0 L1021.8,901.2 L1023.4,900.1 L1025.0,899.5 L1026.6,895.8 L1028.2,901.2 L1029.8,901.3 L1031.4,882.8 L1033.0,898.3 L1034.6,899.9 L1036.2,903.0 L1037.8,899.6 L1039.4,904.3 L1041.0,902.2 L1042.6,906.8 L1044.2,889.9 L1045.9,880.1 L1047.5,893.5 L1049.1,893.4 L1050.7,905.0 L1052.3,905.0 L1053.9,893.5 L1055.5,898.9 L1057.1,907.7 L1058.7,902.8 L1060.3,910.4 L1061.9,899.2 L1063.5,862.6 L1065.1,897.7 L1066.7,882.1 L1068.3,903.9 L1070.0,907.2 L1071.6,874.6 L1073.2,849.2 L1074.8,900.3 L1076.4,902.1 L1078.0,907.3 L1079.6,903.7 L1081.2,894.3 L1082.8,905.2 L1084.4,891.1 L1086.0,906.3 L1087.6,897.3 L1089.2,902.3 L1090.8,903.1 L1092.4,900.7 L1094.0,898.9 L1095.7,889.5 L1097.3,908.4 L1098.9,896.2 L1100.5,898.8 L1102.1,854.8 L1103.7,901.8 L1105.3,899.6 L1106.9,894.0 L1108.5,881.0 L1110.1,894.3 L1111.7,898.7 L1113.3,896.8 L1114.9,905.1 L1116.5,905.1 L1118.1,901.2 L1119.7,906.0 L1121.3,885.7 L1123.0,896.1 L1124.6,908.2 L1126.2,903.9 L1127.8,904.2 L1129.4,902.9 L1131.0,901.4 L1132.6,907.0 L1134.2,903.0 L1135.8,905.0 L1137.4,899.6 L1139.0,896.2 L1140.6,906.1 L1142.2,902.2 L1143.8,898.1 L1145.4,906.5 L1147.0,895.7 L1148.7,901.7 L1150.3,899.3 L1151.9,900.0 L1153.5,901.0 L1155.1,906.1 L1156.7,889.6 L1158.3,902.2 L1159.9,902.4 L1161.5,902.0 L1163.1,896.7 L1164.7,889.4 L1166.3,892.7 L1167.9,897.8 L1169.5,900.0 L1171.1,894.4 L1172.8,906.1 L1174.4,900.9 L1176.0,903.3 L1177.6,903.3 L1179.2,880.6 L1180.8,895.6 L1182.4,893.5 L1184.0,901.9 L1185.6,896.4 L1187.2,868.7 L1188.8,909.9 L1190.4,898.0 L1192.0,905.3 L1193.6,887.7 L1195.2,897.5 L1196.8,903.2 L1198.5,886.6 L1200.1,904.2 L1201.7,900.3 L1203.3,901.7 L1204.9,901.5 L1206.5,893.4 L1208.1,912.3 L1209.7,901.6 L1211.3,902.1 L1212.9,902.4 L1214.5,901.4 L1216.1,904.7 L1217.7,894.3 L1219.3,894.0 L1220.9,869.0 L1222.5,900.0 L1224.2,906.2 L1225.8,906.0 L1227.4,904.8 L1229.0,897.2 L1230.6,894.1 L1232.2,905.8 L1233.8,905.1 L1235.4,902.3 L1237.0,902.0 L1238.6,901.7 L1240.2,905.5 L1241.8,903.9 L1243.4,903.9 L1245.0,896.4 L1246.6,902.5 L1248.2,902.4 L1249.8,893.2 L1251.5,901.5 L1253.1,909.4 L1254.7,899.9 L1256.3,900.6 L1257.9,905.0 L1259.5,902.9 L1261.1,878.1 L1262.7,902.7 L1264.3,901.8 L1265.9,890.5 L1267.5,896.2 L1269.1,906.3 L1270.7,894.3 L1272.3,907.5 L1273.9,858.5 L1275.5,905.1 L1277.2,910.3 L1278.8,904.1 L1280.4,898.7 L1282.0,898.6 L1283.6,905.5 L1285.2,900.1 L1286.8,904.5 L1288.4,890.6 L1290.0,893.8 L1291.6,903.1 L1293.2,906.5 L1294.8,890.6 L1296.4,901.6 L1298.0,897.0 L1299.6,900.7 L1301.2,902.8 L1302.9,903.3 L1304.5,907.8 L1306.1,898.4 L1307.7,895.2 L1309.3,903.8 L1310.9,904.4 L1312.5,907.6 L1314.1,902.2 L1315.7,904.9 L1317.3,881.5 L1318.9,902.1 L1320.5,904.8 L1322.1,904.5 L1323.7,906.6 L1325.3,903.2 L1327.0,894.8 L1328.6,902.6 L1330.2,885.6 L1331.8,905.6 L1333.4,899.7 L1335.0,890.8 L1336.6,895.0 L1338.2,905.7 L1339.8,904.7 L1341.4,895.3 L1343.0,902.0 L1344.6,902.2 L1346.2,892.5 L1347.8,888.0 L1349.4,892.1 L1351.0,906.4 L1352.7,899.9 L1354.3,896.8 L1355.9,904.4 L1357.5,898.9 L1359.1,888.7 L1360.7,888.0 L1362.3,903.8 L1363.9,905.2 L1365.5,883.0" stroke="#e02f44"/>
<path d="M980.0,904.8 L981.6,897.7 L983.2,903.8 L984.8,906.6 L986.4,906.3 L988.0,909.8 L989.6,873.5 L991.2,904.5 L992.9,902.6 L994.5,902.6 L996.1,901.4 L997.7,877.3 L999.3,887.7 L1000.9,904.1 L1002.5,904.4 L1004.1,892.0 L1005.7,899.2 L1007.3,905.8 L1008.9,900.8 L1010.5,900.3 L1012.1,898.0 L1013.7,895.2 L1015.3,890.8 L1016.9,889.8 L1018.5,907.6 L1020.2,904.9 L1021.8,902.5 L1023.4,906.5 L1025.0,889.9 L1026.6,853.0 L1028.2,905.7 L1029.8,903.0 L1031.4,896.2 L1033.0,903.8 L1034.6,891.3 L1036.2,902.4 L1037.8,900.5 L1039.4,904.8 L1041.0,907.4 L1042.6,903.6 L1044.2,906.8 L1045.9,890.1 L1047.5,907.7 L1049.1,903.6 L1050.7,902.4 L1052.3,906.8 L1053.9,899.8 L1055.5,881.7 L1057.1,889.3 L1058.7,903.1 L1060.3,898.0 L1061.9,909.6 L1063.5,902.2 L1065.1,908.3 L1066.7,909.3 L1068.3,904.6 L1070.0,897.1 L1071.6,898.9 L1073.2,888.5 L1074.8,896.7 L1076.4,892.5 L1078.0,903.3 L1079.6,904.4 L1081.2,896.3 L1082.8,905.2 L1084.4,907.3 L1086.0,902.1 L1087.6,904.2 L1089.2,904.4 L1090.8,900.9 L1092.4,902.8 L1094.0,904.6 L1095.7,908.9 L1097.3,903.4 L1098.9,891.4 L1100.5,911.5 L1102.1,881.5 L1103.7,896.3 L1105.3,884.9 L1106.9,867.0 L1108.5,898.0 L1110.1,903.7 L1111.7,903.5 L1113.3,892.0 L1114.9,902.9 L1116.5,902.0 L1118.1,901.5 L1119.7,902.1 L1121.3,856.7 L1123.0,901.6 L1124.6,890.7 L1126.2,896.3 L1127.8,908.1 L1129.4,904.0 L1131.0,860.5 L1132.6,909.2 L1134.2,906.4 L1135.8,901.2 L1137.4,910.8 L1139.0,900.4 L1140.6,901.4 L1142.2,902.7 L1143.8,897.4 L1145.4,898.7 L1147.0,905.0 L1148.7,900.4 L1150.3,894.9 L1151.9,891.2 L1153.5,907.2 L1155.1,884.2 L1156.7,904.4 L1158.3,904.0 L1159.9,905.5 L1161.5,899.0 L1163.1,887.8 L1164.7,909.6 L1166.3,902.6 L1167.9,904.7 L1169.5,891.7 L1171.1,895.6 L1172.8,905.2 L1174.4,908.2 L1176.0,903.6 L1177.6,900.8 L1179.2,903.5 L1180.8,890.2 L1182.4,897.3 L1184.0,909.4 L1185.6,904.8 L1187.2,904.9 L1188.8,874.2 L1190.4,894.6 L1192.0,852.8 L1193.6,872.7 L1195.2,899.9 L1196.8,893.9 L1198.5,900.8 L1200.1,902.8 L1201.7,902.0 L1203.3,905.7 L1204.9,899.2 L1206.5,895.7 L1208.1,897.4 L1209.7,906.2 L1211.3,899.2 L1212.9,905.6 L1214.5,893.9 L1216.1,908.5 L1217.7,893.8 L1219.3,908.6 L1220.9,895.3 L1222.5,903.5 L1224.2,882.6 L1225.8,899.7 L1227.4,866.6 L1229.0,904.5 L1230.6,900.1 L1232.2,898.3 L1233.8,891.8 L1235.4,906.2 L1237.0,906.1 L1238.6,864.4 L1240.2,901.4 L1241.8,903.3 L1243.4,887.8 L1245.0,904.1 L1246.6,892.2 L1248.2,905.6 L1249.8,902.6 L1251.5,893.5 L1253.1,897.0 L1254.7,903.1 L1256.3,890.9 L1257.9,886.0 L1259.5,902.0 L1261.1,901.0 L1262.7,903.2 L1264.3,903.1 L1265.9,904.2 L1267.5,900.7 L1269.1,898.3 L1270.7,888.0 L1272.3,900.6 L1273.9,907.3 L1275.5,904.1 L1277.2,906.9 L1278.8,905.3 L1280.4,901.6 L1282.0,872.7 L1283.6,902.2 L1285.2,862.5 L1286.8,901.9 L1288.4,888.0 L1290.0,910.6 L1291.6,901.6 L1293.2,898.3 L1294.8,903.0 L1296.4,907.6 L1298.0,903.1 L1299.6,902.8 L1301.2,884.2 L1302.9,905.8 L1304.5,898.7 L1306.1,892.2 L1307.7,906.1 L1309.3,895.8 L1310.9,900.0 L1312.5,868.3 L1314.1,895.1 L1315.7,900.3 L1317.3,908.6 L1318.9,907.9 L1320.5,898.9 L1322.1,904.2 L1323.7,904.4 L1325.3,900.9 L1327.0,898.2 L1328.6,899.1 L1330.2,905.2 L1331.8,899.3 L1333.4,902.9 L1335.0,904.1 L1336.6,902.6 L1338.2,889.1 L1339.8,899.8 L1341.4,889.2 L1343.0,906.0 L1344.6,904.6 L1346.2,885.7 L1347.8,906.0 L1349.4,857.9 L1351.0,904.0 L1352.7,899.2 L1354.3,895.2 L1355.9,907.0 L1357.5,884.8 L1359.1,906.6 L1360.7,901.8 L1362.3,907.4 L1363.9,899.8 L1365.5,897.7" stroke="#3274d9"/>
</g>
</svg>
</div>
<div class="abs t" style="left:944.53px;top:870px;height:14px;line-height:14px;font-size:12.3px;color:#24292e;font-weight:400;letter-spacing:-0.275px;-webkit-text-stroke:0.12px #24292e;">1 GiB</div>
<div class="abs t" style="left:955.33px;top:930px;height:14px;line-height:14px;font-size:12.3px;color:#24292e;font-weight:400;letter-spacing:0.200px;-webkit-text-stroke:0.12px #24292e;">0 B</div>
<div class="abs t" style="left:1026.37px;top:945px;height:14px;line-height:14px;font-size:12.3px;color:#24292e;font-weight:400;letter-spacing:0.055px;-webkit-text-stroke:0.12px #24292e;">14:40</div>
<div class="abs t" style="left:1091.00px;top:945px;height:14px;line-height:14px;font-size:12.3px;color:#24292e;font-weight:400;letter-spacing:0.055px;-webkit-text-stroke:0.12px #24292e;">14:50</div>
<div class="abs t" style="left:1155.63px;top:945px;height:14px;line-height:14px;font-size:12.3px;color:#24292e;font-weight:400;letter-spacing:0.055px;-webkit-text-stroke:0.12px #24292e;">15:00</div>
<div class="abs t" style="left:1220.27px;top:945px;height:14px;line-height:14px;font-size:12.3px;color:#24292e;font-weight:400;letter-spacing:0.055px;-webkit-text-stroke:0.12px #24292e;">15:10</div>
<div class="abs t" style="left:1284.90px;top:945px;height:14px;line-height:14px;font-size:12.3px;color:#24292e;font-weight:400;letter-spacing:0.055px;-webkit-text-stroke:0.12px #24292e;">15:20</div>
<div class="abs" style="left:1349.53px;top:941px;width:25.57px;height:24px;overflow:hidden"><div class="abs t" style="left:0.00px;top:4px;height:14px;line-height:14px;font-size:12.3px;color:#24292e;font-weight:400;letter-spacing:0.055px;-webkit-text-stroke:0.12px #24292e;">15:30</div></div>
<div class="abs t" style="left:942.63px;top:791px;height:16px;line-height:16px;font-size:14.4px;color:#24292e;font-weight:400;letter-spacing:0.453px;-webkit-text-stroke:0.35px #24292e;">Memory (go heap inuse)</div>
<div class="abs" style="left:946.33px;top:970px;width:14px;height:4px;border-radius:2px;background:#56a64b"></div>
<div class="abs t" style="left:968.73px;top:965px;height:14px;line-height:14px;font-size:12.3px;color:#24292e;font-weight:400;letter-spacing:0.640px;-webkit-text-stroke:0.12px #24292e;">ruler-querier-576c6496b5-9kfn5</div>
<div class="abs" style="left:946.33px;top:993.9px;width:14px;height:4px;border-radius:2px;background:#e0b400"></div>
<div class="abs t" style="left:968.73px;top:988px;height:14px;line-height:14px;font-size:12.3px;color:#24292e;font-weight:400;letter-spacing:0.637px;-webkit-text-stroke:0.12px #24292e;">ruler-querier-576c6496b5-chrl9</div>
<div class="abs" style="left:946.33px;top:1016.9px;width:14px;height:4px;border-radius:2px;background:#5794f2"></div>
<div class="abs t" style="left:968.73px;top:1012px;height:14px;line-height:14px;font-size:12.3px;color:#24292e;font-weight:400;letter-spacing:0.655px;-webkit-text-stroke:0.12px #24292e;">ruler-querier-576c6496b5-h4wfk</div>
</body></html>
